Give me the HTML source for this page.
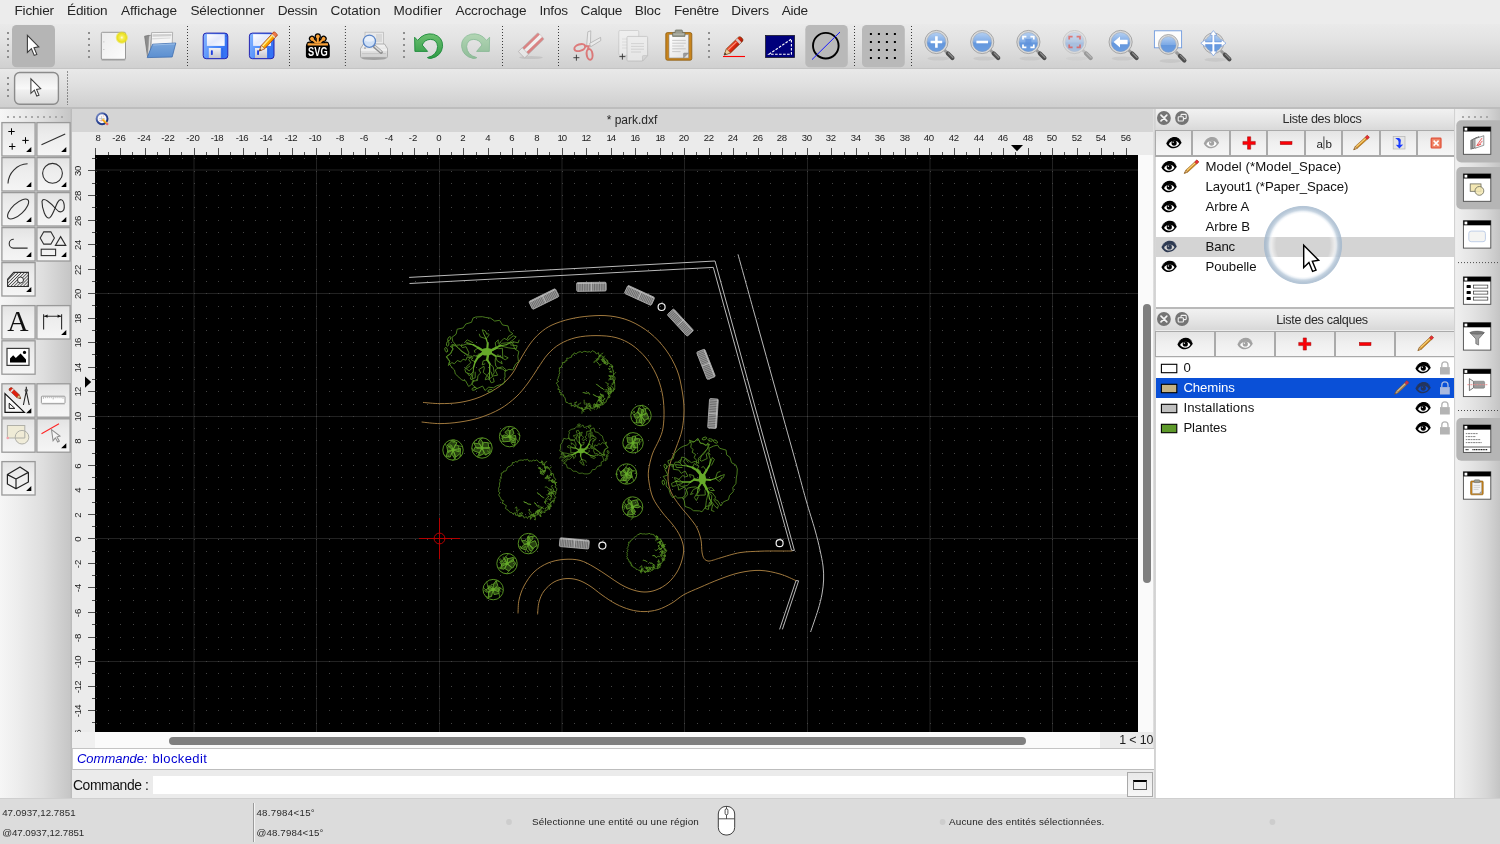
<!DOCTYPE html>
<html lang="fr"><head><meta charset="utf-8"><title>QCAD - park.dxf</title>
<style>
html,body{margin:0;padding:0;background:#ececec;}
body{width:1500px;height:844px;overflow:hidden;font-family:"Liberation Sans",sans-serif;}
#app{position:relative;width:1500px;height:844px;overflow:hidden;background:#ececec;}
.b{position:absolute;box-sizing:border-box;display:block;}
.t{position:absolute;white-space:nowrap;font-family:"Liberation Sans",sans-serif;}
svg{overflow:visible;}
#app{will-change:transform;}

</style></head>
<body>
<div id="app">
<div class="b " style="left:0px;top:0px;width:1500px;height:24px;background:#ececec;"></div>
<span class="t" style="left:14.50px;top:4.09px;font-size:13.6px;line-height:13.6px;color:#262626;letter-spacing:-0.213px;">Fichier</span>
<span class="t" style="left:67.00px;top:4.09px;font-size:13.6px;line-height:13.6px;color:#262626;letter-spacing:-0.152px;">Édition</span>
<span class="t" style="left:121.00px;top:4.09px;font-size:13.6px;line-height:13.6px;color:#262626;letter-spacing:-0.048px;">Affichage</span>
<span class="t" style="left:190.40px;top:4.09px;font-size:13.6px;line-height:13.6px;color:#262626;letter-spacing:-0.114px;">Sélectionner</span>
<span class="t" style="left:277.80px;top:4.09px;font-size:13.6px;line-height:13.6px;color:#262626;letter-spacing:-0.342px;">Dessin</span>
<span class="t" style="left:330.40px;top:4.09px;font-size:13.6px;line-height:13.6px;color:#262626;letter-spacing:-0.079px;">Cotation</span>
<span class="t" style="left:393.40px;top:4.09px;font-size:13.6px;line-height:13.6px;color:#262626;letter-spacing:0.081px;">Modifier</span>
<span class="t" style="left:455.40px;top:4.09px;font-size:13.6px;line-height:13.6px;color:#262626;letter-spacing:-0.079px;">Accrochage</span>
<span class="t" style="left:539.50px;top:4.09px;font-size:13.6px;line-height:13.6px;color:#262626;letter-spacing:-0.234px;">Infos</span>
<span class="t" style="left:580.60px;top:4.09px;font-size:13.6px;line-height:13.6px;color:#262626;letter-spacing:-0.263px;">Calque</span>
<span class="t" style="left:634.70px;top:4.09px;font-size:13.6px;line-height:13.6px;color:#262626;letter-spacing:-0.111px;">Bloc</span>
<span class="t" style="left:673.90px;top:4.09px;font-size:13.6px;line-height:13.6px;color:#262626;letter-spacing:-0.264px;">Fenêtre</span>
<span class="t" style="left:731.30px;top:4.09px;font-size:13.6px;line-height:13.6px;color:#262626;letter-spacing:-0.170px;">Divers</span>
<span class="t" style="left:781.70px;top:4.09px;font-size:13.6px;line-height:13.6px;color:#262626;letter-spacing:-0.252px;">Aide</span>
<div class="b " style="left:0px;top:24px;width:1500px;height:44px;background:linear-gradient(#eaeaea,#e2e2e2 40%,#d0d0d0);"></div>
<div class="b " style="left:0px;top:67.5px;width:1500px;height:1px;background:#c4c4c4;"></div>
<div class="b " style="left:0px;top:68.5px;width:1500px;height:1px;background:#e6e6e6;"></div>
<div class="b " style="left:0px;top:69px;width:1500px;height:38px;background:linear-gradient(#e9e9e9,#e0e0e0 40%,#cfcfcf);"></div>
<div class="b " style="left:0px;top:107px;width:1500px;height:1.5px;background:#bdbdbd;"></div>
<div class="b " style="left:0px;top:108.5px;width:1500px;height:690px;background:#ececec;"></div>
<svg class="b" style="left:0px;top:0px;" width="1500" height="108" viewBox="0 0 1500 108"><defs>
<linearGradient id="lensg" x1="0" y1="0" x2="0" y2="1"><stop offset="0" stop-color="#b9d3f3"/><stop offset="0.5" stop-color="#7fabe6"/><stop offset="1" stop-color="#8fb9ee"/></linearGradient>
<linearGradient id="paperg" x1="0" y1="0" x2="1" y2="1"><stop offset="0" stop-color="#ececec"/><stop offset="1" stop-color="#fcfcfc"/></linearGradient>
<radialGradient id="glow"><stop offset="0" stop-color="#fffef0"/><stop offset="0.25" stop-color="#f6ee5a"/><stop offset="0.7" stop-color="#e9df1c"/><stop offset="1" stop-color="#e9df1c" stop-opacity="0"/></radialGradient>
<linearGradient id="folderg" x1="0" y1="0" x2="0" y2="1"><stop offset="0" stop-color="#7aa6dc"/><stop offset="1" stop-color="#5b8fd0"/></linearGradient>
<linearGradient id="floppyg" x1="0" y1="0" x2="1" y2="0.35"><stop offset="0" stop-color="#8ab8ff"/><stop offset="0.55" stop-color="#4f8cfb"/><stop offset="1" stop-color="#3573f4"/></linearGradient>
<linearGradient id="labelg" x1="0" y1="0" x2="1" y2="1"><stop offset="0" stop-color="#ffffff"/><stop offset="0.5" stop-color="#e4e9fc"/><stop offset="1" stop-color="#fbfcff"/></linearGradient>
<linearGradient id="metalg" x1="0" y1="0" x2="0" y2="1"><stop offset="0" stop-color="#f0f0f4"/><stop offset="1" stop-color="#c4c4cc"/></linearGradient>
<linearGradient id="pencilg" x1="0" y1="0" x2="0" y2="1"><stop offset="0" stop-color="#ffd24a"/><stop offset="0.45" stop-color="#ffb400"/><stop offset="1" stop-color="#f08a00"/></linearGradient>
<linearGradient id="undog" x1="0" y1="0" x2="0" y2="1"><stop offset="0" stop-color="#6cc070"/><stop offset="1" stop-color="#2f9a45"/></linearGradient>
<linearGradient id="printg" x1="0" y1="0" x2="0" y2="1"><stop offset="0" stop-color="#f4f4f4"/><stop offset="1" stop-color="#cfcfcf"/></linearGradient>
<linearGradient id="clipg" x1="0" y1="0" x2="1" y2="1"><stop offset="0" stop-color="#ffffff"/><stop offset="1" stop-color="#e0e0e0"/></linearGradient>
<linearGradient id="redpg" x1="0" y1="0" x2="1" y2="1"><stop offset="0" stop-color="#ff6a4a"/><stop offset="0.5" stop-color="#e02a10"/><stop offset="1" stop-color="#a81808"/></linearGradient>
</defs><rect x="7" y="32" width="2" height="2" fill="#8e8e8e"/><rect x="7" y="38" width="2" height="2" fill="#8e8e8e"/><rect x="7" y="44" width="2" height="2" fill="#8e8e8e"/><rect x="7" y="50" width="2" height="2" fill="#8e8e8e"/><rect x="7" y="56" width="2" height="2" fill="#8e8e8e"/><rect x="12" y="25" width="43" height="42.3" rx="4.5" fill="#b5b5b5"/><path transform="translate(27.4,35.4)" d="M0,0 L0,17 L4,13.2 L6.8,20 L9.4,19 L6.6,12.3 L11.4,11.5 Z" fill="#fff" stroke="#3c3c3c" stroke-width="1.1" stroke-linejoin="miter"/><rect x="88" y="32" width="2" height="2" fill="#8e8e8e"/><rect x="88" y="38" width="2" height="2" fill="#8e8e8e"/><rect x="88" y="44" width="2" height="2" fill="#8e8e8e"/><rect x="88" y="50" width="2" height="2" fill="#8e8e8e"/><rect x="88" y="56" width="2" height="2" fill="#8e8e8e"/><rect x="101.3" y="32.6" width="24.2" height="27.2" rx="1" fill="#000" opacity="0.18" transform="translate(0,1)"/><rect x="101.3" y="32.3" width="24.2" height="27" rx="1.2" fill="url(#paperg)" stroke="#8e8e8e" stroke-width="0.9"/><rect x="103.2" y="41.5" width="1.2" height="0.8" fill="#bbb"/><rect x="103.2" y="49" width="1.2" height="0.8" fill="#bbb"/><circle cx="121.8" cy="37.6" r="6.6" fill="url(#glow)"/><path d="M144.6,36.2 L149,35.3 L151,36 L151.5,54.5 L147.5,56.5 Z" fill="#8c8c8c" stroke="#6e6e6e" stroke-width="0.7"/><path d="M151.6,32.6 L172.6,32.3 L172.2,45 L150.8,51 Z" fill="#f6f6f6" stroke="#9a9a9a" stroke-width="0.7"/><path d="M152.5,34.3 L171.5,34 L171.3,36.2 L152.4,36.8 Z" fill="#cfcfcf"/><path d="M152.3,38 L170.6,37.4 L170.5,38.6 L152.2,39.4 Z" fill="#dadada"/><path d="M149,36 L151.2,35 L150.2,53 L147.6,55.8 Z" fill="#dcdcdc" stroke="#8a8a8a" stroke-width="0.5"/><path d="M152.6,44.2 L175.8,43 L172.2,57 L147.2,57.6 Z" fill="url(#folderg)" stroke="#3f6fb0" stroke-width="0.8" stroke-linejoin="round"/><path d="M153.2,45 L175,43.9" stroke="#a6c6ec" stroke-width="0.8"/><line x1="187.5" y1="26" x2="187.5" y2="67" stroke="#3a3a3a" stroke-width="1" stroke-dasharray="1 2"/><rect x="203.2" y="33.1" width="24.6" height="25.6" rx="3" fill="url(#floppyg)" stroke="#2424b0" stroke-width="1"/><rect x="206.9" y="34.2" width="17.8" height="11.7" fill="url(#labelg)"/><rect x="208.8" y="48" width="12" height="10" fill="url(#metalg)"/><rect x="210.9" y="50.3" width="1.9" height="4.6" rx="0.6" fill="#1f3fe0"/><rect x="221.6" y="48.2" width="1.6" height="9.4" fill="#2f68ec"/><rect x="225.6" y="35.6" width="1" height="1" fill="#3a4ab0"/><rect x="249.4" y="33.1" width="24.6" height="25.6" rx="3" fill="url(#floppyg)" stroke="#2424b0" stroke-width="1"/><rect x="253.1" y="34.2" width="17.8" height="11.7" fill="url(#labelg)"/><rect x="255" y="48" width="12" height="10" fill="url(#metalg)"/><rect x="257.1" y="50.3" width="1.9" height="4.6" rx="0.6" fill="#1f3fe0"/><rect x="267.8" y="48.2" width="1.6" height="9.4" fill="#2f68ec"/><rect x="271.8" y="35.6" width="1" height="1" fill="#3a4ab0"/><g transform="translate(259.4,51) rotate(-47.2)"><path d="M0,0 L5.4,-2.4 L23.6,-2.4 L23.6,2.4 L5.4,2.4 Z" fill="url(#pencilg)" stroke="#a23a14" stroke-width="0.7"/><path d="M0,0 L5.4,-2.4 L5.4,2.4 Z" fill="#f6e2bc" stroke="#a23a14" stroke-width="0.5"/><path d="M0,0 L2,-0.9 L2,0.9 Z" fill="#30402a"/><rect x="20.8" y="-2.4" width="3.6" height="4.8" rx="1.2" fill="#f07a4a" stroke="#a23a14" stroke-width="0.6"/><rect x="19.6" y="-2.2" width="1.5" height="4.4" fill="#e8e0c8"/><path d="M5.8,-0.9 L19.4,-0.9" stroke="#fff0a0" stroke-width="1"/></g><line x1="289.5" y1="26" x2="289.5" y2="67" stroke="#3a3a3a" stroke-width="1" stroke-dasharray="1 2"/><g><g transform="translate(317.8,44.6) rotate(-90)"><path d="M0,0 L0,-7.2" stroke="#000" stroke-width="4.6" stroke-linecap="round"/><circle cx="0" cy="-8.2" r="3.1" fill="#000"/></g><g transform="translate(317.8,44.6) rotate(-45)"><path d="M0,0 L0,-7.2" stroke="#000" stroke-width="4.6" stroke-linecap="round"/><circle cx="0" cy="-8.2" r="3.1" fill="#000"/></g><g transform="translate(317.8,44.6) rotate(0)"><path d="M0,0 L0,-7.2" stroke="#000" stroke-width="4.6" stroke-linecap="round"/><circle cx="0" cy="-8.2" r="3.1" fill="#000"/></g><g transform="translate(317.8,44.6) rotate(45)"><path d="M0,0 L0,-7.2" stroke="#000" stroke-width="4.6" stroke-linecap="round"/><circle cx="0" cy="-8.2" r="3.1" fill="#000"/></g><g transform="translate(317.8,44.6) rotate(90)"><path d="M0,0 L0,-7.2" stroke="#000" stroke-width="4.6" stroke-linecap="round"/><circle cx="0" cy="-8.2" r="3.1" fill="#000"/></g><g transform="translate(317.8,44.6) rotate(-90)"><path d="M0,0 L0,-7.2" stroke="#f9a23a" stroke-width="2.1" stroke-linecap="round"/><circle cx="0" cy="-8.2" r="1.9" fill="#f9a23a"/></g><g transform="translate(317.8,44.6) rotate(-45)"><path d="M0,0 L0,-7.2" stroke="#f9a23a" stroke-width="2.1" stroke-linecap="round"/><circle cx="0" cy="-8.2" r="1.9" fill="#f9a23a"/></g><g transform="translate(317.8,44.6) rotate(0)"><path d="M0,0 L0,-7.2" stroke="#f9a23a" stroke-width="2.1" stroke-linecap="round"/><circle cx="0" cy="-8.2" r="1.9" fill="#f9a23a"/></g><g transform="translate(317.8,44.6) rotate(45)"><path d="M0,0 L0,-7.2" stroke="#f9a23a" stroke-width="2.1" stroke-linecap="round"/><circle cx="0" cy="-8.2" r="1.9" fill="#f9a23a"/></g><g transform="translate(317.8,44.6) rotate(90)"><path d="M0,0 L0,-7.2" stroke="#f9a23a" stroke-width="2.1" stroke-linecap="round"/><circle cx="0" cy="-8.2" r="1.9" fill="#f9a23a"/></g><rect x="305.9" y="43.6" width="23.9" height="14.6" rx="2.6" fill="#000"/><rect x="307.6" y="43.4" width="20.4" height="2.1" fill="#f9a23a"/><text x="317.9" y="56.4" text-anchor="middle" font-family="Liberation Sans, sans-serif" font-weight="bold" font-size="11.6" fill="#fff" textLength="19.6" lengthAdjust="spacingAndGlyphs" transform="translate(0,56.4) scale(1,1.1) translate(0,-56.4)">SVG</text></g><line x1="345.4" y1="26" x2="345.4" y2="67" stroke="#3a3a3a" stroke-width="1" stroke-dasharray="1 2"/><ellipse cx="374" cy="58.3" rx="12.5" ry="1.6" fill="#000" opacity="0.25"/><rect x="365" y="32.2" width="18.5" height="14" fill="#e9e9e9" stroke="#b5b5b5" stroke-width="0.7"/><rect x="376" y="34" width="6" height="8" fill="#d8d8d8"/><path d="M363.5,44 L384.5,44 L387.5,48.6 L387.5,56.6 Q387.5,57.6 386.5,57.6 L361.5,57.6 Q360.5,57.6 360.5,56.6 L360.5,48.6 Z" fill="url(#printg)" stroke="#9f9f9f" stroke-width="0.8"/><path d="M360.8,50 L387.2,50" stroke="#fafafa" stroke-width="1"/><path d="M362,53.6 L386,53.6" stroke="#bdbdbd" stroke-width="0.7"/><rect x="364" y="47.6" width="2" height="0.9" fill="#888"/><line x1="374.6" y1="46.6" x2="381.2" y2="52.2" stroke="#8d8d8d" stroke-width="3.4" stroke-linecap="round"/><line x1="375" y1="46.4" x2="381" y2="51.6" stroke="#dcdcdc" stroke-width="1.4" stroke-linecap="round"/><circle cx="369.4" cy="41.2" r="6.1" fill="#cfe0f6" stroke="#5c86c8" stroke-width="1.3"/><path d="M364.3,40.2 A5.2,5.2 0 0 1 374.5,40.2 Q369.4,43.4 364.3,40.2Z" fill="#eef4fc" opacity="0.8"/><rect x="403" y="32" width="2" height="2" fill="#8e8e8e"/><rect x="403" y="38" width="2" height="2" fill="#8e8e8e"/><rect x="403" y="44" width="2" height="2" fill="#8e8e8e"/><rect x="403" y="50" width="2" height="2" fill="#8e8e8e"/><rect x="403" y="56" width="2" height="2" fill="#8e8e8e"/><path d="M414.6,37.2 L417.6,40.4 Q424,32.4 433.4,34.2 Q443,37 442.6,46.4 Q441.6,56 431.2,58.4 Q427.6,58.6 427.4,57.6 Q437.2,55.2 437.6,46.6 Q437,39.4 430.4,39.4 Q424.6,39.6 422.2,45 L427.6,51.4 L414.9,51.4 Z" fill="url(#undog)" stroke="#1c8a3a" stroke-width="0.9" stroke-linejoin="round"/><g transform="translate(904.2,0) scale(-1,1)" opacity="0.42"><path d="M414.6,37.2 L417.6,40.4 Q424,32.4 433.4,34.2 Q443,37 442.6,46.4 Q441.6,56 431.2,58.4 Q427.6,58.6 427.4,57.6 Q437.2,55.2 437.6,46.6 Q437,39.4 430.4,39.4 Q424.6,39.6 422.2,45 L427.6,51.4 L414.9,51.4 Z" fill="url(#undog)" stroke="#1c8a3a" stroke-width="0.9" stroke-linejoin="round"/></g><line x1="502.5" y1="26" x2="502.5" y2="67" stroke="#3a3a3a" stroke-width="1" stroke-dasharray="1 2"/><g opacity="0.5"><ellipse cx="531" cy="57.6" rx="12" ry="1.5" fill="#9a9a9a" opacity="0.6"/><g transform="translate(521.3,54.5) rotate(-44)"><rect x="0" y="-4.2" width="27.2" height="9" rx="1" fill="#d42a2a" stroke="#8a8a8a" stroke-width="0.6"/><rect x="0" y="-1.4" width="27.2" height="3.2" fill="#ffffff"/><rect x="0" y="-4.2" width="5.4" height="9" fill="#f4f4f4" stroke="#8a8a8a" stroke-width="0.6"/></g></g><line x1="558.5" y1="26" x2="558.5" y2="67" stroke="#3a3a3a" stroke-width="1" stroke-dasharray="1 2"/><g opacity="0.55"><path d="M586.6,46.4 L587.8,31.8 L590.8,30.8 L590.4,45.4 Z" fill="#f2f2f2" stroke="#7a7a7a" stroke-width="0.7"/><path d="M589.6,43.4 L600.6,37.4 L600.8,40.6 L590.6,46.8 Z" fill="#f2f2f2" stroke="#7a7a7a" stroke-width="0.7"/><ellipse cx="579.8" cy="47.6" rx="5.6" ry="3.2" transform="rotate(-18 579.8 47.6)" fill="none" stroke="#dc2a2a" stroke-width="2"/><ellipse cx="589.6" cy="54.4" rx="2.9" ry="5.4" transform="rotate(-8 589.6 54.4)" fill="none" stroke="#dc2a2a" stroke-width="2"/><path d="M584.6,46 L588.6,46.4 L588,49.6" fill="none" stroke="#dc2a2a" stroke-width="2"/></g><path d="M573.4,57.7 L579.4,57.7 M576.4,54.7 L576.4,60.7" stroke="#333" stroke-width="0.9"/><g opacity="0.55"><rect x="618.8" y="30.4" width="20" height="25" rx="1.4" fill="#f6f6f6" stroke="#a8a8a8" stroke-width="0.7"/><path d="M622,39 h9 M622,42 h9 M622,45 h9 M622,48 h9" stroke="#cfcfcf" stroke-width="0.8"/><path d="M627,37.4 Q627,36.4 628,36.4 L646.6,36.4 Q647.6,36.4 647.6,37.4 L647.6,55.6 L642.6,61 L628,61 Q627,61 627,60 Z" fill="#f4f4f4" stroke="#9e9e9e" stroke-width="0.7"/><path d="M631,43.6 h13 M631,46.4 h13 M631,49.2 h13 M631,52 h10" stroke="#bdbdbd" stroke-width="0.8"/><path d="M647.6,55.6 L642.6,61 L642.4,56.4 Q642.4,55.6 643.4,55.6 Z" fill="#d4d4d4" stroke="#9e9e9e" stroke-width="0.5"/></g><path d="M619.4,56.6 L625.4,56.6 M622.4,53.6 L622.4,59.6" stroke="#333" stroke-width="0.9"/><rect x="665.8" y="32.6" width="26" height="27.6" rx="1.6" fill="#c8841c" stroke="#8a5a10" stroke-width="0.8"/><path d="M669,34.6 L688.6,34.6 L688.6,58 L669,58 Z" fill="url(#clipg)" stroke="#8a8a8a" stroke-width="0.6"/><path d="M672.2,40.4 h13.6 M672.2,43.2 h13.6 M672.2,46 h11.6 M672.2,48.8 h13.6 M672.2,51.6 h8.4" stroke="#c4c4c4" stroke-width="0.9"/><path d="M688.6,53 L683.6,58 L683.4,54 Q683.4,53 684.4,53 Z" fill="#9c9c9c" stroke="#777" stroke-width="0.4"/><path d="M672.6,36.4 L672.6,33.4 Q672.6,32.4 673.6,32.4 L675.2,32.4 L675.2,30.8 Q675.2,30 676,30 L681.6,30 Q682.4,30 682.4,30.8 L682.4,32.4 L684,32.4 Q685,32.4 685,33.4 L685,36.4 Z" fill="#9a9c90" stroke="#666a5c" stroke-width="0.7"/><path d="M673.4,34.2 h10.8" stroke="#c4c6ba" stroke-width="0.8"/><rect x="708" y="32" width="2" height="2" fill="#8e8e8e"/><rect x="708" y="38" width="2" height="2" fill="#8e8e8e"/><rect x="708" y="44" width="2" height="2" fill="#8e8e8e"/><rect x="708" y="50" width="2" height="2" fill="#8e8e8e"/><rect x="708" y="56" width="2" height="2" fill="#8e8e8e"/><g transform="translate(724.2,55) rotate(-44)"><path d="M0,0 L6,-2.9 L22.6,-2.9 Q24.6,-2.9 24.6,0 Q24.6,2.9 22.6,2.9 L6,2.9 Z" fill="url(#redpg)" stroke="#7a3a10" stroke-width="0.7"/><path d="M0,0 L6,-2.9 L6,2.9 Z" fill="#efcf9c" stroke="#7a5a30" stroke-width="0.5"/><path d="M0,0 L2.2,-1.1 L2.2,1.1 Z" fill="#222"/><rect x="18.6" y="-2.9" width="2.6" height="5.8" fill="#d8d8d8" opacity="0.9"/><path d="M6.4,-1 L18,-1" stroke="#ff9a80" stroke-width="1"/></g><line x1="723" y1="56.5" x2="745" y2="56.5" stroke="#f00" stroke-width="1.1"/><rect x="765.6" y="35.5" width="29" height="22" fill="#00007c" stroke="#1a1a2a" stroke-width="0.8"/><path d="M769,54.2 L791.4,39 L791.4,54.2 Z" fill="none" stroke="#ffffff" stroke-width="1.1" stroke-dasharray="2.6 1.4"/><rect x="805.3" y="25" width="42.5" height="42.3" rx="4.5" fill="#b9b9b9"/><circle cx="825.8" cy="45.7" r="12.8" fill="none" stroke="#000" stroke-width="1.9"/><line x1="812" y1="59.6" x2="840" y2="32" stroke="#1a1aff" stroke-width="1"/><line x1="854.5" y1="26" x2="854.5" y2="67" stroke="#3a3a3a" stroke-width="1" stroke-dasharray="1 2"/><rect x="862" y="25" width="42.8" height="42.3" rx="4.5" fill="#b9b9b9"/><rect x="869.9" y="33" width="2" height="2" fill="#000"/><rect x="869.9" y="41" width="2" height="2" fill="#000"/><rect x="869.9" y="49" width="2" height="2" fill="#000"/><rect x="869.9" y="57" width="2" height="2" fill="#000"/><rect x="877.9" y="33" width="2" height="2" fill="#000"/><rect x="877.9" y="41" width="2" height="2" fill="#000"/><rect x="877.9" y="49" width="2" height="2" fill="#000"/><rect x="877.9" y="57" width="2" height="2" fill="#000"/><rect x="885.9" y="33" width="2" height="2" fill="#000"/><rect x="885.9" y="41" width="2" height="2" fill="#000"/><rect x="885.9" y="49" width="2" height="2" fill="#000"/><rect x="885.9" y="57" width="2" height="2" fill="#000"/><rect x="893.9" y="33" width="2" height="2" fill="#000"/><rect x="893.9" y="41" width="2" height="2" fill="#000"/><rect x="893.9" y="49" width="2" height="2" fill="#000"/><rect x="893.9" y="57" width="2" height="2" fill="#000"/><line x1="911.5" y1="26" x2="911.5" y2="67" stroke="#3a3a3a" stroke-width="1" stroke-dasharray="1 2"/><g><ellipse cx="938.4" cy="58.5" rx="11" ry="2" fill="#000" opacity="0.06"/><line x1="943.9" y1="49.5" x2="947.4" y2="53" stroke="#9a9a9a" stroke-width="3"/><line x1="947.9" y1="53.5" x2="952.4" y2="58" stroke="#4d4d4d" stroke-width="4.2" stroke-linecap="round"/><line x1="948.4" y1="53" x2="952.9" y2="57.5" stroke="#8a8a8a" stroke-width="1.2" stroke-linecap="round"/><circle cx="936.4" cy="42" r="10.5" fill="url(#lensg)" stroke="#d9d9d9" stroke-width="2.2"/><circle cx="936.4" cy="42" r="11.6" fill="none" stroke="#8f8f8f" stroke-width="0.7"/><circle cx="936.4" cy="42" r="9.5" fill="none" stroke="#9aa7b8" stroke-width="0.6"/><path d="M927.1,42.5 A9.3,9.3 0 0 0 945.7,42.5 Z" fill="#4f86d6" opacity="0.55"/></g><path d="M930.6,42 h11.6 M936.4,36.2 v11.6" stroke="#fff" stroke-width="2.6"/><g><ellipse cx="984.2" cy="58.5" rx="11" ry="2" fill="#000" opacity="0.06"/><line x1="989.7" y1="49.5" x2="993.2" y2="53" stroke="#9a9a9a" stroke-width="3"/><line x1="993.7" y1="53.5" x2="998.2" y2="58" stroke="#4d4d4d" stroke-width="4.2" stroke-linecap="round"/><line x1="994.2" y1="53" x2="998.7" y2="57.5" stroke="#8a8a8a" stroke-width="1.2" stroke-linecap="round"/><circle cx="982.2" cy="42" r="10.5" fill="url(#lensg)" stroke="#d9d9d9" stroke-width="2.2"/><circle cx="982.2" cy="42" r="11.6" fill="none" stroke="#8f8f8f" stroke-width="0.7"/><circle cx="982.2" cy="42" r="9.5" fill="none" stroke="#9aa7b8" stroke-width="0.6"/><path d="M972.9,42.5 A9.3,9.3 0 0 0 991.5,42.5 Z" fill="#4f86d6" opacity="0.55"/></g><path d="M976.4,42 h11.6" stroke="#fff" stroke-width="2.6"/><g><ellipse cx="1030.4" cy="58.5" rx="11" ry="2" fill="#000" opacity="0.06"/><line x1="1035.9" y1="49.5" x2="1039.4" y2="53" stroke="#9a9a9a" stroke-width="3"/><line x1="1039.9" y1="53.5" x2="1044.4" y2="58" stroke="#4d4d4d" stroke-width="4.2" stroke-linecap="round"/><line x1="1040.4" y1="53" x2="1044.9" y2="57.5" stroke="#8a8a8a" stroke-width="1.2" stroke-linecap="round"/><circle cx="1028.4" cy="42" r="10.5" fill="url(#lensg)" stroke="#d9d9d9" stroke-width="2.2"/><circle cx="1028.4" cy="42" r="11.6" fill="none" stroke="#8f8f8f" stroke-width="0.7"/><circle cx="1028.4" cy="42" r="9.5" fill="none" stroke="#9aa7b8" stroke-width="0.6"/><path d="M1019.1,42.5 A9.3,9.3 0 0 0 1037.7,42.5 Z" fill="#4f86d6" opacity="0.55"/></g><path d="M1023,39.6 v-3 h3.4 M1030.4,36.6 h3.4 v3 M1033.8,44.4 v3 h-3.4 M1026.4,47.4 h-3.4 v-3" fill="none" stroke="#fff" stroke-width="1.7"/><rect x="1025.4" y="39" width="6" height="6" fill="#5f92dc" opacity="0.7"/><g opacity="0.45"><ellipse cx="1076.6" cy="58.5" rx="11" ry="2" fill="#000" opacity="0.06"/><line x1="1082.1" y1="49.5" x2="1085.6" y2="53" stroke="#9a9a9a" stroke-width="3"/><line x1="1086.1" y1="53.5" x2="1090.6" y2="58" stroke="#4d4d4d" stroke-width="4.2" stroke-linecap="round"/><line x1="1086.6" y1="53" x2="1091.1" y2="57.5" stroke="#8a8a8a" stroke-width="1.2" stroke-linecap="round"/><circle cx="1074.6" cy="42" r="10.5" fill="url(#lensg)" stroke="#d9d9d9" stroke-width="2.2"/><circle cx="1074.6" cy="42" r="11.6" fill="none" stroke="#8f8f8f" stroke-width="0.7"/><circle cx="1074.6" cy="42" r="9.5" fill="none" stroke="#9aa7b8" stroke-width="0.6"/><path d="M1065.3,42.5 A9.3,9.3 0 0 0 1083.9,42.5 Z" fill="#4f86d6" opacity="0.55"/></g><g opacity="0.6"><path d="M1069.2,39.6 v-3 h3.4 M1076.6,36.6 h3.4 v3 M1080,44.4 v3 h-3.4 M1072.6,47.4 h-3.4 v-3" fill="none" stroke="#f03a2a" stroke-width="1.7"/></g><g><ellipse cx="1122.6" cy="58.5" rx="11" ry="2" fill="#000" opacity="0.06"/><line x1="1128.1" y1="49.5" x2="1131.6" y2="53" stroke="#9a9a9a" stroke-width="3"/><line x1="1132.1" y1="53.5" x2="1136.6" y2="58" stroke="#4d4d4d" stroke-width="4.2" stroke-linecap="round"/><line x1="1132.6" y1="53" x2="1137.1" y2="57.5" stroke="#8a8a8a" stroke-width="1.2" stroke-linecap="round"/><circle cx="1120.6" cy="42" r="10.5" fill="url(#lensg)" stroke="#d9d9d9" stroke-width="2.2"/><circle cx="1120.6" cy="42" r="11.6" fill="none" stroke="#8f8f8f" stroke-width="0.7"/><circle cx="1120.6" cy="42" r="9.5" fill="none" stroke="#9aa7b8" stroke-width="0.6"/><path d="M1111.3,42.5 A9.3,9.3 0 0 0 1129.9,42.5 Z" fill="#4f86d6" opacity="0.55"/></g><path d="M1113.6,42 L1120,36.4 L1120,39.8 L1127.6,39.8 L1127.6,44.2 L1120,44.2 L1120,47.6 Z" fill="#fff"/><rect x="1154.4" y="30.8" width="27.2" height="17" fill="#fdfdfd" stroke="#6f9adf" stroke-width="0.9"/><g><ellipse cx="1170.4" cy="60.9" rx="11" ry="2" fill="#000" opacity="0.06"/><line x1="1175.9" y1="51.9" x2="1179.4" y2="55.4" stroke="#9a9a9a" stroke-width="3"/><line x1="1179.9" y1="55.9" x2="1184.4" y2="60.4" stroke="#4d4d4d" stroke-width="4.2" stroke-linecap="round"/><line x1="1180.4" y1="55.4" x2="1184.9" y2="59.9" stroke="#8a8a8a" stroke-width="1.2" stroke-linecap="round"/><circle cx="1168.4" cy="44.4" r="8.8" fill="url(#lensg)" stroke="#d9d9d9" stroke-width="2.2"/><circle cx="1168.4" cy="44.4" r="9.9" fill="none" stroke="#8f8f8f" stroke-width="0.7"/><circle cx="1168.4" cy="44.4" r="7.8" fill="none" stroke="#9aa7b8" stroke-width="0.6"/><path d="M1160.8,44.9 A7.6,7.6 0 0 0 1176,44.9 Z" fill="#4f86d6" opacity="0.55"/></g><g><ellipse cx="1215.4" cy="59.7" rx="11" ry="2" fill="#000" opacity="0.06"/><line x1="1220.9" y1="50.7" x2="1224.4" y2="54.2" stroke="#9a9a9a" stroke-width="3"/><line x1="1224.9" y1="54.7" x2="1229.4" y2="59.2" stroke="#4d4d4d" stroke-width="4.2" stroke-linecap="round"/><line x1="1225.4" y1="54.2" x2="1229.9" y2="58.7" stroke="#8a8a8a" stroke-width="1.2" stroke-linecap="round"/><circle cx="1213.4" cy="43.2" r="9.2" fill="url(#lensg)" stroke="#d9d9d9" stroke-width="2.2"/><circle cx="1213.4" cy="43.2" r="10.3" fill="none" stroke="#8f8f8f" stroke-width="0.7"/><circle cx="1213.4" cy="43.2" r="8.2" fill="none" stroke="#9aa7b8" stroke-width="0.6"/><path d="M1205.4,43.7 A8,8 0 0 0 1221.4,43.7 Z" fill="#4f86d6" opacity="0.55"/></g><g fill="#fff" stroke="#5f8ede" stroke-width="0.6"><path d="M1213.4,30.6 L1217,35.2 L1214.7,35.2 L1214.7,41.9 L1221.4,41.9 L1221.4,39.6 L1226,43.2 L1221.4,46.8 L1221.4,44.5 L1214.7,44.5 L1214.7,51.2 L1217,51.2 L1213.4,55.8 L1209.8,51.2 L1212.1,51.2 L1212.1,44.5 L1205.4,44.5 L1205.4,46.8 L1200.8,43.2 L1205.4,39.6 L1205.4,41.9 L1212.1,41.9 L1212.1,35.2 L1209.8,35.2 Z"/></g><rect x="7" y="77" width="2" height="2" fill="#8e8e8e"/><rect x="7" y="83" width="2" height="2" fill="#8e8e8e"/><rect x="7" y="89" width="2" height="2" fill="#8e8e8e"/><rect x="7" y="95" width="2" height="2" fill="#8e8e8e"/><defs><linearGradient id="btn2g" x1="0" y1="0" x2="0" y2="1"><stop offset="0" stop-color="#e6e6e6"/><stop offset="0.5" stop-color="#f9f9f9"/><stop offset="0.56" stop-color="#f0f0f0"/><stop offset="1" stop-color="#dadada"/></linearGradient></defs><rect x="14.6" y="72.5" width="43.8" height="31.8" rx="5" fill="url(#btn2g)" stroke="#8b8b8b" stroke-width="1.4"/><path transform="translate(30.9,78.8) scale(0.86)" d="M0,0 L0,17 L4,13.2 L6.8,20 L9.4,19 L6.6,12.3 L11.4,11.5 Z" fill="#fff" stroke="#3c3c3c" stroke-width="1.2"/><line x1="67.5" y1="71.5" x2="67.5" y2="105" stroke="#3a3a3a" stroke-width="1" stroke-dasharray="1 2"/></svg>
<div class="b " style="left:0px;top:108.5px;width:72px;height:690px;background:linear-gradient(90deg,#f6f6f6 0%,#ededed 25%,#dedede 60%,#c6c6c6 97%,#b8b8b8 100%);"></div>
<svg class="b" style="left:0px;top:0px;" width="72" height="800" viewBox="0 0 72 800"><defs><linearGradient id="tbg" x1="0" y1="0" x2="0" y2="1"><stop offset="0" stop-color="#e3e3e3"/><stop offset="0.35" stop-color="#ececec"/><stop offset="1" stop-color="#f5f5f5"/></linearGradient><pattern id="hatch" width="2.2" height="2.2" patternUnits="userSpaceOnUse" patternTransform="rotate(-45)"><rect width="2.2" height="2.2" fill="#e8e8e8"/><line x1="0" y1="1.1" x2="2.2" y2="1.1" stroke="#444" stroke-width="0.7"/></pattern></defs><rect x="7" y="116" width="2" height="2" fill="#a9a9a9"/><rect x="13" y="116" width="2" height="2" fill="#a9a9a9"/><rect x="19" y="116" width="2" height="2" fill="#a9a9a9"/><rect x="25" y="116" width="2" height="2" fill="#a9a9a9"/><rect x="31" y="116" width="2" height="2" fill="#a9a9a9"/><rect x="37" y="116" width="2" height="2" fill="#a9a9a9"/><rect x="43" y="116" width="2" height="2" fill="#a9a9a9"/><rect x="49" y="116" width="2" height="2" fill="#a9a9a9"/><rect x="55" y="116" width="2" height="2" fill="#a9a9a9"/><rect x="61" y="116" width="2" height="2" fill="#a9a9a9"/><rect x="1.9" y="122.6" width="33.2" height="33.4" fill="url(#tbg)" stroke="#999999" stroke-width="1.3"/><path d="M31.3,147 L31.3,152 L26.1,152 Z" fill="#000"/><rect x="36.9" y="122.6" width="33.2" height="33.4" fill="url(#tbg)" stroke="#999999" stroke-width="1.3"/><path d="M66.3,147 L66.3,152 L61.1,152 Z" fill="#000"/><rect x="1.9" y="157.6" width="33.2" height="33.4" fill="url(#tbg)" stroke="#999999" stroke-width="1.3"/><path d="M31.3,182 L31.3,187 L26.1,187 Z" fill="#000"/><rect x="36.9" y="157.6" width="33.2" height="33.4" fill="url(#tbg)" stroke="#999999" stroke-width="1.3"/><path d="M66.3,182 L66.3,187 L61.1,187 Z" fill="#000"/><rect x="1.9" y="192.6" width="33.2" height="33.4" fill="url(#tbg)" stroke="#999999" stroke-width="1.3"/><path d="M31.3,217 L31.3,222 L26.1,222 Z" fill="#000"/><rect x="36.9" y="192.6" width="33.2" height="33.4" fill="url(#tbg)" stroke="#999999" stroke-width="1.3"/><path d="M66.3,217 L66.3,222 L61.1,222 Z" fill="#000"/><rect x="1.9" y="227.6" width="33.2" height="33.4" fill="url(#tbg)" stroke="#999999" stroke-width="1.3"/><path d="M31.3,252 L31.3,257 L26.1,257 Z" fill="#000"/><rect x="36.9" y="227.6" width="33.2" height="33.4" fill="url(#tbg)" stroke="#999999" stroke-width="1.3"/><path d="M66.3,252 L66.3,257 L61.1,257 Z" fill="#000"/><rect x="1.9" y="262.6" width="33.2" height="33.4" fill="url(#tbg)" stroke="#999999" stroke-width="1.3"/><path d="M31.3,287 L31.3,292 L26.1,292 Z" fill="#000"/><path d="M8.3,131.5 h6.4 M11.5,128.3 v6.4" stroke="#000" stroke-width="1"/><path d="M22.3,140.4 h6.4 M25.5,137.2 v6.4" stroke="#000" stroke-width="1"/><path d="M9,146.5 h6.4 M12.2,143.3 v6.4" stroke="#000" stroke-width="1"/><line x1="41.5" y1="144.7" x2="65.2" y2="134" stroke="#2e2e2e" stroke-width="1.1"/><path d="M8,183.4 A20.5,20.5 0 0 1 27.6,163.8" fill="none" stroke="#2e2e2e" stroke-width="1.1"/><circle cx="52.5" cy="173.3" r="9.9" fill="none" stroke="#2e2e2e" stroke-width="1.1"/><ellipse cx="18.1" cy="209" rx="13.4" ry="5.6" transform="rotate(-43 18.1 209)" fill="none" stroke="#2e2e2e" stroke-width="1.1"/><path d="M42,201.4 C43,196 51,203 56,209 C60,214 65,212 64.2,205 C63.6,199.6 60.4,197.6 57.6,202.4 C55,207 53.4,214.6 49.8,217.6 C45.6,220.4 42,208 42,201.4 Z" fill="none" stroke="#2e2e2e" stroke-width="1.1"/><path d="M13.8,239.3 A4.4,4.4 0 0 0 13.4,248.1 L27.6,248.1" fill="none" stroke="#2e2e2e" stroke-width="1.1"/><polygon points="54.40,238.00 50.85,244.15 43.75,244.15 40.20,238.00 43.75,231.85 50.85,231.85" fill="none" stroke="#2e2e2e" stroke-width="1.1"/><polygon points="60.6,236.6 65.8,245.4 55.4,245.4" fill="none" stroke="#2e2e2e" stroke-width="1.1"/><rect x="41.2" y="249.2" width="14.4" height="6.4" fill="none" stroke="#2e2e2e" stroke-width="1.1"/><path d="M7.6,286.5 L7.6,279.3 L13.7,272.4 L28.4,272.4 L28.4,286.5 Z" fill="url(#hatch)" stroke="#2e2e2e" stroke-width="1.1"/><circle cx="20.5" cy="280" r="3" fill="#f2f2f2" stroke="#2e2e2e" stroke-width="1"/><rect x="1.9" y="305.6" width="33.2" height="33.4" fill="url(#tbg)" stroke="#999999" stroke-width="1.3"/><rect x="36.9" y="305.6" width="33.2" height="33.4" fill="url(#tbg)" stroke="#999999" stroke-width="1.3"/><path d="M66.3,330 L66.3,335 L61.1,335 Z" fill="#000"/><rect x="1.9" y="340.8" width="33.2" height="33.4" fill="url(#tbg)" stroke="#999999" stroke-width="1.3"/><path d="M43.6,314.2 V329.6 M61.6,314.2 V329.6 M44,316.2 H61.2" stroke="#2e2e2e" stroke-width="1.1" fill="none"/><path d="M44.2,316.2 L47.6,314.6 L47.6,317.8 Z M61,316.2 L57.6,314.6 L57.6,317.8 Z" fill="#111"/><rect x="7" y="348.4" width="22" height="17" fill="#fff" stroke="#3a3a3a" stroke-width="1.2"/><path d="M10,362.4 L10,358.6 L13.2,355.2 L15.8,358 L20.6,353.6 L26,359.4 L26,362.4 Z" fill="#000"/><circle cx="24.5" cy="352.4" r="1.6" fill="#000"/><rect x="1.9" y="383.8" width="33.2" height="33.4" fill="url(#tbg)" stroke="#999999" stroke-width="1.3"/><path d="M31.3,408.2 L31.3,413.2 L26.1,413.2 Z" fill="#000"/><rect x="36.9" y="383.8" width="33.2" height="33.4" fill="url(#tbg)" stroke="#999999" stroke-width="1.3"/><rect x="1.9" y="418.8" width="33.2" height="33.4" fill="url(#tbg)" stroke="#999999" stroke-width="1.3"/><rect x="36.9" y="418.8" width="33.2" height="33.4" fill="url(#tbg)" stroke="#999999" stroke-width="1.3"/><path d="M66.3,443.2 L66.3,448.2 L61.1,448.2 Z" fill="#000"/><path d="M5,393.6 L5,412.4 L24.4,412.4 Z" fill="#f8f8f8" stroke="#111" stroke-width="1.2" stroke-linejoin="miter"/><path d="M9.2,403.2 L9.2,408.4 L14.8,408.4 Z" fill="none" stroke="#111" stroke-width="1"/><g transform="translate(20.6,398.6) rotate(-136.5)"><path d="M0,0 L3.6,-1.9 L13.6,-1.9 Q15,-1.9 15,0 Q15,1.9 13.6,1.9 L3.6,1.9 Z" fill="#e0200e" stroke="#6a2a10" stroke-width="0.5"/><path d="M0,0 L3.6,-1.9 L3.6,1.9 Z" fill="#e9c48c" stroke="#6a4a20" stroke-width="0.4"/><path d="M0,0 L1.3,-0.7 L1.3,0.7Z" fill="#222"/><rect x="11" y="-1.9" width="1.6" height="3.8" fill="#ddd"/></g><path d="M26.3,386.8 L26.3,389.4 M26.3,391 L23.4,405 M26.3,391 L29.2,405" stroke="#222" stroke-width="1.1" fill="none"/><circle cx="26.3" cy="390.4" r="1.3" fill="#555" stroke="#222" stroke-width="0.5"/><rect x="41.4" y="396.2" width="23.6" height="7.2" rx="0.8" fill="#fdfdfd" stroke="#8f8f8f" stroke-width="0.9"/><line x1="43.4" y1="396.8" x2="43.4" y2="398.8" stroke="#8a8a8a" stroke-width="0.6"/><line x1="45.36" y1="396.8" x2="45.36" y2="398.2" stroke="#8a8a8a" stroke-width="0.6"/><line x1="47.32" y1="396.8" x2="47.32" y2="398.2" stroke="#8a8a8a" stroke-width="0.6"/><line x1="49.28" y1="396.8" x2="49.28" y2="398.2" stroke="#8a8a8a" stroke-width="0.6"/><line x1="51.24" y1="396.8" x2="51.24" y2="398.2" stroke="#8a8a8a" stroke-width="0.6"/><line x1="53.2" y1="396.8" x2="53.2" y2="399.4" stroke="#8a8a8a" stroke-width="0.6"/><line x1="55.16" y1="396.8" x2="55.16" y2="398.2" stroke="#8a8a8a" stroke-width="0.6"/><line x1="57.12" y1="396.8" x2="57.12" y2="398.2" stroke="#8a8a8a" stroke-width="0.6"/><line x1="59.08" y1="396.8" x2="59.08" y2="398.2" stroke="#8a8a8a" stroke-width="0.6"/><line x1="61.04" y1="396.8" x2="61.04" y2="398.2" stroke="#8a8a8a" stroke-width="0.6"/><line x1="63" y1="396.8" x2="63" y2="398.8" stroke="#8a8a8a" stroke-width="0.6"/><line x1="41.6" y1="404.1" x2="64.8" y2="404.1" stroke="#bdbdbd" stroke-width="0.8"/><rect x="7.4" y="425.5" width="17.4" height="12.5" fill="#efebd6" stroke="#b0b0a8" stroke-width="1"/><circle cx="22" cy="437.2" r="6.8" fill="#efebd6" fill-opacity="0.9" stroke="#b0b0a8" stroke-width="1"/><path d="M15.4,438 H24.8 V430.6" fill="none" stroke="#b0b0a8" stroke-width="1"/><circle cx="7.8" cy="438" r="1.3" fill="#f4a0a8"/><line x1="41.5" y1="433.8" x2="59" y2="423.8" stroke="#f22" stroke-width="1.1"/><path transform="translate(51.5,429.6) rotate(-8) scale(0.66)" d="M0,0 L0,17 L4,13.2 L6.8,20 L9.4,19 L6.6,12.3 L11.4,11.5 Z" fill="#f4f4f4" stroke="#8a8a8a" stroke-width="1.5"/><rect x="1.9" y="461.6" width="33.2" height="33.4" fill="url(#tbg)" stroke="#999999" stroke-width="1.3"/><path d="M31.3,486 L31.3,491 L26.1,491 Z" fill="#000"/><path d="M20,467 L28.4,472.4 L28.4,482 L16,488.8 L7.4,484 L7.4,474.6 Z M7.4,474.6 L16,479 L28.4,472.4 M16,479 L16,488.8" fill="none" stroke="#222" stroke-width="1.2" stroke-linejoin="round"/></svg>
<span class="t" style="left:7.35px;top:306.83px;font-size:29.5px;line-height:29.5px;color:#111;font-family:'Liberation Serif',serif;">A</span>
<div class="b " style="left:72px;top:108.5px;width:1083.5px;height:23.2px;background:#d5d5d5;"></div>
<span class="t" style="left:606.70px;top:114.34px;font-size:12px;line-height:12px;color:#262626;letter-spacing:-0.009px;">* park.dxf</span>
<div class="b " style="left:72px;top:131.7px;width:1066px;height:23.3px;background:#ebebeb;"></div>
<div class="b " style="left:72px;top:155px;width:23px;height:577px;background:#ebebeb;"></div>
<div class="b " style="left:95px;top:155px;width:1043px;height:577px;background:#000;"></div>
<div class="b " style="left:1138px;top:131.7px;width:15px;height:600.1px;background:#fafafa;"></div>
<div class="b " style="left:1138px;top:131.7px;width:15.5px;height:23.3px;background:#ebebeb;"></div>
<div class="b " style="left:95px;top:731.8px;width:1004.5px;height:15.9px;background:#fafafa;"></div>
<div class="b " style="left:72px;top:731.8px;width:23px;height:15.9px;background:#f0f0f0;"></div>
<div class="b " style="left:1099.5px;top:731.8px;width:54px;height:15.9px;background:#ebebeb;"></div>
<div class="b " style="left:1143.2px;top:303.6px;width:7.6px;height:279px;background:#7f7f7f;border-radius:4px;"></div>
<div class="b " style="left:168.6px;top:737px;width:857px;height:7.7px;background:#7f7f7f;border-radius:4px;"></div>
<span class="t" style="left:1119.30px;top:734.30px;font-size:12.4px;line-height:12.4px;color:#1e1e1e;letter-spacing:-0.132px;">1 &lt; 10</span>
<div class="b " style="left:1153.3px;top:108.5px;width:2.6px;height:690px;background:linear-gradient(90deg,#e4e4e4,#cfcfcf 60%,#dadada);"></div>
<div class="b " style="left:72px;top:747.6px;width:1081.6px;height:2px;background:#c4c4c4;"></div>
<div class="b " style="left:72px;top:749.4px;width:1081.6px;height:20.8px;background:#fff;border-bottom:1px solid #bdbdbd;border-left:1px solid #d0d0d0;"></div>
<span class="t" style="left:77.00px;top:751.60px;font-size:13px;line-height:13px;color:#0000d2;letter-spacing:-0.023px;font-style:italic;">Commande:</span>
<span class="t" style="left:152.40px;top:751.60px;font-size:13px;line-height:13px;color:#0000d2;letter-spacing:0.388px;">blockedit</span>
<div class="b " style="left:72px;top:770.2px;width:1081.6px;height:28.6px;background:#ebebeb;"></div>
<div class="b " style="left:153px;top:776px;width:974px;height:17.7px;background:#fff;"></div>
<span class="t" style="left:73.00px;top:778.63px;font-size:13.9px;line-height:13.9px;color:#111;letter-spacing:-0.412px;">Commande :</span>
<div class="b " style="left:1127.4px;top:772.4px;width:25.2px;height:25px;background:linear-gradient(#e9e9e9,#f6f6f6);border:1px solid #a9a9a9;"></div>
<div class="b " style="left:1133.3px;top:780.2px;width:13.8px;height:9.4px;background:#f0f0f0;border:1px solid #555;border-top:2.6px solid #000;"></div>
<svg class="b" style="left:0px;top:0px;" width="1160" height="800" viewBox="0 0 1160 800"><line x1="95.5" y1="148" x2="95.5" y2="155" stroke="#505050" stroke-width="1"/><line x1="108.5" y1="152" x2="108.5" y2="155" stroke="#505050" stroke-width="1"/><line x1="120.5" y1="148" x2="120.5" y2="155" stroke="#505050" stroke-width="1"/><line x1="132.5" y1="152" x2="132.5" y2="155" stroke="#505050" stroke-width="1"/><line x1="145.5" y1="148" x2="145.5" y2="155" stroke="#505050" stroke-width="1"/><line x1="157.5" y1="152" x2="157.5" y2="155" stroke="#505050" stroke-width="1"/><line x1="169.5" y1="148" x2="169.5" y2="155" stroke="#505050" stroke-width="1"/><line x1="181.5" y1="152" x2="181.5" y2="155" stroke="#505050" stroke-width="1"/><line x1="194.5" y1="148" x2="194.5" y2="155" stroke="#505050" stroke-width="1"/><line x1="206.5" y1="152" x2="206.5" y2="155" stroke="#505050" stroke-width="1"/><line x1="218.5" y1="148" x2="218.5" y2="155" stroke="#505050" stroke-width="1"/><line x1="230.5" y1="152" x2="230.5" y2="155" stroke="#505050" stroke-width="1"/><line x1="243.5" y1="148" x2="243.5" y2="155" stroke="#505050" stroke-width="1"/><line x1="255.5" y1="152" x2="255.5" y2="155" stroke="#505050" stroke-width="1"/><line x1="267.5" y1="148" x2="267.5" y2="155" stroke="#505050" stroke-width="1"/><line x1="279.5" y1="152" x2="279.5" y2="155" stroke="#505050" stroke-width="1"/><line x1="292.5" y1="148" x2="292.5" y2="155" stroke="#505050" stroke-width="1"/><line x1="304.5" y1="152" x2="304.5" y2="155" stroke="#505050" stroke-width="1"/><line x1="316.5" y1="148" x2="316.5" y2="155" stroke="#505050" stroke-width="1"/><line x1="329.5" y1="152" x2="329.5" y2="155" stroke="#505050" stroke-width="1"/><line x1="341.5" y1="148" x2="341.5" y2="155" stroke="#505050" stroke-width="1"/><line x1="353.5" y1="152" x2="353.5" y2="155" stroke="#505050" stroke-width="1"/><line x1="365.5" y1="148" x2="365.5" y2="155" stroke="#505050" stroke-width="1"/><line x1="378.5" y1="152" x2="378.5" y2="155" stroke="#505050" stroke-width="1"/><line x1="390.5" y1="148" x2="390.5" y2="155" stroke="#505050" stroke-width="1"/><line x1="402.5" y1="152" x2="402.5" y2="155" stroke="#505050" stroke-width="1"/><line x1="414.5" y1="148" x2="414.5" y2="155" stroke="#505050" stroke-width="1"/><line x1="427.5" y1="152" x2="427.5" y2="155" stroke="#505050" stroke-width="1"/><line x1="439.5" y1="148" x2="439.5" y2="155" stroke="#505050" stroke-width="1"/><line x1="451.5" y1="152" x2="451.5" y2="155" stroke="#505050" stroke-width="1"/><line x1="463.5" y1="148" x2="463.5" y2="155" stroke="#505050" stroke-width="1"/><line x1="476.5" y1="152" x2="476.5" y2="155" stroke="#505050" stroke-width="1"/><line x1="488.5" y1="148" x2="488.5" y2="155" stroke="#505050" stroke-width="1"/><line x1="500.5" y1="152" x2="500.5" y2="155" stroke="#505050" stroke-width="1"/><line x1="512.5" y1="148" x2="512.5" y2="155" stroke="#505050" stroke-width="1"/><line x1="525.5" y1="152" x2="525.5" y2="155" stroke="#505050" stroke-width="1"/><line x1="537.5" y1="148" x2="537.5" y2="155" stroke="#505050" stroke-width="1"/><line x1="549.5" y1="152" x2="549.5" y2="155" stroke="#505050" stroke-width="1"/><line x1="562.5" y1="148" x2="562.5" y2="155" stroke="#505050" stroke-width="1"/><line x1="574.5" y1="152" x2="574.5" y2="155" stroke="#505050" stroke-width="1"/><line x1="586.5" y1="148" x2="586.5" y2="155" stroke="#505050" stroke-width="1"/><line x1="598.5" y1="152" x2="598.5" y2="155" stroke="#505050" stroke-width="1"/><line x1="611.5" y1="148" x2="611.5" y2="155" stroke="#505050" stroke-width="1"/><line x1="623.5" y1="152" x2="623.5" y2="155" stroke="#505050" stroke-width="1"/><line x1="635.5" y1="148" x2="635.5" y2="155" stroke="#505050" stroke-width="1"/><line x1="647.5" y1="152" x2="647.5" y2="155" stroke="#505050" stroke-width="1"/><line x1="660.5" y1="148" x2="660.5" y2="155" stroke="#505050" stroke-width="1"/><line x1="672.5" y1="152" x2="672.5" y2="155" stroke="#505050" stroke-width="1"/><line x1="684.5" y1="148" x2="684.5" y2="155" stroke="#505050" stroke-width="1"/><line x1="696.5" y1="152" x2="696.5" y2="155" stroke="#505050" stroke-width="1"/><line x1="709.5" y1="148" x2="709.5" y2="155" stroke="#505050" stroke-width="1"/><line x1="721.5" y1="152" x2="721.5" y2="155" stroke="#505050" stroke-width="1"/><line x1="733.5" y1="148" x2="733.5" y2="155" stroke="#505050" stroke-width="1"/><line x1="746.5" y1="152" x2="746.5" y2="155" stroke="#505050" stroke-width="1"/><line x1="758.5" y1="148" x2="758.5" y2="155" stroke="#505050" stroke-width="1"/><line x1="770.5" y1="152" x2="770.5" y2="155" stroke="#505050" stroke-width="1"/><line x1="782.5" y1="148" x2="782.5" y2="155" stroke="#505050" stroke-width="1"/><line x1="795.5" y1="152" x2="795.5" y2="155" stroke="#505050" stroke-width="1"/><line x1="807.5" y1="148" x2="807.5" y2="155" stroke="#505050" stroke-width="1"/><line x1="819.5" y1="152" x2="819.5" y2="155" stroke="#505050" stroke-width="1"/><line x1="831.5" y1="148" x2="831.5" y2="155" stroke="#505050" stroke-width="1"/><line x1="844.5" y1="152" x2="844.5" y2="155" stroke="#505050" stroke-width="1"/><line x1="856.5" y1="148" x2="856.5" y2="155" stroke="#505050" stroke-width="1"/><line x1="868.5" y1="152" x2="868.5" y2="155" stroke="#505050" stroke-width="1"/><line x1="880.5" y1="148" x2="880.5" y2="155" stroke="#505050" stroke-width="1"/><line x1="893.5" y1="152" x2="893.5" y2="155" stroke="#505050" stroke-width="1"/><line x1="905.5" y1="148" x2="905.5" y2="155" stroke="#505050" stroke-width="1"/><line x1="917.5" y1="152" x2="917.5" y2="155" stroke="#505050" stroke-width="1"/><line x1="929.5" y1="148" x2="929.5" y2="155" stroke="#505050" stroke-width="1"/><line x1="942.5" y1="152" x2="942.5" y2="155" stroke="#505050" stroke-width="1"/><line x1="954.5" y1="148" x2="954.5" y2="155" stroke="#505050" stroke-width="1"/><line x1="966.5" y1="152" x2="966.5" y2="155" stroke="#505050" stroke-width="1"/><line x1="979.5" y1="148" x2="979.5" y2="155" stroke="#505050" stroke-width="1"/><line x1="991.5" y1="152" x2="991.5" y2="155" stroke="#505050" stroke-width="1"/><line x1="1003.5" y1="148" x2="1003.5" y2="155" stroke="#505050" stroke-width="1"/><line x1="1015.5" y1="152" x2="1015.5" y2="155" stroke="#505050" stroke-width="1"/><line x1="1028.5" y1="148" x2="1028.5" y2="155" stroke="#505050" stroke-width="1"/><line x1="1040.5" y1="152" x2="1040.5" y2="155" stroke="#505050" stroke-width="1"/><line x1="1052.5" y1="148" x2="1052.5" y2="155" stroke="#505050" stroke-width="1"/><line x1="1064.5" y1="152" x2="1064.5" y2="155" stroke="#505050" stroke-width="1"/><line x1="1077.5" y1="148" x2="1077.5" y2="155" stroke="#505050" stroke-width="1"/><line x1="1089.5" y1="152" x2="1089.5" y2="155" stroke="#505050" stroke-width="1"/><line x1="1101.5" y1="148" x2="1101.5" y2="155" stroke="#505050" stroke-width="1"/><line x1="1113.5" y1="152" x2="1113.5" y2="155" stroke="#505050" stroke-width="1"/><line x1="1126.5" y1="148" x2="1126.5" y2="155" stroke="#505050" stroke-width="1"/><line x1="92" y1="722.5" x2="95" y2="722.5" stroke="#505050" stroke-width="1"/><line x1="88" y1="710.5" x2="95" y2="710.5" stroke="#505050" stroke-width="1"/><line x1="92" y1="698.5" x2="95" y2="698.5" stroke="#505050" stroke-width="1"/><line x1="88" y1="686.5" x2="95" y2="686.5" stroke="#505050" stroke-width="1"/><line x1="92" y1="673.5" x2="95" y2="673.5" stroke="#505050" stroke-width="1"/><line x1="88" y1="661.5" x2="95" y2="661.5" stroke="#505050" stroke-width="1"/><line x1="92" y1="649.5" x2="95" y2="649.5" stroke="#505050" stroke-width="1"/><line x1="88" y1="637.5" x2="95" y2="637.5" stroke="#505050" stroke-width="1"/><line x1="92" y1="624.5" x2="95" y2="624.5" stroke="#505050" stroke-width="1"/><line x1="88" y1="612.5" x2="95" y2="612.5" stroke="#505050" stroke-width="1"/><line x1="92" y1="600.5" x2="95" y2="600.5" stroke="#505050" stroke-width="1"/><line x1="88" y1="587.5" x2="95" y2="587.5" stroke="#505050" stroke-width="1"/><line x1="92" y1="575.5" x2="95" y2="575.5" stroke="#505050" stroke-width="1"/><line x1="88" y1="563.5" x2="95" y2="563.5" stroke="#505050" stroke-width="1"/><line x1="92" y1="551.5" x2="95" y2="551.5" stroke="#505050" stroke-width="1"/><line x1="88" y1="538.5" x2="95" y2="538.5" stroke="#505050" stroke-width="1"/><line x1="92" y1="526.5" x2="95" y2="526.5" stroke="#505050" stroke-width="1"/><line x1="88" y1="514.5" x2="95" y2="514.5" stroke="#505050" stroke-width="1"/><line x1="92" y1="502.5" x2="95" y2="502.5" stroke="#505050" stroke-width="1"/><line x1="88" y1="489.5" x2="95" y2="489.5" stroke="#505050" stroke-width="1"/><line x1="92" y1="477.5" x2="95" y2="477.5" stroke="#505050" stroke-width="1"/><line x1="88" y1="465.5" x2="95" y2="465.5" stroke="#505050" stroke-width="1"/><line x1="92" y1="453.5" x2="95" y2="453.5" stroke="#505050" stroke-width="1"/><line x1="88" y1="440.5" x2="95" y2="440.5" stroke="#505050" stroke-width="1"/><line x1="92" y1="428.5" x2="95" y2="428.5" stroke="#505050" stroke-width="1"/><line x1="88" y1="416.5" x2="95" y2="416.5" stroke="#505050" stroke-width="1"/><line x1="92" y1="403.5" x2="95" y2="403.5" stroke="#505050" stroke-width="1"/><line x1="88" y1="391.5" x2="95" y2="391.5" stroke="#505050" stroke-width="1"/><line x1="92" y1="379.5" x2="95" y2="379.5" stroke="#505050" stroke-width="1"/><line x1="88" y1="367.5" x2="95" y2="367.5" stroke="#505050" stroke-width="1"/><line x1="92" y1="354.5" x2="95" y2="354.5" stroke="#505050" stroke-width="1"/><line x1="88" y1="342.5" x2="95" y2="342.5" stroke="#505050" stroke-width="1"/><line x1="92" y1="330.5" x2="95" y2="330.5" stroke="#505050" stroke-width="1"/><line x1="88" y1="318.5" x2="95" y2="318.5" stroke="#505050" stroke-width="1"/><line x1="92" y1="305.5" x2="95" y2="305.5" stroke="#505050" stroke-width="1"/><line x1="88" y1="293.5" x2="95" y2="293.5" stroke="#505050" stroke-width="1"/><line x1="92" y1="281.5" x2="95" y2="281.5" stroke="#505050" stroke-width="1"/><line x1="88" y1="269.5" x2="95" y2="269.5" stroke="#505050" stroke-width="1"/><line x1="92" y1="256.5" x2="95" y2="256.5" stroke="#505050" stroke-width="1"/><line x1="88" y1="244.5" x2="95" y2="244.5" stroke="#505050" stroke-width="1"/><line x1="92" y1="232.5" x2="95" y2="232.5" stroke="#505050" stroke-width="1"/><line x1="88" y1="220.5" x2="95" y2="220.5" stroke="#505050" stroke-width="1"/><line x1="92" y1="207.5" x2="95" y2="207.5" stroke="#505050" stroke-width="1"/><line x1="88" y1="195.5" x2="95" y2="195.5" stroke="#505050" stroke-width="1"/><line x1="92" y1="183.5" x2="95" y2="183.5" stroke="#505050" stroke-width="1"/><line x1="88" y1="170.5" x2="95" y2="170.5" stroke="#505050" stroke-width="1"/><line x1="92" y1="158.5" x2="95" y2="158.5" stroke="#505050" stroke-width="1"/><path d="M1011,145 L1023,145 L1017,151.2 Z" fill="#000"/><path d="M85,376.4 L85,387.8 L91.2,382.1 Z" fill="#000"/></svg>
<div class="b " style="left:95px;top:131.7px;width:1043px;height:23.3px;overflow:hidden;"><span class="t" style="left:-7.80px;top:1.17px;font-size:9.6px;line-height:9.6px;color:#1c1c1c;letter-spacing:-0.089px;">-28</span><span class="t" style="left:17.20px;top:1.17px;font-size:9.6px;line-height:9.6px;color:#1c1c1c;letter-spacing:-0.089px;">-26</span><span class="t" style="left:42.20px;top:1.17px;font-size:9.6px;line-height:9.6px;color:#1c1c1c;letter-spacing:-0.089px;">-24</span><span class="t" style="left:66.20px;top:1.17px;font-size:9.6px;line-height:9.6px;color:#1c1c1c;letter-spacing:-0.089px;">-22</span><span class="t" style="left:91.20px;top:1.17px;font-size:9.6px;line-height:9.6px;color:#1c1c1c;letter-spacing:-0.089px;">-20</span><span class="t" style="left:115.80px;top:1.17px;font-size:9.6px;line-height:9.6px;color:#1c1c1c;letter-spacing:-0.489px;">-18</span><span class="t" style="left:140.80px;top:1.17px;font-size:9.6px;line-height:9.6px;color:#1c1c1c;letter-spacing:-0.489px;">-16</span><span class="t" style="left:164.80px;top:1.17px;font-size:9.6px;line-height:9.6px;color:#1c1c1c;letter-spacing:-0.489px;">-14</span><span class="t" style="left:189.80px;top:1.17px;font-size:9.6px;line-height:9.6px;color:#1c1c1c;letter-spacing:-0.489px;">-12</span><span class="t" style="left:213.80px;top:1.17px;font-size:9.6px;line-height:9.6px;color:#1c1c1c;letter-spacing:-0.489px;">-10</span><span class="t" style="left:240.70px;top:1.17px;font-size:9.6px;line-height:9.6px;color:#1c1c1c;letter-spacing:0.035px;">-8</span><span class="t" style="left:264.70px;top:1.17px;font-size:9.6px;line-height:9.6px;color:#1c1c1c;letter-spacing:0.035px;">-6</span><span class="t" style="left:289.70px;top:1.17px;font-size:9.6px;line-height:9.6px;color:#1c1c1c;letter-spacing:0.035px;">-4</span><span class="t" style="left:313.70px;top:1.17px;font-size:9.6px;line-height:9.6px;color:#1c1c1c;letter-spacing:0.035px;">-2</span><span class="t" style="left:341.13px;top:1.17px;font-size:9.6px;line-height:9.6px;color:#1c1c1c;">0</span><span class="t" style="left:365.13px;top:1.17px;font-size:9.6px;line-height:9.6px;color:#1c1c1c;">2</span><span class="t" style="left:390.13px;top:1.17px;font-size:9.6px;line-height:9.6px;color:#1c1c1c;">4</span><span class="t" style="left:414.13px;top:1.17px;font-size:9.6px;line-height:9.6px;color:#1c1c1c;">6</span><span class="t" style="left:439.13px;top:1.17px;font-size:9.6px;line-height:9.6px;color:#1c1c1c;">8</span><span class="t" style="left:462.40px;top:1.17px;font-size:9.6px;line-height:9.6px;color:#1c1c1c;letter-spacing:-0.936px;">10</span><span class="t" style="left:486.40px;top:1.17px;font-size:9.6px;line-height:9.6px;color:#1c1c1c;letter-spacing:-0.936px;">12</span><span class="t" style="left:511.40px;top:1.17px;font-size:9.6px;line-height:9.6px;color:#1c1c1c;letter-spacing:-0.936px;">14</span><span class="t" style="left:535.40px;top:1.17px;font-size:9.6px;line-height:9.6px;color:#1c1c1c;letter-spacing:-0.936px;">16</span><span class="t" style="left:560.40px;top:1.17px;font-size:9.6px;line-height:9.6px;color:#1c1c1c;letter-spacing:-0.936px;">18</span><span class="t" style="left:583.80px;top:1.17px;font-size:9.6px;line-height:9.6px;color:#1c1c1c;letter-spacing:-0.336px;">20</span><span class="t" style="left:608.80px;top:1.17px;font-size:9.6px;line-height:9.6px;color:#1c1c1c;letter-spacing:-0.336px;">22</span><span class="t" style="left:632.80px;top:1.17px;font-size:9.6px;line-height:9.6px;color:#1c1c1c;letter-spacing:-0.336px;">24</span><span class="t" style="left:657.80px;top:1.17px;font-size:9.6px;line-height:9.6px;color:#1c1c1c;letter-spacing:-0.336px;">26</span><span class="t" style="left:681.80px;top:1.17px;font-size:9.6px;line-height:9.6px;color:#1c1c1c;letter-spacing:-0.336px;">28</span><span class="t" style="left:706.80px;top:1.17px;font-size:9.6px;line-height:9.6px;color:#1c1c1c;letter-spacing:-0.336px;">30</span><span class="t" style="left:730.80px;top:1.17px;font-size:9.6px;line-height:9.6px;color:#1c1c1c;letter-spacing:-0.336px;">32</span><span class="t" style="left:755.80px;top:1.17px;font-size:9.6px;line-height:9.6px;color:#1c1c1c;letter-spacing:-0.336px;">34</span><span class="t" style="left:779.80px;top:1.17px;font-size:9.6px;line-height:9.6px;color:#1c1c1c;letter-spacing:-0.336px;">36</span><span class="t" style="left:804.80px;top:1.17px;font-size:9.6px;line-height:9.6px;color:#1c1c1c;letter-spacing:-0.336px;">38</span><span class="t" style="left:828.80px;top:1.17px;font-size:9.6px;line-height:9.6px;color:#1c1c1c;letter-spacing:-0.336px;">40</span><span class="t" style="left:853.80px;top:1.17px;font-size:9.6px;line-height:9.6px;color:#1c1c1c;letter-spacing:-0.336px;">42</span><span class="t" style="left:878.80px;top:1.17px;font-size:9.6px;line-height:9.6px;color:#1c1c1c;letter-spacing:-0.336px;">44</span><span class="t" style="left:902.80px;top:1.17px;font-size:9.6px;line-height:9.6px;color:#1c1c1c;letter-spacing:-0.336px;">46</span><span class="t" style="left:927.80px;top:1.17px;font-size:9.6px;line-height:9.6px;color:#1c1c1c;letter-spacing:-0.336px;">48</span><span class="t" style="left:951.80px;top:1.17px;font-size:9.6px;line-height:9.6px;color:#1c1c1c;letter-spacing:-0.336px;">50</span><span class="t" style="left:976.80px;top:1.17px;font-size:9.6px;line-height:9.6px;color:#1c1c1c;letter-spacing:-0.336px;">52</span><span class="t" style="left:1000.80px;top:1.17px;font-size:9.6px;line-height:9.6px;color:#1c1c1c;letter-spacing:-0.336px;">54</span><span class="t" style="left:1025.80px;top:1.17px;font-size:9.6px;line-height:9.6px;color:#1c1c1c;letter-spacing:-0.336px;">56</span></div>
<div class="b " style="left:72px;top:155px;width:23px;height:576.8px;overflow:hidden;"><div class="b" style="left:9.4px;top:581.3px;width:0;height:0;transform:rotate(-90deg);"><span class="t" style="left:-6.20px;top:-8.13px;font-size:9.6px;line-height:9.6px;color:#1c1c1c;letter-spacing:-0.489px;">-16</span></div><div class="b" style="left:9.4px;top:556.3px;width:0;height:0;transform:rotate(-90deg);"><span class="t" style="left:-6.20px;top:-8.13px;font-size:9.6px;line-height:9.6px;color:#1c1c1c;letter-spacing:-0.489px;">-14</span></div><div class="b" style="left:9.4px;top:532.3px;width:0;height:0;transform:rotate(-90deg);"><span class="t" style="left:-6.20px;top:-8.13px;font-size:9.6px;line-height:9.6px;color:#1c1c1c;letter-spacing:-0.489px;">-12</span></div><div class="b" style="left:9.4px;top:507.3px;width:0;height:0;transform:rotate(-90deg);"><span class="t" style="left:-6.20px;top:-8.13px;font-size:9.6px;line-height:9.6px;color:#1c1c1c;letter-spacing:-0.489px;">-10</span></div><div class="b" style="left:9.4px;top:483.3px;width:0;height:0;transform:rotate(-90deg);"><span class="t" style="left:-4.30px;top:-8.13px;font-size:9.6px;line-height:9.6px;color:#1c1c1c;letter-spacing:0.035px;">-8</span></div><div class="b" style="left:9.4px;top:458.3px;width:0;height:0;transform:rotate(-90deg);"><span class="t" style="left:-4.30px;top:-8.13px;font-size:9.6px;line-height:9.6px;color:#1c1c1c;letter-spacing:0.035px;">-6</span></div><div class="b" style="left:9.4px;top:433.3px;width:0;height:0;transform:rotate(-90deg);"><span class="t" style="left:-4.30px;top:-8.13px;font-size:9.6px;line-height:9.6px;color:#1c1c1c;letter-spacing:0.035px;">-4</span></div><div class="b" style="left:9.4px;top:409.3px;width:0;height:0;transform:rotate(-90deg);"><span class="t" style="left:-4.30px;top:-8.13px;font-size:9.6px;line-height:9.6px;color:#1c1c1c;letter-spacing:0.035px;">-2</span></div><div class="b" style="left:9.4px;top:383.5px;width:0;height:0;transform:rotate(-90deg);"><span class="t" style="left:-2.67px;top:-8.13px;font-size:9.6px;line-height:9.6px;color:#1c1c1c;">0</span></div><div class="b" style="left:9.4px;top:359.5px;width:0;height:0;transform:rotate(-90deg);"><span class="t" style="left:-2.67px;top:-8.13px;font-size:9.6px;line-height:9.6px;color:#1c1c1c;">2</span></div><div class="b" style="left:9.4px;top:334.5px;width:0;height:0;transform:rotate(-90deg);"><span class="t" style="left:-2.67px;top:-8.13px;font-size:9.6px;line-height:9.6px;color:#1c1c1c;">4</span></div><div class="b" style="left:9.4px;top:310.5px;width:0;height:0;transform:rotate(-90deg);"><span class="t" style="left:-2.67px;top:-8.13px;font-size:9.6px;line-height:9.6px;color:#1c1c1c;">6</span></div><div class="b" style="left:9.4px;top:285.5px;width:0;height:0;transform:rotate(-90deg);"><span class="t" style="left:-2.67px;top:-8.13px;font-size:9.6px;line-height:9.6px;color:#1c1c1c;">8</span></div><div class="b" style="left:9.4px;top:261.5px;width:0;height:0;transform:rotate(-90deg);"><span class="t" style="left:-4.40px;top:-8.13px;font-size:9.6px;line-height:9.6px;color:#1c1c1c;letter-spacing:-0.936px;">10</span></div><div class="b" style="left:9.4px;top:236.5px;width:0;height:0;transform:rotate(-90deg);"><span class="t" style="left:-4.40px;top:-8.13px;font-size:9.6px;line-height:9.6px;color:#1c1c1c;letter-spacing:-0.936px;">12</span></div><div class="b" style="left:9.4px;top:212.5px;width:0;height:0;transform:rotate(-90deg);"><span class="t" style="left:-4.40px;top:-8.13px;font-size:9.6px;line-height:9.6px;color:#1c1c1c;letter-spacing:-0.936px;">14</span></div><div class="b" style="left:9.4px;top:187.5px;width:0;height:0;transform:rotate(-90deg);"><span class="t" style="left:-4.40px;top:-8.13px;font-size:9.6px;line-height:9.6px;color:#1c1c1c;letter-spacing:-0.936px;">16</span></div><div class="b" style="left:9.4px;top:163.5px;width:0;height:0;transform:rotate(-90deg);"><span class="t" style="left:-4.40px;top:-8.13px;font-size:9.6px;line-height:9.6px;color:#1c1c1c;letter-spacing:-0.936px;">18</span></div><div class="b" style="left:9.4px;top:138.5px;width:0;height:0;transform:rotate(-90deg);"><span class="t" style="left:-5.00px;top:-8.13px;font-size:9.6px;line-height:9.6px;color:#1c1c1c;letter-spacing:-0.336px;">20</span></div><div class="b" style="left:9.4px;top:114.5px;width:0;height:0;transform:rotate(-90deg);"><span class="t" style="left:-5.00px;top:-8.13px;font-size:9.6px;line-height:9.6px;color:#1c1c1c;letter-spacing:-0.336px;">22</span></div><div class="b" style="left:9.4px;top:89.5px;width:0;height:0;transform:rotate(-90deg);"><span class="t" style="left:-5.00px;top:-8.13px;font-size:9.6px;line-height:9.6px;color:#1c1c1c;letter-spacing:-0.336px;">24</span></div><div class="b" style="left:9.4px;top:65.5px;width:0;height:0;transform:rotate(-90deg);"><span class="t" style="left:-5.00px;top:-8.13px;font-size:9.6px;line-height:9.6px;color:#1c1c1c;letter-spacing:-0.336px;">26</span></div><div class="b" style="left:9.4px;top:40.5px;width:0;height:0;transform:rotate(-90deg);"><span class="t" style="left:-5.00px;top:-8.13px;font-size:9.6px;line-height:9.6px;color:#1c1c1c;letter-spacing:-0.336px;">28</span></div><div class="b" style="left:9.4px;top:15.5px;width:0;height:0;transform:rotate(-90deg);"><span class="t" style="left:-5.00px;top:-8.13px;font-size:9.6px;line-height:9.6px;color:#1c1c1c;letter-spacing:-0.336px;">30</span></div><div class="b" style="left:9.4px;top:-8.5px;width:0;height:0;transform:rotate(-90deg);"><span class="t" style="left:-5.00px;top:-8.13px;font-size:9.6px;line-height:9.6px;color:#1c1c1c;letter-spacing:-0.336px;">32</span></div></div>
<svg class="b" style="left:0px;top:0px;" width="200" height="140" viewBox="0 0 200 140"><defs><linearGradient id="qring" x1="0" y1="0" x2="1" y2="1"><stop offset="0" stop-color="#8a9bd0"/><stop offset="0.45" stop-color="#2a4494"/><stop offset="1" stop-color="#1c327e"/></linearGradient></defs><circle cx="102.05" cy="118.7" r="5.45" fill="#f6f6f8" stroke="url(#qring)" stroke-width="2"/><path d="M99.2,118.6 h5.6 M101.6,116 v5.4" stroke="#b0b0b8" stroke-width="0.6"/><path d="M99.4,120.6 h3.2 M103,116.4 l1,-0.8" stroke="#e88a8a" stroke-width="0.6"/><path d="M102.6,119.2 L106.6,123.4" stroke="#f5a30a" stroke-width="2.1"/><path d="M102.9,118.9 L106.4,122.6" stroke="#ffd86a" stroke-width="0.7"/><circle cx="107.2" cy="124.1" r="1.25" fill="#e86a6a"/></svg>
<svg class="b" style="left:0px;top:0px;" width="1160" height="740" viewBox="0 0 1160 740"><defs><pattern id="benchp" width="1.7" height="4" patternUnits="userSpaceOnUse"><rect width="1.7" height="4" fill="#6c6c6c"/><rect x="0" width="0.7" height="4" fill="#a4a4a4"/></pattern><clipPath id="cvclip"><rect x="95" y="155" width="1043" height="577"/></clipPath></defs><g clip-path="url(#cvclip)" shape-rendering="auto"><defs><path id="gr" d="M96,0.5h1m11,0h1m11,0h1m12,0h1m11,0h1m11,0h1m11,0h1m12,0h1m11,0h1m11,0h1m11,0h1m12,0h1m11,0h1m11,0h1m11,0h1m12,0h1m11,0h1m11,0h1m11,0h1m12,0h1m11,0h1m11,0h1m12,0h1m11,0h1m11,0h1m11,0h1m12,0h1m11,0h1m11,0h1m11,0h1m12,0h1m11,0h1m11,0h1m11,0h1m12,0h1m11,0h1m11,0h1m12,0h1m11,0h1m11,0h1m11,0h1m12,0h1m11,0h1m11,0h1m11,0h1m12,0h1m11,0h1m11,0h1m11,0h1m12,0h1m11,0h1m11,0h1m12,0h1m11,0h1m11,0h1m11,0h1m12,0h1m11,0h1m11,0h1m11,0h1m12,0h1m11,0h1m11,0h1m11,0h1m12,0h1m11,0h1m11,0h1m11,0h1m12,0h1m11,0h1m11,0h1m12,0h1m11,0h1m11,0h1m11,0h1m12,0h1m11,0h1m11,0h1m11,0h1m12,0h1m11,0h1m11,0h1m11,0h1m12,0h1m11,0h1" stroke="#444444" stroke-width="1" fill="none" shape-rendering="crispEdges"/></defs><rect x="193.5" y="155" width="1" height="577" fill="#222222"/><rect x="316.0" y="155" width="1" height="577" fill="#222222"/><rect x="439.0" y="155" width="1" height="577" fill="#222222"/><rect x="561.5" y="155" width="1" height="577" fill="#222222"/><rect x="684.0" y="155" width="1" height="577" fill="#222222"/><rect x="807.0" y="155" width="1" height="577" fill="#222222"/><rect x="929.5" y="155" width="1" height="577" fill="#222222"/><rect x="1052.0" y="155" width="1" height="577" fill="#222222"/><line x1="95" y1="661.5" x2="1138" y2="661.5" stroke="#222222" stroke-width="1"/><line x1="95" y1="538.5" x2="1138" y2="538.5" stroke="#222222" stroke-width="1"/><line x1="95" y1="416.5" x2="1138" y2="416.5" stroke="#222222" stroke-width="1"/><line x1="95" y1="293.5" x2="1138" y2="293.5" stroke="#222222" stroke-width="1"/><line x1="95" y1="170.0" x2="1138" y2="170.0" stroke="#222222" stroke-width="1"/><use href="#gr" y="723"/><use href="#gr" y="710"/><use href="#gr" y="698"/><use href="#gr" y="686"/><use href="#gr" y="673"/><use href="#gr" y="661"/><use href="#gr" y="649"/><use href="#gr" y="637"/><use href="#gr" y="624"/><use href="#gr" y="612"/><use href="#gr" y="600"/><use href="#gr" y="588"/><use href="#gr" y="575"/><use href="#gr" y="563"/><use href="#gr" y="551"/><use href="#gr" y="539"/><use href="#gr" y="526"/><use href="#gr" y="514"/><use href="#gr" y="502"/><use href="#gr" y="489"/><use href="#gr" y="477"/><use href="#gr" y="465"/><use href="#gr" y="453"/><use href="#gr" y="440"/><use href="#gr" y="428"/><use href="#gr" y="416"/><use href="#gr" y="404"/><use href="#gr" y="391"/><use href="#gr" y="379"/><use href="#gr" y="367"/><use href="#gr" y="355"/><use href="#gr" y="342"/><use href="#gr" y="330"/><use href="#gr" y="318"/><use href="#gr" y="306"/><use href="#gr" y="293"/><use href="#gr" y="281"/><use href="#gr" y="269"/><use href="#gr" y="256"/><use href="#gr" y="244"/><use href="#gr" y="232"/><use href="#gr" y="220"/><use href="#gr" y="207"/><use href="#gr" y="195"/><use href="#gr" y="183"/><use href="#gr" y="171"/><use href="#gr" y="158"/><path d="M419,538.5 H460 M439.5,518 V559" stroke="#b40000" stroke-width="1" shape-rendering="crispEdges"/><circle cx="439.5" cy="538.5" r="5.4" fill="none" stroke="#b40000" stroke-width="1"/><path d="M409.1,277.4 L715,261 L794.4,550.4 L791.6,550.4" fill="none" stroke="#b9b9b9" stroke-width="1"/><path d="M409.5,283.5 L713.3,267.4 L791.6,550.4" fill="none" stroke="#b9b9b9" stroke-width="1"/><path d="M738.0,254.4 C741.2,265.8 750.7,300.4 757.0,323.0 C763.3,345.6 769.4,367.8 775.6,390.0 C781.8,412.2 788.9,437.7 794.0,456.0 C799.1,474.3 802.5,487.7 806.0,500.0 C809.5,512.3 812.7,521.7 815.0,530.0 C817.3,538.3 818.7,544.0 820.0,550.0 C821.3,556.0 822.4,561.0 823.0,566.0 C823.6,571.0 823.8,575.3 823.6,580.0 C823.4,584.7 822.9,589.0 822.0,594.0 C821.1,599.0 819.9,603.7 818.0,610.0 C816.1,616.3 811.8,628.3 810.6,632.0" fill="none" stroke="#b9b9b9" stroke-width="1"/><path d="M796,580.6 L779.6,629.4 M798.6,580.8 L782.4,629.4 M796,580.6 L798.6,580.8" fill="none" stroke="#b9b9b9" stroke-width="1"/><path d="M423.0,402.4 C425.8,402.6 433.8,403.6 440.0,403.6 C446.2,403.6 453.3,403.5 460.0,402.4 C466.7,401.3 473.3,399.7 480.0,397.0 C486.7,394.3 494.7,389.8 500.0,386.0 C505.3,382.2 508.7,378.3 512.0,374.0 C515.3,369.7 517.0,365.0 520.0,360.0 C523.0,355.0 526.7,348.5 530.0,344.0 C533.3,339.5 536.3,336.2 540.0,333.0 C543.7,329.8 547.0,327.3 552.0,325.0 C557.0,322.7 563.7,320.5 570.0,319.0 C576.3,317.5 583.3,316.5 590.0,316.0 C596.7,315.5 603.3,315.2 610.0,316.0 C616.7,316.8 623.3,318.2 630.0,321.0 C636.7,323.8 644.0,328.2 650.0,333.0 C656.0,337.8 661.5,343.8 666.0,350.0 C670.5,356.2 674.3,363.3 677.0,370.0 C679.7,376.7 680.8,383.3 682.0,390.0 C683.2,396.7 684.0,403.3 684.0,410.0 C684.0,416.7 683.3,423.7 682.0,430.0 C680.7,436.3 678.0,442.3 676.0,448.0 C674.0,453.7 671.3,459.0 670.0,464.0 C668.7,469.0 667.8,473.3 668.0,478.0 C668.2,482.7 669.0,487.3 671.0,492.0 C673.0,496.7 676.8,501.7 680.0,506.0 C683.2,510.3 687.2,514.3 690.0,518.0 C692.8,521.7 695.2,524.3 697.0,528.0 C698.8,531.7 700.2,536.0 701.0,540.0 C701.8,544.0 701.5,548.9 702.0,552.0 C702.5,555.1 703.0,557.0 704.0,558.5 C705.0,560.0 706.5,560.7 708.0,561.0 C709.5,561.3 711.0,560.7 713.0,560.2 C715.0,559.7 715.5,559.3 720.0,558.0 C724.5,556.7 733.3,553.7 740.0,552.6 C746.7,551.5 753.7,551.5 760.0,551.2 C766.3,550.9 772.6,551.0 778.0,551.0 C783.4,551.0 790.0,551.0 792.4,551.0" fill="none" stroke="#a87e40" stroke-width="0.95"/><path d="M421.6,422.0 C424.7,422.3 433.6,423.6 440.0,423.6 C446.4,423.6 453.3,423.0 460.0,422.0 C466.7,421.0 473.3,419.8 480.0,417.6 C486.7,415.4 494.0,412.4 500.0,409.0 C506.0,405.6 511.3,401.3 516.0,397.0 C520.7,392.7 524.3,387.8 528.0,383.0 C531.7,378.2 534.7,372.8 538.0,368.0 C541.3,363.2 544.3,358.0 548.0,354.0 C551.7,350.0 555.3,346.7 560.0,344.0 C564.7,341.3 570.0,339.0 576.0,337.6 C582.0,336.2 589.3,335.6 596.0,335.6 C602.7,335.6 610.0,336.0 616.0,337.6 C622.0,339.2 627.0,341.6 632.0,345.0 C637.0,348.4 642.0,353.2 646.0,358.0 C650.0,362.8 653.3,368.3 656.0,374.0 C658.7,379.7 660.7,386.0 662.0,392.0 C663.3,398.0 663.8,404.0 664.0,410.0 C664.2,416.0 663.8,423.0 663.0,428.0 C662.2,433.0 660.8,435.7 659.0,440.0 C657.2,444.3 654.1,449.0 652.4,454.0 C650.7,459.0 649.2,465.3 648.6,470.0 C648.0,474.7 648.3,477.3 649.0,482.0 C649.7,486.7 650.8,493.0 653.0,498.0 C655.2,503.0 658.7,507.5 662.0,512.0 C665.3,516.5 670.0,521.0 673.0,525.0 C676.0,529.0 678.2,532.2 680.0,536.0 C681.8,539.8 683.3,544.0 683.6,548.0 C683.9,552.0 683.1,556.0 682.0,560.0 C680.9,564.0 679.3,568.2 677.0,572.0 C674.7,575.8 671.5,580.0 668.0,583.0 C664.5,586.0 660.0,588.5 656.0,590.0 C652.0,591.5 648.0,592.1 644.0,592.0 C640.0,591.9 636.0,590.9 632.0,589.6 C628.0,588.3 624.0,586.3 620.0,584.0 C616.0,581.7 612.3,578.8 608.0,576.0 C603.7,573.2 598.7,569.6 594.0,567.0 C589.3,564.4 585.0,561.7 580.0,560.4 C575.0,559.1 569.3,559.0 564.0,559.4 C558.7,559.8 553.0,560.9 548.0,563.0 C543.0,565.1 538.0,568.2 534.0,572.0 C530.0,575.8 526.5,581.3 524.0,586.0 C521.5,590.7 520.0,595.4 519.0,600.0 C518.0,604.6 518.2,611.2 518.0,613.4" fill="none" stroke="#a87e40" stroke-width="0.95"/><path d="M537.6,614.4 C537.8,612.3 537.9,605.9 539.0,602.0 C540.1,598.1 541.5,594.3 544.0,591.0 C546.5,587.7 550.3,584.1 554.0,582.0 C557.7,579.9 562.0,578.9 566.0,578.6 C570.0,578.3 574.0,578.8 578.0,580.0 C582.0,581.2 586.0,583.5 590.0,586.0 C594.0,588.5 597.7,592.0 602.0,595.0 C606.3,598.0 611.3,601.6 616.0,604.0 C620.7,606.4 625.3,608.3 630.0,609.6 C634.7,610.9 639.3,611.6 644.0,611.6 C648.7,611.6 653.3,611.0 658.0,609.6 C662.7,608.2 667.7,605.5 672.0,603.0 C676.3,600.5 679.3,597.2 684.0,594.6 C688.7,592.0 694.0,590.0 700.0,587.4 C706.0,584.8 713.3,581.5 720.0,579.0 C726.7,576.5 733.3,574.0 740.0,572.6 C746.7,571.2 753.3,570.2 760.0,570.4 C766.7,570.6 774.0,572.3 780.0,574.0 C786.0,575.7 793.3,579.5 796.0,580.6" fill="none" stroke="#a87e40" stroke-width="0.95"/><g transform="translate(544.0,299.0) rotate(-26.3)"><rect x="-14.8" y="-4.4" width="29.5" height="8.8" rx="1.2" fill="url(#benchp)" stroke="#b2b2b2" stroke-width="0.8"/><line x1="0" y1="-4.4" x2="0" y2="4.4" stroke="#bdbdbd" stroke-width="0.8"/><line x1="-14.2" y1="-3.5" x2="14.2" y2="-3.5" stroke="#c4c4c4" stroke-width="0.8"/></g><g transform="translate(591.5,286.8) rotate(-0.8)"><rect x="-14.8" y="-4.4" width="29.5" height="8.8" rx="1.2" fill="url(#benchp)" stroke="#b2b2b2" stroke-width="0.8"/><line x1="0" y1="-4.4" x2="0" y2="4.4" stroke="#bdbdbd" stroke-width="0.8"/><line x1="-14.2" y1="-3.5" x2="14.2" y2="-3.5" stroke="#c4c4c4" stroke-width="0.8"/></g><g transform="translate(639.6,295.4) rotate(24.6)"><rect x="-14.8" y="-4.4" width="29.5" height="8.8" rx="1.2" fill="url(#benchp)" stroke="#b2b2b2" stroke-width="0.8"/><line x1="0" y1="-4.4" x2="0" y2="4.4" stroke="#bdbdbd" stroke-width="0.8"/><line x1="-14.2" y1="-3.5" x2="14.2" y2="-3.5" stroke="#c4c4c4" stroke-width="0.8"/></g><g transform="translate(680.4,322.6) rotate(47.2)"><rect x="-14.8" y="-4.4" width="29.5" height="8.8" rx="1.2" fill="url(#benchp)" stroke="#b2b2b2" stroke-width="0.8"/><line x1="0" y1="-4.4" x2="0" y2="4.4" stroke="#bdbdbd" stroke-width="0.8"/><line x1="-14.2" y1="-3.5" x2="14.2" y2="-3.5" stroke="#c4c4c4" stroke-width="0.8"/></g><g transform="translate(706.0,364.4) rotate(68.6)"><rect x="-14.8" y="-4.4" width="29.5" height="8.8" rx="1.2" fill="url(#benchp)" stroke="#b2b2b2" stroke-width="0.8"/><line x1="0" y1="-4.4" x2="0" y2="4.4" stroke="#bdbdbd" stroke-width="0.8"/><line x1="-14.2" y1="-3.5" x2="14.2" y2="-3.5" stroke="#c4c4c4" stroke-width="0.8"/></g><g transform="translate(713.0,413.6) rotate(93.8)"><rect x="-14.8" y="-4.4" width="29.5" height="8.8" rx="1.2" fill="url(#benchp)" stroke="#b2b2b2" stroke-width="0.8"/><line x1="0" y1="-4.4" x2="0" y2="4.4" stroke="#bdbdbd" stroke-width="0.8"/><line x1="-14.2" y1="-3.5" x2="14.2" y2="-3.5" stroke="#c4c4c4" stroke-width="0.8"/></g><g transform="translate(574.4,543.4) rotate(5.0)"><rect x="-14.8" y="-4.4" width="29.5" height="8.8" rx="1.2" fill="url(#benchp)" stroke="#b2b2b2" stroke-width="0.8"/><line x1="0" y1="-4.4" x2="0" y2="4.4" stroke="#bdbdbd" stroke-width="0.8"/><line x1="-14.2" y1="-3.5" x2="14.2" y2="-3.5" stroke="#c4c4c4" stroke-width="0.8"/></g><circle cx="661.6" cy="307.0" r="3.5" fill="none" stroke="#f2f2f2" stroke-width="1.2"/><path d="M661.6,303.4 l0.8,-1.6" stroke="#bbb" stroke-width="0.7"/><circle cx="602.4" cy="545.6" r="3.5" fill="none" stroke="#f2f2f2" stroke-width="1.2"/><path d="M602.4,542.0 l0.8,-1.6" stroke="#bbb" stroke-width="0.7"/><circle cx="779.6" cy="543.2" r="3.5" fill="none" stroke="#f2f2f2" stroke-width="1.2"/><path d="M779.6,539.6 l0.8,-1.6" stroke="#bbb" stroke-width="0.7"/><g transform="translate(486.2,351.8) rotate(-90.0) scale(1.000)"><path d="M-13.7,-37.9 L-9.4,-36.4 L-4.6,-39.6 L-1.6,-35.7 L-0.1,-34.7 L2.6,-33.5 L7.2,-34.3 L7.1,-31.9 L4.2,-28.1 L2.2,-26.2 L-0.4,-23.7 L-3.2,-18.1 L-1.1,-17.2 L5.1,-20.2 L4.2,-23.8 L7.0,-26.1 L6.5,-30.0 L10.4,-33.4 L14.5,-34.2 L17.6,-30.1 L22.6,-29.0 L23.9,-23.0 L27.8,-20.4 L29.5,-14.7 L33.7,-13.2 L34.8,-10.4 L35.1,-3.8 L34.3,-0.4 L33.6,4.5 L30.7,8.5 L31.5,13.4 L26.8,16.4 L25.9,21.8 L20.7,23.1 L18.1,26.7 L15.5,22.4 L12.1,20.7 L13.5,17.9 L9.5,13.9 L5.3,12.2 L8.5,15.9 L9.1,22.1 L8.9,26.3 L2.8,28.6 L0.3,32.7 L-4.3,31.6 L-9.9,32.3 L-12.3,29.4 L-18.2,26.6 L-17.5,22.7 L-19.4,19.2 L-17.3,16.6 L-16.3,11.9 L-14.3,9.6 L-10.4,9.0 L-7.2,9.1 L-2.9,11.5 L-6.3,16.7 L-2.2,16.4 L3.6,16.2 L3.1,12.5 L3.7,8.9 L1.6,7.3 L2.1,3.9 L-0.6,1.9 L0.0,-1.5 L-2.3,-3.9 L-2.1,-7.7 L-4.6,-9.0 L-3.6,-12.6 L-6.3,-14.5 L-5.2,-19.0 L-8.4,-20.3 L-7.4,-23.2 L-10.1,-25.5 L-8.7,-28.9 L-11.9,-31.8 L-10.8,-34.3Z" fill="none" stroke="#558f22" stroke-width="0.85" stroke-linejoin="round"/><path d="M-11.6,-37.2 L-15.8,-34.2 L-18.2,-31.7 L-22.2,-30.9 L-25.3,-27.4 L-28.2,-24.5 L-29.0,-20.6 L-34.6,-17.6 L-33.2,-15.3 L-28.9,-12.0 L-27.2,-15.9 L-22.8,-14.6 L-20.7,-20.4 L-17.7,-21.3 L-14.7,-19.6 L-10.9,-15.3 L-7.7,-17.6 L-4.4,-14.2 L-4.0,-18.7 L-0.8,-22.2 L1.0,-25.1 L4.1,-28.1 L6.2,-31.0 L5.5,-36.0 L3.1,-32.9 L0.6,-34.6 L-2.0,-35.5 L-5.1,-40.1 L-9.5,-36.6Z" fill="none" stroke="#558f22" stroke-width="0.85" stroke-linejoin="round"/><path d="M-32.5,-14.2 L-36.9,-9.4 L-34.3,-3.6 L-38.7,-1.2 L-35.4,2.5 L-36.0,7.3 L-33.9,10.7 L-32.1,17.2 L-28.6,18.8 L-26.6,18.0 L-25.1,18.9 L-20.8,18.6 L-17.8,19.6 L-15.1,16.4 L-15.9,12.3 L-18.2,9.0 L-23.4,11.4 L-24.1,7.1 L-27.0,3.4 L-24.2,1.4 L-20.6,-3.0 L-16.5,-1.9 L-14.5,-2.3 L-17.8,-7.4 L-21.2,-5.5 L-23.9,-8.3 L-28.7,-8.7 L-29.4,-13.8Z" fill="none" stroke="#558f22" stroke-width="0.85" stroke-linejoin="round"/><ellipse cx="2.0" cy="-40.0" rx="2.4" ry="1.2" transform="rotate(-20 2.0 -40.0)" fill="none" stroke="#558f22" stroke-width="0.85"/><ellipse cx="8.0" cy="-38.5" rx="2.4" ry="1.2" transform="rotate(10 8.0 -38.5)" fill="none" stroke="#558f22" stroke-width="0.85"/><ellipse cx="13.0" cy="-37.0" rx="2.4" ry="1.2" transform="rotate(30 13.0 -37.0)" fill="none" stroke="#558f22" stroke-width="0.85"/><ellipse cx="-37.0" cy="-12.0" rx="2.4" ry="1.2" transform="rotate(70 -37.0 -12.0)" fill="none" stroke="#558f22" stroke-width="0.85"/><ellipse cx="-39.0" cy="4.0" rx="2.4" ry="1.2" transform="rotate(80 -39.0 4.0)" fill="none" stroke="#558f22" stroke-width="0.85"/><path d="M-10.0,-11.0 L-8.0,-15.0 L-6.0,-13.0" fill="none" stroke="#558f22" stroke-width="0.85" stroke-linejoin="round"/><path d="M-15.0,-12.5 L-19.0,-17.0 L-17.0,-20.0 L-14.0,-16.0" fill="none" stroke="#558f22" stroke-width="0.85" stroke-linejoin="round"/><path d="M-20.0,-13.0 L-27.0,-14.0 L-26.0,-11.0 L-20.0,-11.0" fill="none" stroke="#558f22" stroke-width="0.85" stroke-linejoin="round"/><path d="M-20.0,-13.0 L-24.0,-17.0 L-21.0,-19.0" fill="none" stroke="#558f22" stroke-width="0.85" stroke-linejoin="round"/><path d="M7.0,-13.0 L10.0,-21.0 L12.0,-19.0 L9.0,-13.0" fill="none" stroke="#558f22" stroke-width="0.85" stroke-linejoin="round"/><path d="M8.0,-19.0 L6.0,-25.0 L8.0,-24.0" fill="none" stroke="#558f22" stroke-width="0.85" stroke-linejoin="round"/><path d="M13.0,0.0 L17.0,3.0 L19.0,1.0" fill="none" stroke="#558f22" stroke-width="0.85" stroke-linejoin="round"/><path d="M18.0,-2.5 L22.0,-4.0 L21.0,-1.0 L17.0,1.0" fill="none" stroke="#558f22" stroke-width="0.85" stroke-linejoin="round"/><path d="M13.0,0.0 L15.0,-6.0 L18.0,-7.0" fill="none" stroke="#558f22" stroke-width="0.85" stroke-linejoin="round"/><path d="M6.0,14.0 L4.0,22.0 L3.0,30.0 L6.0,31.0 L7.0,24.0" fill="none" stroke="#558f22" stroke-width="0.85" stroke-linejoin="round"/><path d="M7.0,20.0 L12.0,27.0 L15.0,30.0 L16.0,27.0 L11.0,21.0" fill="none" stroke="#558f22" stroke-width="0.85" stroke-linejoin="round"/><path d="M10.0,27.0 L9.0,32.0 L12.0,33.0" fill="none" stroke="#558f22" stroke-width="0.85" stroke-linejoin="round"/><path d="M-12.0,3.5 L-15.0,7.0 L-21.0,8.0 L-24.0,6.0 L-20.0,5.0" fill="none" stroke="#558f22" stroke-width="0.85" stroke-linejoin="round"/><path d="M-20.0,3.5 L-25.0,0.0 L-28.0,-1.0 L-27.0,2.0" fill="none" stroke="#558f22" stroke-width="0.85" stroke-linejoin="round"/><path d="M-27.0,3.0 L-31.0,5.0 L-30.0,8.0 L-26.0,7.0" fill="none" stroke="#558f22" stroke-width="0.85" stroke-linejoin="round"/><path d="M-5.0,14.0 L-8.0,19.0 L-6.0,22.0 L-4.0,18.0" fill="none" stroke="#558f22" stroke-width="0.85" stroke-linejoin="round"/><path d="M-8.0,1.0 L-9.0,-3.0 L-13.0,-4.0 L-12.0,-1.0" fill="none" stroke="#558f22" stroke-width="0.85" stroke-linejoin="round"/><path d="M-4.0,9.0 L-9.0,11.0 L-12.0,16.0 L-9.0,15.0" fill="none" stroke="#558f22" stroke-width="0.85" stroke-linejoin="round"/><path d="M4.0,10.0 L9.0,9.0 L12.0,12.0 L8.0,12.0" fill="none" stroke="#558f22" stroke-width="0.85" stroke-linejoin="round"/><path d="M4.0,-8.0 L1.0,-12.0 L-1.0,-11.0" fill="none" stroke="#558f22" stroke-width="0.85" stroke-linejoin="round"/><path d="M-3.2,-3.6 Q0,-5.4 3,-3.2 Q4.6,0.6 3,4.6 Q0,7 -2.8,4.8 Q-4.6,0.6 -3.2,-3.6Z" fill="#66aa2a"/><path d="M0.0,-2.0 L-5.0,-8.0" stroke="#66aa2a" stroke-width="2.80" stroke-linecap="round" fill="none"/><path d="M-5.0,-8.0 L-10.0,-11.0" stroke="#66aa2a" stroke-width="2.10" stroke-linecap="round" fill="none"/><path d="M-10.0,-11.0 L-15.0,-12.5" stroke="#66aa2a" stroke-width="1.40" stroke-linecap="round" fill="none"/><path d="M-15.0,-12.5 L-20.0,-13.0" stroke="#66aa2a" stroke-width="0.90" stroke-linecap="round" fill="none"/><path d="M1.0,-3.0 L4.0,-8.0" stroke="#66aa2a" stroke-width="2.40" stroke-linecap="round" fill="none"/><path d="M4.0,-8.0 L7.0,-13.0" stroke="#66aa2a" stroke-width="1.60" stroke-linecap="round" fill="none"/><path d="M7.0,-13.0 L8.0,-19.0" stroke="#66aa2a" stroke-width="1.00" stroke-linecap="round" fill="none"/><path d="M2.0,1.0 L8.0,1.5" stroke="#66aa2a" stroke-width="2.10" stroke-linecap="round" fill="none"/><path d="M8.0,1.5 L13.0,0.0" stroke="#66aa2a" stroke-width="1.30" stroke-linecap="round" fill="none"/><path d="M13.0,0.0 L18.0,-2.5" stroke="#66aa2a" stroke-width="0.90" stroke-linecap="round" fill="none"/><path d="M1.0,4.0 L4.0,10.0" stroke="#66aa2a" stroke-width="2.60" stroke-linecap="round" fill="none"/><path d="M4.0,10.0 L6.0,14.0" stroke="#66aa2a" stroke-width="1.80" stroke-linecap="round" fill="none"/><path d="M6.0,14.0 L7.0,20.0" stroke="#66aa2a" stroke-width="1.10" stroke-linecap="round" fill="none"/><path d="M7.0,20.0 L10.0,27.0" stroke="#66aa2a" stroke-width="0.80" stroke-linecap="round" fill="none"/><path d="M-2.0,2.0 L-8.0,1.0" stroke="#66aa2a" stroke-width="2.40" stroke-linecap="round" fill="none"/><path d="M-8.0,1.0 L-12.0,3.5" stroke="#66aa2a" stroke-width="1.90" stroke-linecap="round" fill="none"/><path d="M-12.0,3.5 L-20.0,3.5" stroke="#66aa2a" stroke-width="1.30" stroke-linecap="round" fill="none"/><path d="M-20.0,3.5 L-27.0,3.0" stroke="#66aa2a" stroke-width="0.90" stroke-linecap="round" fill="none"/><path d="M-1.0,4.0 L-4.0,9.0" stroke="#66aa2a" stroke-width="1.80" stroke-linecap="round" fill="none"/><path d="M-4.0,9.0 L-5.0,14.0" stroke="#66aa2a" stroke-width="1.00" stroke-linecap="round" fill="none"/></g><g transform="translate(702.4,478.5) rotate(0.0) scale(1.000)"><path d="M-13.2,-38.4 L-8.4,-36.6 L-4.3,-39.9 L-2.1,-35.4 L0.1,-35.2 L3.1,-33.2 L7.3,-34.2 L5.8,-31.9 L4.6,-29.2 L1.2,-25.7 L-0.5,-23.6 L-2.6,-18.5 L-0.9,-17.3 L4.8,-20.0 L3.8,-24.4 L6.9,-26.8 L6.5,-30.2 L11.1,-32.4 L15.1,-33.4 L17.3,-30.2 L23.7,-28.4 L24.2,-23.7 L27.7,-21.0 L29.1,-15.8 L33.4,-13.5 L34.9,-9.6 L34.6,-4.4 L33.9,-0.5 L33.5,5.1 L30.4,9.1 L30.9,13.0 L27.1,17.0 L26.1,21.2 L20.9,23.4 L18.5,27.4 L15.4,22.2 L12.3,20.9 L13.1,18.6 L9.8,14.3 L5.7,13.2 L9.4,17.1 L9.0,22.2 L7.9,27.0 L3.6,27.9 L-0.4,33.3 L-2.9,32.4 L-8.9,32.2 L-12.0,29.8 L-17.4,27.9 L-18.1,22.4 L-19.9,19.0 L-17.5,17.2 L-16.1,12.3 L-15.0,9.7 L-10.5,8.7 L-6.7,8.4 L-2.3,10.5 L-5.9,17.2 L-2.0,16.7 L2.9,16.5 L2.6,11.9 L3.9,8.6 L0.8,6.8 L2.2,3.7 L-0.3,1.8 L-0.1,-2.1 L-2.4,-3.7 L-2.0,-7.7 L-5.0,-9.5 L-3.5,-12.5 L-6.3,-14.9 L-5.6,-18.2 L-8.4,-20.9 L-6.8,-24.0 L-10.3,-26.3 L-9.2,-29.0 L-11.7,-31.2 L-11.0,-34.6Z" fill="none" stroke="#558f22" stroke-width="0.85" stroke-linejoin="round"/><path d="M-12.2,-36.6 L-14.6,-33.7 L-18.3,-32.6 L-21.6,-31.0 L-25.0,-28.2 L-27.9,-24.8 L-29.2,-19.8 L-34.5,-17.7 L-34.0,-15.1 L-29.5,-11.4 L-27.1,-16.4 L-22.0,-16.1 L-20.7,-21.4 L-18.0,-20.9 L-14.8,-18.8 L-11.0,-15.8 L-7.2,-17.2 L-3.6,-15.1 L-4.2,-19.6 L-2.5,-21.8 L1.7,-24.9 L3.9,-28.6 L5.8,-30.8 L5.7,-35.7 L3.7,-33.2 L1.2,-34.8 L-1.7,-35.1 L-4.5,-39.9 L-8.4,-36.5Z" fill="none" stroke="#558f22" stroke-width="0.85" stroke-linejoin="round"/><path d="M-33.1,-14.2 L-37.4,-9.1 L-34.6,-3.5 L-39.2,-2.0 L-35.8,2.8 L-36.3,7.5 L-33.5,10.6 L-31.9,16.1 L-29.3,19.5 L-27.4,17.1 L-24.7,19.5 L-20.5,19.2 L-18.4,20.0 L-14.9,16.3 L-15.2,13.2 L-17.9,8.4 L-23.7,11.6 L-24.3,7.9 L-26.9,2.6 L-23.9,1.2 L-19.6,-3.0 L-16.8,-1.7 L-14.5,-2.4 L-17.3,-7.5 L-21.2,-5.1 L-23.6,-8.5 L-29.1,-9.2 L-29.0,-13.9Z" fill="none" stroke="#558f22" stroke-width="0.85" stroke-linejoin="round"/><ellipse cx="2.0" cy="-40.0" rx="2.4" ry="1.2" transform="rotate(-20 2.0 -40.0)" fill="none" stroke="#558f22" stroke-width="0.85"/><ellipse cx="8.0" cy="-38.5" rx="2.4" ry="1.2" transform="rotate(10 8.0 -38.5)" fill="none" stroke="#558f22" stroke-width="0.85"/><ellipse cx="13.0" cy="-37.0" rx="2.4" ry="1.2" transform="rotate(30 13.0 -37.0)" fill="none" stroke="#558f22" stroke-width="0.85"/><ellipse cx="-37.0" cy="-12.0" rx="2.4" ry="1.2" transform="rotate(70 -37.0 -12.0)" fill="none" stroke="#558f22" stroke-width="0.85"/><ellipse cx="-39.0" cy="4.0" rx="2.4" ry="1.2" transform="rotate(80 -39.0 4.0)" fill="none" stroke="#558f22" stroke-width="0.85"/><path d="M-10.0,-11.0 L-8.0,-15.0 L-6.0,-13.0" fill="none" stroke="#558f22" stroke-width="0.85" stroke-linejoin="round"/><path d="M-15.0,-12.5 L-19.0,-17.0 L-17.0,-20.0 L-14.0,-16.0" fill="none" stroke="#558f22" stroke-width="0.85" stroke-linejoin="round"/><path d="M-20.0,-13.0 L-27.0,-14.0 L-26.0,-11.0 L-20.0,-11.0" fill="none" stroke="#558f22" stroke-width="0.85" stroke-linejoin="round"/><path d="M-20.0,-13.0 L-24.0,-17.0 L-21.0,-19.0" fill="none" stroke="#558f22" stroke-width="0.85" stroke-linejoin="round"/><path d="M7.0,-13.0 L10.0,-21.0 L12.0,-19.0 L9.0,-13.0" fill="none" stroke="#558f22" stroke-width="0.85" stroke-linejoin="round"/><path d="M8.0,-19.0 L6.0,-25.0 L8.0,-24.0" fill="none" stroke="#558f22" stroke-width="0.85" stroke-linejoin="round"/><path d="M13.0,0.0 L17.0,3.0 L19.0,1.0" fill="none" stroke="#558f22" stroke-width="0.85" stroke-linejoin="round"/><path d="M18.0,-2.5 L22.0,-4.0 L21.0,-1.0 L17.0,1.0" fill="none" stroke="#558f22" stroke-width="0.85" stroke-linejoin="round"/><path d="M13.0,0.0 L15.0,-6.0 L18.0,-7.0" fill="none" stroke="#558f22" stroke-width="0.85" stroke-linejoin="round"/><path d="M6.0,14.0 L4.0,22.0 L3.0,30.0 L6.0,31.0 L7.0,24.0" fill="none" stroke="#558f22" stroke-width="0.85" stroke-linejoin="round"/><path d="M7.0,20.0 L12.0,27.0 L15.0,30.0 L16.0,27.0 L11.0,21.0" fill="none" stroke="#558f22" stroke-width="0.85" stroke-linejoin="round"/><path d="M10.0,27.0 L9.0,32.0 L12.0,33.0" fill="none" stroke="#558f22" stroke-width="0.85" stroke-linejoin="round"/><path d="M-12.0,3.5 L-15.0,7.0 L-21.0,8.0 L-24.0,6.0 L-20.0,5.0" fill="none" stroke="#558f22" stroke-width="0.85" stroke-linejoin="round"/><path d="M-20.0,3.5 L-25.0,0.0 L-28.0,-1.0 L-27.0,2.0" fill="none" stroke="#558f22" stroke-width="0.85" stroke-linejoin="round"/><path d="M-27.0,3.0 L-31.0,5.0 L-30.0,8.0 L-26.0,7.0" fill="none" stroke="#558f22" stroke-width="0.85" stroke-linejoin="round"/><path d="M-5.0,14.0 L-8.0,19.0 L-6.0,22.0 L-4.0,18.0" fill="none" stroke="#558f22" stroke-width="0.85" stroke-linejoin="round"/><path d="M-8.0,1.0 L-9.0,-3.0 L-13.0,-4.0 L-12.0,-1.0" fill="none" stroke="#558f22" stroke-width="0.85" stroke-linejoin="round"/><path d="M-4.0,9.0 L-9.0,11.0 L-12.0,16.0 L-9.0,15.0" fill="none" stroke="#558f22" stroke-width="0.85" stroke-linejoin="round"/><path d="M4.0,10.0 L9.0,9.0 L12.0,12.0 L8.0,12.0" fill="none" stroke="#558f22" stroke-width="0.85" stroke-linejoin="round"/><path d="M4.0,-8.0 L1.0,-12.0 L-1.0,-11.0" fill="none" stroke="#558f22" stroke-width="0.85" stroke-linejoin="round"/><path d="M-3.2,-3.6 Q0,-5.4 3,-3.2 Q4.6,0.6 3,4.6 Q0,7 -2.8,4.8 Q-4.6,0.6 -3.2,-3.6Z" fill="#66aa2a"/><path d="M0.0,-2.0 L-5.0,-8.0" stroke="#66aa2a" stroke-width="2.80" stroke-linecap="round" fill="none"/><path d="M-5.0,-8.0 L-10.0,-11.0" stroke="#66aa2a" stroke-width="2.10" stroke-linecap="round" fill="none"/><path d="M-10.0,-11.0 L-15.0,-12.5" stroke="#66aa2a" stroke-width="1.40" stroke-linecap="round" fill="none"/><path d="M-15.0,-12.5 L-20.0,-13.0" stroke="#66aa2a" stroke-width="0.90" stroke-linecap="round" fill="none"/><path d="M1.0,-3.0 L4.0,-8.0" stroke="#66aa2a" stroke-width="2.40" stroke-linecap="round" fill="none"/><path d="M4.0,-8.0 L7.0,-13.0" stroke="#66aa2a" stroke-width="1.60" stroke-linecap="round" fill="none"/><path d="M7.0,-13.0 L8.0,-19.0" stroke="#66aa2a" stroke-width="1.00" stroke-linecap="round" fill="none"/><path d="M2.0,1.0 L8.0,1.5" stroke="#66aa2a" stroke-width="2.10" stroke-linecap="round" fill="none"/><path d="M8.0,1.5 L13.0,0.0" stroke="#66aa2a" stroke-width="1.30" stroke-linecap="round" fill="none"/><path d="M13.0,0.0 L18.0,-2.5" stroke="#66aa2a" stroke-width="0.90" stroke-linecap="round" fill="none"/><path d="M1.0,4.0 L4.0,10.0" stroke="#66aa2a" stroke-width="2.60" stroke-linecap="round" fill="none"/><path d="M4.0,10.0 L6.0,14.0" stroke="#66aa2a" stroke-width="1.80" stroke-linecap="round" fill="none"/><path d="M6.0,14.0 L7.0,20.0" stroke="#66aa2a" stroke-width="1.10" stroke-linecap="round" fill="none"/><path d="M7.0,20.0 L10.0,27.0" stroke="#66aa2a" stroke-width="0.80" stroke-linecap="round" fill="none"/><path d="M-2.0,2.0 L-8.0,1.0" stroke="#66aa2a" stroke-width="2.40" stroke-linecap="round" fill="none"/><path d="M-8.0,1.0 L-12.0,3.5" stroke="#66aa2a" stroke-width="1.90" stroke-linecap="round" fill="none"/><path d="M-12.0,3.5 L-20.0,3.5" stroke="#66aa2a" stroke-width="1.30" stroke-linecap="round" fill="none"/><path d="M-20.0,3.5 L-27.0,3.0" stroke="#66aa2a" stroke-width="0.90" stroke-linecap="round" fill="none"/><path d="M-1.0,4.0 L-4.0,9.0" stroke="#66aa2a" stroke-width="1.80" stroke-linecap="round" fill="none"/><path d="M-4.0,9.0 L-5.0,14.0" stroke="#66aa2a" stroke-width="1.00" stroke-linecap="round" fill="none"/></g><g transform="translate(581.6,450.7) rotate(90.0) scale(0.662)"><path d="M-13.1,-37.7 L-9.1,-36.6 L-4.8,-39.3 L-1.7,-35.3 L0.2,-34.7 L2.7,-32.7 L7.6,-34.6 L6.7,-32.5 L4.0,-29.0 L1.7,-26.4 L-1.0,-23.1 L-3.0,-18.7 L0.1,-18.0 L5.1,-20.4 L4.0,-23.4 L6.7,-26.0 L7.7,-31.3 L10.9,-32.4 L15.2,-33.8 L17.1,-29.7 L22.5,-29.5 L23.7,-23.5 L28.3,-20.6 L28.7,-16.2 L33.6,-13.5 L35.1,-9.7 L35.0,-3.8 L33.8,-1.1 L34.3,3.9 L31.0,8.3 L31.0,12.8 L26.8,17.1 L26.1,21.5 L20.6,23.1 L18.9,27.3 L16.0,23.0 L12.9,21.4 L13.0,18.1 L9.1,14.0 L4.6,12.3 L9.0,16.7 L9.2,21.3 L8.8,26.3 L3.6,27.3 L0.1,33.2 L-2.9,31.8 L-8.8,32.0 L-12.3,29.2 L-18.7,26.9 L-17.6,22.8 L-19.2,18.6 L-16.8,17.0 L-16.4,12.2 L-13.6,10.2 L-10.1,8.4 L-7.5,8.6 L-3.1,10.5 L-5.4,17.1 L-2.3,16.4 L3.4,16.2 L2.9,12.3 L3.6,8.7 L1.1,6.4 L2.5,3.6 L-0.4,1.6 L0.4,-2.2 L-2.2,-3.6 L-1.5,-7.5 L-4.4,-9.1 L-3.1,-12.4 L-6.3,-14.9 L-4.9,-18.6 L-8.8,-20.1 L-7.3,-23.4 L-10.8,-25.8 L-9.1,-28.6 L-12.3,-31.4 L-11.0,-34.4Z" fill="none" stroke="#558f22" stroke-width="1.09" stroke-linejoin="round"/><path d="M-12.2,-35.7 L-14.3,-33.9 L-18.2,-32.4 L-22.1,-31.4 L-24.7,-27.3 L-27.5,-25.2 L-28.6,-20.1 L-34.3,-18.8 L-33.4,-14.8 L-28.9,-12.6 L-27.8,-16.0 L-22.4,-15.3 L-20.2,-21.4 L-17.8,-21.8 L-14.0,-18.7 L-11.8,-16.4 L-7.9,-16.7 L-3.3,-14.9 L-4.1,-20.1 L-1.7,-21.4 L1.7,-25.8 L2.9,-27.4 L5.8,-30.5 L6.1,-35.5 L3.7,-33.5 L0.9,-34.3 L-1.2,-34.3 L-4.8,-40.1 L-9.3,-36.7Z" fill="none" stroke="#558f22" stroke-width="1.09" stroke-linejoin="round"/><path d="M-32.6,-13.6 L-36.7,-8.9 L-34.8,-3.8 L-38.9,-2.1 L-36.0,1.6 L-35.9,7.8 L-33.4,10.4 L-32.1,15.7 L-29.5,19.4 L-26.8,18.2 L-24.8,19.3 L-20.7,19.4 L-17.8,19.4 L-15.1,16.6 L-15.7,12.4 L-18.6,8.6 L-22.5,12.7 L-24.1,7.8 L-27.0,2.6 L-23.9,1.1 L-20.2,-3.1 L-17.1,-0.9 L-15.2,-2.1 L-18.1,-7.5 L-21.0,-5.2 L-23.3,-7.8 L-28.9,-7.7 L-30.2,-13.9Z" fill="none" stroke="#558f22" stroke-width="1.09" stroke-linejoin="round"/><ellipse cx="2.0" cy="-40.0" rx="2.4" ry="1.2" transform="rotate(-20 2.0 -40.0)" fill="none" stroke="#558f22" stroke-width="1.09"/><ellipse cx="8.0" cy="-38.5" rx="2.4" ry="1.2" transform="rotate(10 8.0 -38.5)" fill="none" stroke="#558f22" stroke-width="1.09"/><ellipse cx="13.0" cy="-37.0" rx="2.4" ry="1.2" transform="rotate(30 13.0 -37.0)" fill="none" stroke="#558f22" stroke-width="1.09"/><ellipse cx="-37.0" cy="-12.0" rx="2.4" ry="1.2" transform="rotate(70 -37.0 -12.0)" fill="none" stroke="#558f22" stroke-width="1.09"/><ellipse cx="-39.0" cy="4.0" rx="2.4" ry="1.2" transform="rotate(80 -39.0 4.0)" fill="none" stroke="#558f22" stroke-width="1.09"/><path d="M-10.0,-11.0 L-8.0,-15.0 L-6.0,-13.0" fill="none" stroke="#558f22" stroke-width="1.09" stroke-linejoin="round"/><path d="M-15.0,-12.5 L-19.0,-17.0 L-17.0,-20.0 L-14.0,-16.0" fill="none" stroke="#558f22" stroke-width="1.09" stroke-linejoin="round"/><path d="M-20.0,-13.0 L-27.0,-14.0 L-26.0,-11.0 L-20.0,-11.0" fill="none" stroke="#558f22" stroke-width="1.09" stroke-linejoin="round"/><path d="M-20.0,-13.0 L-24.0,-17.0 L-21.0,-19.0" fill="none" stroke="#558f22" stroke-width="1.09" stroke-linejoin="round"/><path d="M7.0,-13.0 L10.0,-21.0 L12.0,-19.0 L9.0,-13.0" fill="none" stroke="#558f22" stroke-width="1.09" stroke-linejoin="round"/><path d="M8.0,-19.0 L6.0,-25.0 L8.0,-24.0" fill="none" stroke="#558f22" stroke-width="1.09" stroke-linejoin="round"/><path d="M13.0,0.0 L17.0,3.0 L19.0,1.0" fill="none" stroke="#558f22" stroke-width="1.09" stroke-linejoin="round"/><path d="M18.0,-2.5 L22.0,-4.0 L21.0,-1.0 L17.0,1.0" fill="none" stroke="#558f22" stroke-width="1.09" stroke-linejoin="round"/><path d="M13.0,0.0 L15.0,-6.0 L18.0,-7.0" fill="none" stroke="#558f22" stroke-width="1.09" stroke-linejoin="round"/><path d="M6.0,14.0 L4.0,22.0 L3.0,30.0 L6.0,31.0 L7.0,24.0" fill="none" stroke="#558f22" stroke-width="1.09" stroke-linejoin="round"/><path d="M7.0,20.0 L12.0,27.0 L15.0,30.0 L16.0,27.0 L11.0,21.0" fill="none" stroke="#558f22" stroke-width="1.09" stroke-linejoin="round"/><path d="M10.0,27.0 L9.0,32.0 L12.0,33.0" fill="none" stroke="#558f22" stroke-width="1.09" stroke-linejoin="round"/><path d="M-12.0,3.5 L-15.0,7.0 L-21.0,8.0 L-24.0,6.0 L-20.0,5.0" fill="none" stroke="#558f22" stroke-width="1.09" stroke-linejoin="round"/><path d="M-20.0,3.5 L-25.0,0.0 L-28.0,-1.0 L-27.0,2.0" fill="none" stroke="#558f22" stroke-width="1.09" stroke-linejoin="round"/><path d="M-27.0,3.0 L-31.0,5.0 L-30.0,8.0 L-26.0,7.0" fill="none" stroke="#558f22" stroke-width="1.09" stroke-linejoin="round"/><path d="M-5.0,14.0 L-8.0,19.0 L-6.0,22.0 L-4.0,18.0" fill="none" stroke="#558f22" stroke-width="1.09" stroke-linejoin="round"/><path d="M-8.0,1.0 L-9.0,-3.0 L-13.0,-4.0 L-12.0,-1.0" fill="none" stroke="#558f22" stroke-width="1.09" stroke-linejoin="round"/><path d="M-4.0,9.0 L-9.0,11.0 L-12.0,16.0 L-9.0,15.0" fill="none" stroke="#558f22" stroke-width="1.09" stroke-linejoin="round"/><path d="M4.0,10.0 L9.0,9.0 L12.0,12.0 L8.0,12.0" fill="none" stroke="#558f22" stroke-width="1.09" stroke-linejoin="round"/><path d="M4.0,-8.0 L1.0,-12.0 L-1.0,-11.0" fill="none" stroke="#558f22" stroke-width="1.09" stroke-linejoin="round"/><path d="M-3.2,-3.6 Q0,-5.4 3,-3.2 Q4.6,0.6 3,4.6 Q0,7 -2.8,4.8 Q-4.6,0.6 -3.2,-3.6Z" fill="#66aa2a"/><path d="M0.0,-2.0 L-5.0,-8.0" stroke="#66aa2a" stroke-width="2.80" stroke-linecap="round" fill="none"/><path d="M-5.0,-8.0 L-10.0,-11.0" stroke="#66aa2a" stroke-width="2.10" stroke-linecap="round" fill="none"/><path d="M-10.0,-11.0 L-15.0,-12.5" stroke="#66aa2a" stroke-width="1.40" stroke-linecap="round" fill="none"/><path d="M-15.0,-12.5 L-20.0,-13.0" stroke="#66aa2a" stroke-width="0.90" stroke-linecap="round" fill="none"/><path d="M1.0,-3.0 L4.0,-8.0" stroke="#66aa2a" stroke-width="2.40" stroke-linecap="round" fill="none"/><path d="M4.0,-8.0 L7.0,-13.0" stroke="#66aa2a" stroke-width="1.60" stroke-linecap="round" fill="none"/><path d="M7.0,-13.0 L8.0,-19.0" stroke="#66aa2a" stroke-width="1.00" stroke-linecap="round" fill="none"/><path d="M2.0,1.0 L8.0,1.5" stroke="#66aa2a" stroke-width="2.10" stroke-linecap="round" fill="none"/><path d="M8.0,1.5 L13.0,0.0" stroke="#66aa2a" stroke-width="1.30" stroke-linecap="round" fill="none"/><path d="M13.0,0.0 L18.0,-2.5" stroke="#66aa2a" stroke-width="0.90" stroke-linecap="round" fill="none"/><path d="M1.0,4.0 L4.0,10.0" stroke="#66aa2a" stroke-width="2.60" stroke-linecap="round" fill="none"/><path d="M4.0,10.0 L6.0,14.0" stroke="#66aa2a" stroke-width="1.80" stroke-linecap="round" fill="none"/><path d="M6.0,14.0 L7.0,20.0" stroke="#66aa2a" stroke-width="1.10" stroke-linecap="round" fill="none"/><path d="M7.0,20.0 L10.0,27.0" stroke="#66aa2a" stroke-width="0.80" stroke-linecap="round" fill="none"/><path d="M-2.0,2.0 L-8.0,1.0" stroke="#66aa2a" stroke-width="2.40" stroke-linecap="round" fill="none"/><path d="M-8.0,1.0 L-12.0,3.5" stroke="#66aa2a" stroke-width="1.90" stroke-linecap="round" fill="none"/><path d="M-12.0,3.5 L-20.0,3.5" stroke="#66aa2a" stroke-width="1.30" stroke-linecap="round" fill="none"/><path d="M-20.0,3.5 L-27.0,3.0" stroke="#66aa2a" stroke-width="0.90" stroke-linecap="round" fill="none"/><path d="M-1.0,4.0 L-4.0,9.0" stroke="#66aa2a" stroke-width="1.80" stroke-linecap="round" fill="none"/><path d="M-4.0,9.0 L-5.0,14.0" stroke="#66aa2a" stroke-width="1.00" stroke-linecap="round" fill="none"/></g><path d="M614.9,380.0 L613.8,381.4 L614.6,383.0 L614.7,384.5 L614.8,386.1 L614.7,387.6 L614.8,389.3 L613.4,390.4 L612.2,391.5 L610.3,392.3 L610.4,393.9 L609.6,395.1 L610.0,397.2 L608.1,397.6 L607.6,399.2 L606.3,400.0 L606.2,402.1 L604.5,402.5 L603.9,404.2 L602.1,404.4 L601.0,405.5 L598.7,404.3 L598.3,406.9 L596.1,405.5 L595.2,407.4 L593.5,406.7 L592.4,408.8 L590.6,407.3 L589.3,408.7 L587.8,408.0 L586.3,408.8 L584.8,409.3 L583.2,409.4 L581.9,407.6 L580.3,408.1 L578.8,407.9 L577.4,407.3 L576.5,405.4 L574.4,406.8 L573.5,405.2 L571.2,406.1 L571.3,403.1 L569.0,403.8 L567.9,402.7 L566.1,402.4 L565.6,400.7 L565.3,398.9 L564.8,397.4 L563.6,396.5 L563.5,394.8 L560.6,394.8 L561.4,392.7 L559.1,392.1 L560.3,390.0 L557.8,389.3 L558.9,387.3 L557.9,386.0 L557.5,384.6 L556.1,383.2 L558.7,381.4 L557.0,380.0 L558.1,378.5 L558.3,377.1 L559.1,375.7 L559.0,374.2 L559.9,372.9 L559.2,371.2 L559.7,369.8 L559.2,367.9 L561.4,367.3 L561.6,365.7 L562.6,364.6 L562.3,362.5 L564.8,362.6 L565.1,360.9 L567.0,360.7 L566.7,358.2 L568.8,358.3 L569.9,357.5 L571.5,357.2 L571.9,355.0 L573.4,354.6 L574.2,352.8 L576.3,354.1 L577.4,352.6 L578.8,352.1 L580.3,351.6 L582.0,352.7 L583.3,351.7 L584.8,351.3 L586.3,351.7 L587.8,352.1 L589.3,351.6 L590.7,352.4 L592.5,350.7 L593.9,351.5 L595.3,352.2 L596.3,353.9 L598.5,352.7 L598.9,355.2 L600.3,355.7 L602.0,355.9 L603.1,356.9 L604.2,357.9 L605.4,358.8 L606.6,359.7 L607.8,360.7 L607.7,362.6 L609.3,363.3 L610.3,364.4 L612.1,365.1 L612.5,366.7 L612.4,368.4 L612.9,369.8 L613.6,371.1 L613.2,372.8 L613.7,374.2 L613.3,375.7 L614.9,377.0 L615.1,378.5Z" fill="none" stroke="#558f22" stroke-width="0.8" stroke-linejoin="round"/><path d="M602.1,360.1 L603.6,362.3 L602.1,360.5 L604.3,362.8 L604.2,360.7" fill="none" stroke="#558f22" stroke-width="0.8"/><path d="M600.1,400.6 L602.0,401.1 L603.6,399.5 L605.0,398.2 L604.5,399.8" fill="none" stroke="#558f22" stroke-width="0.8"/><path d="M603.3,396.1 L602.0,395.6 L602.0,395.0 L600.2,393.8 L601.3,395.7" fill="none" stroke="#558f22" stroke-width="0.8"/><path d="M599.1,357.5 L600.3,355.2 L601.9,353.4 L602.4,353.6 L603.0,352.7" fill="none" stroke="#558f22" stroke-width="0.8"/><path d="M611.9,375.2 L611.6,376.0 L611.3,375.7 L609.0,376.3 L609.0,375.0" fill="none" stroke="#558f22" stroke-width="0.8"/><path d="M608.8,395.6 L608.6,394.0 L608.4,392.2 L606.7,391.8 L604.7,391.5" fill="none" stroke="#558f22" stroke-width="0.8"/><path d="M608.8,380.5 L609.4,378.5 L610.5,379.9 L610.6,377.7 L610.6,377.1" fill="none" stroke="#558f22" stroke-width="0.8"/><path d="M598.1,399.9 L599.8,402.3 L600.9,403.8 L599.4,406.1 L599.4,408.3" fill="none" stroke="#558f22" stroke-width="0.8"/><path d="M599.7,399.0 L601.1,401.1 L599.0,400.4 L600.2,398.8 L602.1,397.7" fill="none" stroke="#558f22" stroke-width="0.8"/><path d="M603.6,395.4 L603.6,397.4 L602.2,396.2 L602.3,395.4 L600.0,393.8" fill="none" stroke="#558f22" stroke-width="0.8"/><path d="M606.5,360.1 L607.4,362.0 L605.8,363.3 L603.9,363.5 L604.6,362.8" fill="none" stroke="#558f22" stroke-width="0.8"/><path d="M603.2,399.6 L603.6,401.4 L601.7,403.8 L602.3,403.3 L603.8,402.1" fill="none" stroke="#558f22" stroke-width="0.8"/><path d="M597.4,403.5 L596.8,404.8 L596.5,403.2 L597.7,401.1 L599.2,399.9" fill="none" stroke="#558f22" stroke-width="0.8"/><path d="M613.5,389.0 L613.9,389.8 L613.0,387.4 L610.8,385.7 L611.4,385.4" fill="none" stroke="#558f22" stroke-width="0.8"/><path d="M614.4,380.8 L612.6,379.5 L613.4,377.2 L611.0,376.5 L609.1,375.8" fill="none" stroke="#558f22" stroke-width="0.8"/><path d="M607.3,364.6 L607.7,363.1 L608.3,363.0 L606.6,365.1 L605.3,363.4" fill="none" stroke="#558f22" stroke-width="0.8"/><path d="M602.1,358.8 L603.9,360.2 L603.4,359.1 L601.1,359.8 L601.4,359.0" fill="none" stroke="#558f22" stroke-width="0.8"/><path d="M610.0,388.3 L612.1,389.4 L610.9,391.3 L608.7,391.5 L608.3,390.2" fill="none" stroke="#558f22" stroke-width="0.8"/><path d="M600.7,356.8 L598.4,357.0 L600.5,355.3 L599.0,355.8 L599.1,356.5" fill="none" stroke="#558f22" stroke-width="0.8"/><path d="M603.8,395.4 L602.9,394.5 L600.8,396.3 L602.1,397.4 L599.8,399.0" fill="none" stroke="#558f22" stroke-width="0.8"/><path d="M607.7,393.5 L608.8,393.3 L607.5,391.4 L606.2,389.2 L605.4,390.4" fill="none" stroke="#558f22" stroke-width="0.8"/><path d="M611.3,392.1 L612.3,390.9 L612.6,390.6 L614.0,390.7 L612.9,391.4" fill="none" stroke="#558f22" stroke-width="0.8"/><path d="M597.7,400.7 L599.5,398.4 L598.3,397.1 L599.5,399.3 L600.7,398.4" fill="none" stroke="#558f22" stroke-width="0.8"/><path d="M601.9,398.7 L600.7,400.7 L601.3,401.6 L602.1,403.9 L602.0,405.5" fill="none" stroke="#558f22" stroke-width="0.8"/><path d="M611.3,392.2 L611.0,393.3 L611.4,392.4 L610.0,393.0 L608.0,394.9" fill="none" stroke="#558f22" stroke-width="0.8"/><path d="M601.6,363.7 L599.7,365.7 L599.0,364.0 L596.7,361.8 L597.6,362.5" fill="none" stroke="#558f22" stroke-width="0.8"/><path d="M610.6,391.8 L608.5,392.3 L607.9,393.8 L609.4,395.7 L607.3,397.4" fill="none" stroke="#558f22" stroke-width="0.8"/><path d="M602.8,403.2 L600.9,401.8 L599.0,399.5 L600.7,401.0 L601.3,402.6" fill="none" stroke="#558f22" stroke-width="0.8"/><path d="M609.3,387.2 L607.4,385.2 L608.6,383.8 L607.7,383.5 L605.4,382.3" fill="none" stroke="#558f22" stroke-width="0.8"/><path d="M609.9,367.1 L609.3,366.2 L611.5,366.2 L613.2,366.8 L611.0,366.4" fill="none" stroke="#558f22" stroke-width="0.8"/><path d="M613.3,376.0 L612.6,377.0 L612.8,375.6 L614.5,373.7 L616.0,372.1" fill="none" stroke="#558f22" stroke-width="0.8"/><path d="M596.0,358.5 L597.2,360.8 L594.9,360.8 L594.8,362.2 L593.3,362.2" fill="none" stroke="#558f22" stroke-width="0.8"/><path d="M612.3,370.5 L611.1,372.6 L610.1,371.2 L611.1,371.2 L609.2,371.9" fill="none" stroke="#558f22" stroke-width="0.8"/><path d="M601.9,357.5 L602.9,358.9 L603.5,358.2 L603.0,357.7 L604.9,355.7" fill="none" stroke="#558f22" stroke-width="0.8"/><path d="M600.3,397.4 L598.9,396.3 L600.8,396.3 L600.3,398.1 L599.0,398.0" fill="none" stroke="#558f22" stroke-width="0.8"/><path d="M613.4,382.0 L614.6,382.7 L613.9,381.8 L612.2,383.5 L613.0,384.6" fill="none" stroke="#558f22" stroke-width="0.8"/><path d="M604.5,362.7 L605.8,363.1 L604.0,362.9 L605.9,361.6 L604.4,360.7" fill="none" stroke="#558f22" stroke-width="0.8"/><path d="M611.1,392.5 L609.4,390.9 L608.2,390.0 L608.3,388.4 L607.5,386.9" fill="none" stroke="#558f22" stroke-width="0.8"/><path d="M598.7,404.0 L596.8,406.2 L594.9,405.6 L597.2,407.1 L598.3,406.7" fill="none" stroke="#558f22" stroke-width="0.8"/><path d="M606.5,363.0 L604.6,361.6 L604.1,359.4 L603.6,360.8 L604.5,360.8" fill="none" stroke="#558f22" stroke-width="0.8"/><path d="M610.4,387.6 L608.7,388.1 L608.2,389.2 L610.2,388.9 L610.5,390.1" fill="none" stroke="#558f22" stroke-width="0.8"/><path d="M609.6,375.7 L610.7,377.5 L612.0,378.5 L613.7,379.4 L614.4,379.1" fill="none" stroke="#558f22" stroke-width="0.8"/><path d="M610.2,369.0 L608.3,368.6 L609.7,369.7 L610.3,368.5 L609.9,368.2" fill="none" stroke="#558f22" stroke-width="0.8"/><path d="M610.2,386.9 L611.1,388.9 L609.6,389.7 L610.9,389.1 L610.8,391.4" fill="none" stroke="#558f22" stroke-width="0.8"/><path d="M598.9,357.5 L597.2,358.8 L599.3,358.9 L597.4,359.3 L597.6,360.3" fill="none" stroke="#558f22" stroke-width="0.8"/><path d="M612.7,380.7 L614.3,380.8 L613.9,383.0 L612.5,383.9 L611.9,385.1" fill="none" stroke="#558f22" stroke-width="0.8"/><path d="M597.7,407.0 L597.0,405.0 L596.0,404.6 L593.8,404.2 L593.5,405.1" fill="none" stroke="#558f22" stroke-width="0.8"/><path d="M590.5,404.6 L589.3,405.7 L591.2,405.8 L590.0,407.2 L589.5,405.9" fill="none" stroke="#558f22" stroke-width="0.8"/><path d="M597.0,405.9 L598.4,406.5 L598.3,406.8 L597.0,408.9 L596.4,409.5" fill="none" stroke="#558f22" stroke-width="0.8"/><path d="M578.0,407.1 L577.8,406.1 L578.1,404.4 L579.6,403.8 L581.1,402.7" fill="none" stroke="#558f22" stroke-width="0.8"/><path d="M589.9,404.7 L589.6,403.2 L587.3,404.2 L586.3,403.1 L585.4,403.0" fill="none" stroke="#558f22" stroke-width="0.8"/><path d="M588.8,407.1 L589.5,406.5 L591.5,408.1 L589.5,409.6 L591.3,410.8" fill="none" stroke="#558f22" stroke-width="0.8"/><path d="M596.8,406.4 L597.4,404.2 L595.2,406.2 L595.9,405.1 L594.1,403.5" fill="none" stroke="#558f22" stroke-width="0.8"/><path d="M594.2,406.9 L593.6,405.3 L595.4,406.7 L593.9,408.4 L594.4,409.7" fill="none" stroke="#558f22" stroke-width="0.8"/><path d="M582.1,408.5 L583.4,410.0 L582.0,410.8 L582.1,411.9 L581.9,413.7" fill="none" stroke="#558f22" stroke-width="0.8"/><path d="M585.4,405.0 L584.2,403.3 L584.2,401.4 L584.1,399.8 L584.0,399.8" fill="none" stroke="#558f22" stroke-width="0.8"/><path d="M585.8,408.6 L583.5,410.1 L583.4,410.4 L584.1,411.9 L583.6,411.6" fill="none" stroke="#558f22" stroke-width="0.8"/><path d="M576.1,401.6 L576.8,402.2 L574.6,402.7 L575.5,404.6 L574.7,406.8" fill="none" stroke="#558f22" stroke-width="0.8"/><path d="M586.6,406.3 L588.4,404.2 L589.3,404.8 L588.6,406.4 L588.0,406.3" fill="none" stroke="#558f22" stroke-width="0.8"/><path d="M586.2,408.0 L584.9,407.7 L584.5,408.0 L586.0,407.0 L587.5,406.6" fill="none" stroke="#558f22" stroke-width="0.8"/><path d="M586.7,405.0 L586.8,407.2 L587.5,408.5 L586.7,407.7 L585.8,408.0" fill="none" stroke="#558f22" stroke-width="0.8"/><path d="M583.1,407.9 L581.0,408.9 L582.8,409.1 L580.7,408.2 L578.5,406.8" fill="none" stroke="#558f22" stroke-width="0.8"/><path d="M596.2,383.9 L597.3,385.0 L599.7,386.6 L600.9,387.7 L603.2,388.9 L604.2,389.9" fill="none" stroke="#66aa2a" stroke-width="0.9"/><path d="M582.7,392.6 L583.7,392.6 L586.1,393.3 L587.1,393.1 L588.6,392.6 L589.7,394.6" fill="none" stroke="#66aa2a" stroke-width="0.9"/><path d="M592.9,394.4 L593.9,394.9 L596.5,396.4 L597.4,396.6 L599.2,397.2 L599.9,397.8" fill="none" stroke="#66aa2a" stroke-width="0.9"/><path d="M556.9,488.5 L556.7,490.0 L555.9,491.5 L555.9,493.0 L555.5,494.4 L554.3,495.7 L555.9,497.7 L553.9,498.6 L554.6,500.6 L552.2,501.1 L551.5,502.3 L550.6,503.5 L551.0,505.6 L550.0,506.7 L550.0,508.7 L547.6,508.6 L547.1,510.3 L545.0,510.1 L545.0,512.6 L542.6,511.8 L541.7,513.1 L539.8,512.6 L538.8,513.8 L537.6,514.8 L536.1,515.0 L535.0,516.3 L533.3,516.0 L532.0,517.1 L530.5,516.9 L528.9,516.1 L527.5,518.5 L526.0,516.5 L524.4,518.2 L523.2,515.8 L521.7,515.9 L520.1,516.0 L518.5,516.2 L517.3,515.1 L515.6,515.2 L515.2,512.7 L512.8,513.9 L511.8,512.6 L510.2,512.3 L509.0,511.4 L508.1,510.1 L506.7,509.3 L505.4,508.4 L506.4,505.6 L505.0,504.9 L503.9,503.8 L502.1,503.2 L503.5,500.7 L501.5,500.1 L500.8,498.7 L500.3,497.3 L499.3,496.1 L498.7,494.6 L500.1,492.8 L498.5,491.6 L499.0,490.0 L498.5,488.5 L499.2,487.0 L499.6,485.6 L499.5,484.1 L499.7,482.6 L500.3,481.2 L499.7,479.5 L501.3,478.4 L500.9,476.7 L501.5,475.3 L501.1,473.3 L503.1,472.6 L503.6,471.2 L505.9,471.0 L506.6,469.7 L507.1,468.1 L508.0,466.9 L509.6,466.4 L510.8,465.5 L512.1,464.8 L512.5,462.5 L514.3,462.6 L515.4,461.4 L517.4,462.2 L518.4,460.6 L519.9,460.2 L521.5,460.1 L523.0,460.4 L524.5,459.6 L526.0,460.0 L527.5,459.2 L528.9,461.2 L530.4,460.8 L531.8,461.2 L533.5,460.1 L534.9,460.8 L536.8,459.8 L538.0,461.1 L539.1,462.4 L540.7,462.6 L542.4,462.7 L543.1,464.4 L544.5,465.1 L544.7,467.3 L547.2,466.7 L547.6,468.4 L549.3,468.9 L550.1,470.2 L551.0,471.4 L550.8,473.4 L553.2,473.7 L553.5,475.3 L553.8,476.8 L554.3,478.2 L555.9,479.3 L553.9,481.4 L555.8,482.5 L555.3,484.1 L556.0,485.5 L554.9,487.1Z" fill="none" stroke="#558f22" stroke-width="0.8" stroke-linejoin="round"/><path d="M550.4,474.0 L551.8,473.8 L549.9,475.3 L551.2,474.0 L551.6,475.9" fill="none" stroke="#558f22" stroke-width="0.8"/><path d="M543.7,508.4 L543.6,508.8 L542.1,507.3 L540.6,508.3 L539.9,508.6" fill="none" stroke="#558f22" stroke-width="0.8"/><path d="M552.5,482.8 L550.8,480.6 L553.2,480.0 L551.3,480.7 L552.7,479.0" fill="none" stroke="#558f22" stroke-width="0.8"/><path d="M551.4,493.9 L551.5,491.6 L549.2,494.0 L551.0,493.9 L551.3,492.8" fill="none" stroke="#558f22" stroke-width="0.8"/><path d="M547.5,503.5 L549.7,504.8 L551.2,507.0 L550.0,504.8 L548.6,503.2" fill="none" stroke="#558f22" stroke-width="0.8"/><path d="M540.5,470.1 L540.7,471.8 L540.5,474.0 L542.5,471.9 L543.0,471.4" fill="none" stroke="#558f22" stroke-width="0.8"/><path d="M545.8,466.6 L544.6,466.9 L545.3,469.1 L546.1,468.6 L545.9,467.0" fill="none" stroke="#558f22" stroke-width="0.8"/><path d="M541.3,513.7 L539.9,511.5 L538.8,510.8 L540.7,512.7 L542.3,510.6" fill="none" stroke="#558f22" stroke-width="0.8"/><path d="M548.8,505.0 L549.5,507.3 L547.3,505.6 L548.6,507.7 L549.4,506.7" fill="none" stroke="#558f22" stroke-width="0.8"/><path d="M554.1,494.2 L552.2,493.3 L551.0,491.5 L551.0,489.9 L549.7,488.2" fill="none" stroke="#558f22" stroke-width="0.8"/><path d="M547.9,497.4 L549.0,495.9 L546.8,497.9 L545.4,500.0 L547.2,501.9" fill="none" stroke="#558f22" stroke-width="0.8"/><path d="M544.5,470.0 L542.6,472.0 L544.2,472.6 L544.0,471.9 L545.5,471.8" fill="none" stroke="#558f22" stroke-width="0.8"/><path d="M549.6,495.2 L548.3,493.1 L549.3,493.4 L547.6,495.1 L546.5,494.7" fill="none" stroke="#558f22" stroke-width="0.8"/><path d="M544.4,471.4 L546.0,470.6 L544.4,470.6 L543.5,472.5 L541.7,474.8" fill="none" stroke="#558f22" stroke-width="0.8"/><path d="M542.2,464.6 L543.0,463.2 L542.9,462.1 L541.8,460.7 L541.1,463.1" fill="none" stroke="#558f22" stroke-width="0.8"/><path d="M539.2,514.3 L537.2,513.3 L539.1,511.2 L540.2,510.2 L542.5,507.8" fill="none" stroke="#558f22" stroke-width="0.8"/><path d="M546.1,504.4 L544.4,502.0 L546.0,502.1 L544.5,501.8 L546.4,500.4" fill="none" stroke="#558f22" stroke-width="0.8"/><path d="M550.3,492.3 L548.8,493.6 L549.8,492.1 L547.8,490.1 L548.3,490.1" fill="none" stroke="#558f22" stroke-width="0.8"/><path d="M547.9,476.8 L548.5,477.8 L550.0,478.2 L548.6,476.1 L549.7,475.7" fill="none" stroke="#558f22" stroke-width="0.8"/><path d="M547.2,499.5 L548.7,498.7 L550.3,500.5 L550.3,498.1 L552.3,498.0" fill="none" stroke="#558f22" stroke-width="0.8"/><path d="M543.2,506.6 L541.7,508.2 L541.1,506.6 L540.4,507.0 L538.1,507.1" fill="none" stroke="#558f22" stroke-width="0.8"/><path d="M552.9,485.3 L551.1,486.3 L552.6,488.1 L551.7,489.1 L551.2,490.3" fill="none" stroke="#558f22" stroke-width="0.8"/><path d="M542.4,464.8 L544.6,464.8 L544.6,465.0 L544.8,462.7 L547.1,461.3" fill="none" stroke="#558f22" stroke-width="0.8"/><path d="M544.5,473.2 L543.3,474.8 L541.1,472.8 L542.0,471.4 L539.7,471.8" fill="none" stroke="#558f22" stroke-width="0.8"/><path d="M552.8,493.0 L553.7,491.1 L555.5,492.1 L553.3,490.3 L553.3,490.3" fill="none" stroke="#558f22" stroke-width="0.8"/><path d="M547.6,477.3 L547.2,475.6 L547.6,477.3 L545.9,477.7 L547.1,476.1" fill="none" stroke="#558f22" stroke-width="0.8"/><path d="M548.3,507.8 L547.7,507.5 L549.4,507.6 L548.9,509.7 L550.2,508.9" fill="none" stroke="#558f22" stroke-width="0.8"/><path d="M547.7,474.8 L547.4,477.1 L548.8,479.1 L550.4,480.7 L548.2,480.8" fill="none" stroke="#558f22" stroke-width="0.8"/><path d="M541.5,513.1 L540.3,512.8 L541.0,512.1 L541.1,510.1 L540.8,510.1" fill="none" stroke="#558f22" stroke-width="0.8"/><path d="M537.9,467.9 L540.2,469.2 L542.3,469.8 L543.8,471.7 L545.6,469.5" fill="none" stroke="#558f22" stroke-width="0.8"/><path d="M550.2,496.2 L551.1,495.1 L551.3,497.1 L551.8,495.9 L551.9,495.6" fill="none" stroke="#558f22" stroke-width="0.8"/><path d="M539.8,509.2 L538.8,510.0 L537.0,510.4 L539.2,510.5 L538.1,510.3" fill="none" stroke="#558f22" stroke-width="0.8"/><path d="M550.6,490.3 L548.8,488.5 L547.8,488.1 L546.8,486.9 L544.8,487.1" fill="none" stroke="#558f22" stroke-width="0.8"/><path d="M546.1,507.0 L546.5,507.7 L545.0,508.7 L544.8,508.9 L545.4,508.8" fill="none" stroke="#558f22" stroke-width="0.8"/><path d="M549.1,478.5 L547.7,478.5 L547.2,478.9 L544.8,478.2 L546.6,477.0" fill="none" stroke="#558f22" stroke-width="0.8"/><path d="M552.7,491.8 L551.7,494.1 L550.7,495.5 L549.1,493.4 L550.9,493.1" fill="none" stroke="#558f22" stroke-width="0.8"/><path d="M540.7,467.6 L540.4,468.7 L538.6,467.4 L540.8,468.5 L539.1,467.7" fill="none" stroke="#558f22" stroke-width="0.8"/><path d="M552.6,479.6 L553.2,481.3 L554.7,481.4 L555.9,482.6 L557.1,482.4" fill="none" stroke="#558f22" stroke-width="0.8"/><path d="M548.8,504.9 L550.8,503.1 L552.6,500.7 L553.9,501.1 L553.8,503.3" fill="none" stroke="#558f22" stroke-width="0.8"/><path d="M552.1,492.6 L553.5,494.4 L554.0,493.8 L553.8,493.6 L554.8,492.6" fill="none" stroke="#558f22" stroke-width="0.8"/><path d="M552.6,482.1 L552.0,481.2 L553.4,482.9 L553.4,482.6 L551.9,481.7" fill="none" stroke="#558f22" stroke-width="0.8"/><path d="M545.3,469.6 L545.7,467.6 L547.7,466.7 L549.4,468.4 L551.6,466.9" fill="none" stroke="#558f22" stroke-width="0.8"/><path d="M555.3,483.8 L553.0,481.6 L553.3,481.6 L555.3,482.9 L555.5,485.3" fill="none" stroke="#558f22" stroke-width="0.8"/><path d="M553.1,489.5 L554.0,489.0 L553.3,489.5 L552.6,491.6 L553.4,491.7" fill="none" stroke="#558f22" stroke-width="0.8"/><path d="M542.4,468.8 L541.9,469.1 L542.3,471.0 L544.5,470.9 L544.2,471.5" fill="none" stroke="#558f22" stroke-width="0.8"/><path d="M537.7,510.7 L537.8,512.3 L536.3,511.4 L538.6,512.9 L538.6,511.1" fill="none" stroke="#558f22" stroke-width="0.8"/><path d="M517.4,514.1 L518.9,516.3 L520.6,516.0 L519.1,515.0 L519.1,515.1" fill="none" stroke="#558f22" stroke-width="0.8"/><path d="M535.5,511.7 L536.1,512.1 L535.4,514.3 L536.0,512.3 L535.6,513.6" fill="none" stroke="#558f22" stroke-width="0.8"/><path d="M533.4,515.4 L531.1,514.5 L532.7,514.9 L533.4,513.6 L533.4,513.8" fill="none" stroke="#558f22" stroke-width="0.8"/><path d="M534.4,514.9 L534.5,517.1 L534.9,516.7 L533.1,515.2 L534.3,513.4" fill="none" stroke="#558f22" stroke-width="0.8"/><path d="M537.5,510.8 L537.6,512.2 L538.1,513.6 L536.1,511.4 L537.3,510.6" fill="none" stroke="#558f22" stroke-width="0.8"/><path d="M522.6,513.5 L521.1,512.5 L519.3,514.3 L519.6,513.6 L519.4,513.1" fill="none" stroke="#558f22" stroke-width="0.8"/><path d="M540.4,514.2 L540.8,516.2 L540.5,516.8 L539.4,514.7 L541.3,516.3" fill="none" stroke="#558f22" stroke-width="0.8"/><path d="M533.4,516.7 L534.8,515.8 L535.3,517.9 L535.3,519.9 L534.1,519.4" fill="none" stroke="#558f22" stroke-width="0.8"/><path d="M522.6,512.7 L521.8,514.4 L521.7,515.8 L520.6,514.3 L519.9,512.9" fill="none" stroke="#558f22" stroke-width="0.8"/><path d="M516.5,511.1 L516.8,509.4 L517.0,508.9 L516.5,506.9 L514.8,508.4" fill="none" stroke="#558f22" stroke-width="0.8"/><path d="M531.7,513.0 L530.3,512.0 L529.1,509.9 L529.9,509.2 L528.3,510.2" fill="none" stroke="#558f22" stroke-width="0.8"/><path d="M537.9,511.3 L539.4,509.6 L539.1,511.1 L540.5,509.6 L539.9,510.6" fill="none" stroke="#558f22" stroke-width="0.8"/><path d="M531.7,517.3 L530.4,519.4 L530.4,518.2 L530.2,516.5 L531.1,515.4" fill="none" stroke="#558f22" stroke-width="0.8"/><path d="M517.5,513.5 L516.9,512.4 L517.4,511.1 L519.1,509.4 L519.2,509.6" fill="none" stroke="#558f22" stroke-width="0.8"/><path d="M534.4,515.7 L533.9,516.4 L534.2,515.5 L533.7,513.7 L532.3,515.2" fill="none" stroke="#558f22" stroke-width="0.8"/><path d="M532.9,515.3 L531.2,515.6 L530.5,515.6 L529.6,513.7 L528.8,512.4" fill="none" stroke="#558f22" stroke-width="0.8"/><path d="M537.4,492.4 L538.0,493.8 L539.7,494.3 L540.8,495.9 L543.6,497.7 L544.2,497.9" fill="none" stroke="#66aa2a" stroke-width="0.9"/><path d="M523.9,501.1 L524.4,502.4 L526.8,502.8 L527.6,504.0 L530.0,504.2 L531.1,504.6" fill="none" stroke="#66aa2a" stroke-width="0.9"/><path d="M534.1,502.9 L535.0,502.9 L536.4,504.8 L537.4,506.2 L538.7,505.7 L539.3,505.7" fill="none" stroke="#66aa2a" stroke-width="0.9"/><path d="M665.1,552.4 L664.7,553.4 L664.9,554.4 L664.6,555.3 L665.4,556.5 L663.9,557.2 L665.0,558.6 L663.6,559.2 L663.8,560.3 L662.2,560.7 L662.5,561.9 L661.8,562.6 L661.4,563.6 L660.1,563.8 L660.8,565.7 L659.7,566.1 L659.0,566.8 L657.6,566.8 L657.8,568.7 L656.4,568.4 L655.4,568.7 L654.3,568.7 L653.6,569.4 L652.8,570.0 L651.8,570.2 L651.0,570.9 L650.1,571.6 L648.9,570.5 L648.1,572.1 L647.0,571.3 L646.0,572.4 L645.0,571.8 L644.0,571.6 L643.1,570.5 L641.9,571.9 L641.2,570.3 L639.9,571.1 L639.3,569.9 L638.1,570.2 L637.3,569.4 L636.2,569.4 L635.7,568.2 L634.8,567.8 L633.8,567.4 L632.9,567.0 L632.6,565.8 L631.1,565.8 L631.8,563.9 L630.2,563.9 L631.0,562.2 L629.2,562.1 L629.1,561.0 L628.7,560.1 L628.4,559.1 L626.9,558.6 L627.5,557.4 L626.7,556.5 L627.5,555.3 L627.1,554.4 L627.3,553.4 L626.7,552.4 L627.8,551.4 L627.2,550.4 L628.2,549.6 L627.0,548.4 L627.8,547.5 L628.0,546.5 L628.7,545.8 L628.1,544.4 L629.1,543.8 L628.4,542.3 L630.2,542.1 L630.4,541.1 L631.0,540.2 L632.0,539.8 L632.8,539.2 L633.4,538.4 L634.1,537.7 L634.7,536.8 L635.6,536.5 L636.5,536.0 L637.3,535.3 L638.0,534.3 L639.2,534.6 L639.8,533.3 L641.0,533.6 L642.1,533.8 L643.1,534.2 L644.0,533.5 L645.1,534.3 L646.0,533.9 L647.0,534.2 L648.0,533.7 L649.0,533.6 L650.0,533.4 L650.8,534.6 L652.0,533.9 L652.8,534.6 L653.9,534.6 L654.4,535.9 L655.4,536.1 L655.8,537.3 L657.7,536.4 L657.9,537.8 L658.4,538.6 L659.3,539.1 L660.8,539.0 L660.7,540.5 L661.4,541.2 L662.0,542.0 L663.0,542.6 L662.6,543.9 L663.9,544.4 L663.0,545.9 L664.9,546.3 L664.1,547.5 L664.9,548.4 L664.8,549.4 L665.3,550.4 L664.3,551.4Z" fill="none" stroke="#558f22" stroke-width="0.8" stroke-linejoin="round"/><path d="M659.6,545.2 L658.1,546.1 L659.2,545.5 L658.2,545.9 L659.3,547.3" fill="none" stroke="#558f22" stroke-width="0.8"/><path d="M660.4,541.2 L661.4,541.9 L660.9,540.9 L661.9,540.4 L661.5,540.5" fill="none" stroke="#558f22" stroke-width="0.8"/><path d="M664.1,548.7 L663.3,547.3 L663.5,547.7 L664.5,548.3 L665.8,549.7" fill="none" stroke="#558f22" stroke-width="0.8"/><path d="M662.9,553.9 L661.8,553.2 L662.1,551.9 L662.7,550.8 L662.5,552.3" fill="none" stroke="#558f22" stroke-width="0.8"/><path d="M656.0,541.2 L655.8,540.2 L656.5,538.6 L657.6,539.8 L658.5,539.5" fill="none" stroke="#558f22" stroke-width="0.8"/><path d="M662.3,545.5 L662.4,545.3 L661.9,545.1 L662.4,546.1 L663.7,545.0" fill="none" stroke="#558f22" stroke-width="0.8"/><path d="M661.6,546.3 L661.8,545.9 L660.8,544.5 L660.3,544.4 L661.8,545.7" fill="none" stroke="#558f22" stroke-width="0.8"/><path d="M657.3,567.8 L658.7,568.2 L659.7,566.8 L660.3,567.1 L659.6,567.4" fill="none" stroke="#558f22" stroke-width="0.8"/><path d="M653.0,567.8 L653.5,567.1 L653.0,568.4 L651.5,567.4 L652.1,567.2" fill="none" stroke="#558f22" stroke-width="0.8"/><path d="M657.6,539.1 L657.2,539.3 L657.0,539.4 L657.2,539.1 L655.9,538.1" fill="none" stroke="#558f22" stroke-width="0.8"/><path d="M655.3,566.9 L654.1,568.0 L653.3,566.7 L653.4,565.9 L653.4,566.1" fill="none" stroke="#558f22" stroke-width="0.8"/><path d="M661.0,543.7 L659.7,543.7 L660.0,542.4 L659.7,541.0 L659.5,542.2" fill="none" stroke="#558f22" stroke-width="0.8"/><path d="M663.5,556.3 L664.3,555.0 L665.9,555.7 L664.6,556.8 L664.3,555.7" fill="none" stroke="#558f22" stroke-width="0.8"/><path d="M652.9,568.2 L653.8,567.1 L654.7,565.6 L653.9,565.2 L652.3,565.5" fill="none" stroke="#558f22" stroke-width="0.8"/><path d="M659.7,543.8 L660.3,543.6 L661.6,544.0 L662.8,544.2 L664.1,545.4" fill="none" stroke="#558f22" stroke-width="0.8"/><path d="M660.2,541.3 L659.7,542.1 L660.3,543.1 L659.1,542.7 L659.9,544.2" fill="none" stroke="#558f22" stroke-width="0.8"/><path d="M658.3,561.0 L658.6,559.7 L658.8,560.7 L657.5,562.0 L658.1,561.3" fill="none" stroke="#558f22" stroke-width="0.8"/><path d="M659.8,542.9 L660.9,543.1 L659.6,541.6 L658.4,542.5 L657.4,542.7" fill="none" stroke="#558f22" stroke-width="0.8"/><path d="M662.5,545.7 L662.2,544.6 L663.4,544.7 L664.0,545.7 L665.4,544.2" fill="none" stroke="#558f22" stroke-width="0.8"/><path d="M660.9,548.4 L660.9,549.6 L661.9,548.1 L660.9,549.1 L661.5,548.8" fill="none" stroke="#558f22" stroke-width="0.8"/><path d="M661.5,553.1 L662.6,552.7 L663.8,553.1 L662.4,552.6 L661.5,553.8" fill="none" stroke="#558f22" stroke-width="0.8"/><path d="M660.3,556.9 L659.2,556.5 L659.1,556.7 L658.8,556.2 L657.2,556.5" fill="none" stroke="#558f22" stroke-width="0.8"/><path d="M660.3,548.3 L660.2,549.8 L658.7,548.7 L659.3,547.9 L658.5,547.9" fill="none" stroke="#558f22" stroke-width="0.8"/><path d="M661.6,544.9 L661.7,546.4 L663.3,544.9 L663.5,545.8 L664.7,546.6" fill="none" stroke="#558f22" stroke-width="0.8"/><path d="M662.2,559.4 L661.7,558.7 L662.7,559.8 L664.1,560.4 L663.4,561.3" fill="none" stroke="#558f22" stroke-width="0.8"/><path d="M659.6,562.7 L660.0,562.2 L660.2,561.9 L658.7,561.4 L658.2,563.0" fill="none" stroke="#558f22" stroke-width="0.8"/><path d="M662.4,553.3 L661.6,552.5 L661.1,551.3 L659.5,552.5 L659.4,552.3" fill="none" stroke="#558f22" stroke-width="0.8"/><path d="M661.6,556.5 L660.5,555.1 L659.9,554.5 L660.6,554.7 L662.0,554.2" fill="none" stroke="#558f22" stroke-width="0.8"/><path d="M654.4,567.6 L653.0,566.6 L653.3,568.2 L652.8,569.0 L652.6,570.2" fill="none" stroke="#558f22" stroke-width="0.8"/><path d="M656.6,539.2 L657.9,538.5 L657.1,537.0 L656.0,536.2 L656.7,535.3" fill="none" stroke="#558f22" stroke-width="0.8"/><path d="M661.5,550.4 L661.9,551.5 L662.4,550.5 L663.1,552.0 L663.4,550.7" fill="none" stroke="#558f22" stroke-width="0.8"/><path d="M658.8,565.9 L658.3,564.8 L657.3,564.9 L658.5,565.3 L659.9,564.4" fill="none" stroke="#558f22" stroke-width="0.8"/><path d="M663.3,547.1 L663.8,546.8 L664.3,546.3 L662.9,546.0 L661.5,546.4" fill="none" stroke="#558f22" stroke-width="0.8"/><path d="M662.3,547.7 L662.6,546.9 L662.5,545.4 L663.9,545.6 L665.4,544.1" fill="none" stroke="#558f22" stroke-width="0.8"/><path d="M662.8,558.8 L662.3,557.5 L661.2,556.3 L662.0,555.0 L663.0,554.8" fill="none" stroke="#558f22" stroke-width="0.8"/><path d="M663.1,555.7 L663.3,556.2 L663.6,555.6 L664.4,554.9 L665.0,555.7" fill="none" stroke="#558f22" stroke-width="0.8"/><path d="M658.0,563.2 L658.9,564.8 L658.7,564.1 L658.8,565.5 L657.6,563.9" fill="none" stroke="#558f22" stroke-width="0.8"/><path d="M663.7,553.2 L664.5,552.7 L666.1,551.9 L666.9,550.6 L665.4,549.4" fill="none" stroke="#558f22" stroke-width="0.8"/><path d="M656.4,539.0 L656.6,537.9 L658.0,537.5 L656.9,536.5 L657.6,537.8" fill="none" stroke="#558f22" stroke-width="0.8"/><path d="M657.6,543.0 L658.5,542.2 L660.1,542.2 L660.5,541.7 L661.5,541.6" fill="none" stroke="#558f22" stroke-width="0.8"/><path d="M663.9,546.8 L662.7,547.5 L661.3,548.0 L660.9,549.1 L659.5,549.3" fill="none" stroke="#558f22" stroke-width="0.8"/><path d="M664.7,550.4 L666.2,550.8 L665.3,550.0 L664.5,549.8 L663.7,548.8" fill="none" stroke="#558f22" stroke-width="0.8"/><path d="M659.5,563.7 L658.9,565.3 L658.0,565.5 L656.9,566.7 L658.1,565.9" fill="none" stroke="#558f22" stroke-width="0.8"/><path d="M660.3,564.0 L659.6,563.4 L659.6,564.7 L658.5,565.3 L658.8,565.1" fill="none" stroke="#558f22" stroke-width="0.8"/><path d="M663.9,557.6 L663.0,558.8 L662.6,559.7 L663.7,558.7 L664.9,560.3" fill="none" stroke="#558f22" stroke-width="0.8"/><path d="M659.9,547.1 L658.7,548.6 L657.1,549.9 L656.0,550.7 L654.7,549.6" fill="none" stroke="#558f22" stroke-width="0.8"/><path d="M641.9,567.8 L641.4,569.1 L642.0,570.2 L643.5,568.8 L642.7,569.7" fill="none" stroke="#558f22" stroke-width="0.8"/><path d="M641.8,567.6 L641.8,566.8 L641.6,565.6 L640.2,567.1 L639.6,568.2" fill="none" stroke="#558f22" stroke-width="0.8"/><path d="M651.2,569.2 L650.1,568.9 L649.1,569.5 L648.1,570.2 L648.1,569.1" fill="none" stroke="#558f22" stroke-width="0.8"/><path d="M647.2,569.9 L648.4,569.5 L647.6,570.9 L648.7,571.6 L648.1,570.6" fill="none" stroke="#558f22" stroke-width="0.8"/><path d="M648.5,568.1 L647.1,568.1 L646.8,568.3 L646.4,566.8 L647.0,567.3" fill="none" stroke="#558f22" stroke-width="0.8"/><path d="M643.8,570.1 L644.4,571.5 L645.5,572.2 L645.2,571.6 L645.0,573.0" fill="none" stroke="#558f22" stroke-width="0.8"/><path d="M646.6,569.5 L646.3,568.5 L647.8,567.0 L648.1,568.3 L647.4,568.6" fill="none" stroke="#558f22" stroke-width="0.8"/><path d="M646.7,568.9 L645.8,567.8 L646.9,568.6 L648.1,567.3 L648.7,566.8" fill="none" stroke="#558f22" stroke-width="0.8"/><path d="M642.0,569.7 L641.5,571.2 L640.0,571.9 L641.0,571.9 L641.3,573.4" fill="none" stroke="#558f22" stroke-width="0.8"/><path d="M649.4,570.2 L650.1,569.8 L650.7,569.5 L650.8,569.9 L651.3,569.3" fill="none" stroke="#558f22" stroke-width="0.8"/><path d="M642.3,569.8 L641.5,570.1 L640.8,571.4 L640.7,572.0 L640.8,571.9" fill="none" stroke="#558f22" stroke-width="0.8"/><path d="M649.2,568.2 L650.5,568.3 L650.6,568.4 L651.5,567.6 L650.5,568.6" fill="none" stroke="#558f22" stroke-width="0.8"/><path d="M645.3,570.5 L646.3,571.7 L647.4,570.4 L647.0,571.4 L648.0,570.2" fill="none" stroke="#558f22" stroke-width="0.8"/><path d="M650.4,568.4 L649.2,568.0 L650.1,568.1 L650.0,566.8 L649.6,568.3" fill="none" stroke="#558f22" stroke-width="0.8"/><path d="M641.3,569.1 L641.2,570.0 L642.0,569.0 L642.5,568.6 L642.6,567.8" fill="none" stroke="#558f22" stroke-width="0.8"/><path d="M646.8,569.3 L646.5,567.9 L645.6,568.1 L644.3,567.1 L644.9,566.5" fill="none" stroke="#558f22" stroke-width="0.8"/><path d="M652.3,555.6 L652.8,555.7 L654.6,555.5 L655.2,556.7 L656.3,557.1 L657.0,557.9" fill="none" stroke="#66aa2a" stroke-width="0.9"/><path d="M642.8,560.5 L643.3,560.2 L644.6,560.5 L645.3,560.7 L646.6,561.5 L647.3,561.8" fill="none" stroke="#66aa2a" stroke-width="0.9"/><path d="M649.4,562.4 L649.9,563.1 L651.8,563.1 L652.6,564.0 L653.9,564.8 L654.3,564.6" fill="none" stroke="#66aa2a" stroke-width="0.9"/><circle cx="641.0" cy="415.6" r="10.2" fill="none" stroke="#558f22" stroke-width="1"/><path d="M641.0,415.6 L644.0,410.9 L638.9,407.7 L637.5,412.9 Z" fill="#66aa2a" fill-opacity="0.38" stroke="#66aa2a" stroke-width="0.85" stroke-linejoin="round"/><path d="M638.9,407.7 L641.4,405.4" stroke="#558f22" stroke-width="0.8"/><path d="M641.0,415.6 L646.1,413.9 L645.3,408.4 L642.0,409.6 Z" fill="#66aa2a" fill-opacity="0.38" stroke="#66aa2a" stroke-width="0.85" stroke-linejoin="round"/><path d="M645.3,408.4 L648.6,408.8" stroke="#558f22" stroke-width="0.8"/><path d="M641.0,415.6 L644.3,420.8 L648.6,417.9 L646.7,412.9 Z" fill="#66aa2a" fill-opacity="0.38" stroke="#66aa2a" stroke-width="0.85" stroke-linejoin="round"/><path d="M648.6,417.9 L649.5,421.3" stroke="#558f22" stroke-width="0.8"/><path d="M641.0,415.6 L639.2,421.3 L642.5,424.7 L645.1,421.2 Z" fill="#66aa2a" fill-opacity="0.38" stroke="#66aa2a" stroke-width="0.85" stroke-linejoin="round"/><path d="M642.5,424.7 L639.7,425.7" stroke="#558f22" stroke-width="0.8"/><path d="M641.0,415.6 L636.3,419.2 L636.5,423.0 L641.9,422.6 Z" fill="#66aa2a" fill-opacity="0.38" stroke="#66aa2a" stroke-width="0.85" stroke-linejoin="round"/><path d="M636.5,423.0 L633.3,422.3" stroke="#558f22" stroke-width="0.8"/><path d="M641.0,415.6 L637.9,411.8 L633.9,415.0 L635.4,418.4 Z" fill="#66aa2a" fill-opacity="0.38" stroke="#66aa2a" stroke-width="0.85" stroke-linejoin="round"/><path d="M633.9,415.0 L631.5,411.8" stroke="#558f22" stroke-width="0.8"/><path d="M647.8,419.8 l0.3,-2.3 l0.9,1.1" fill="none" stroke="#558f22" stroke-width="0.8"/><path d="M636.2,416.1 l1.0,-0.4 l0.4,2.5" fill="none" stroke="#558f22" stroke-width="0.8"/><path d="M644.5,407.8 l-1.8,-0.8 l0.1,-2.5" fill="none" stroke="#558f22" stroke-width="0.8"/><path d="M646.8,415.2 l-1.2,-1.0 l-1.2,1.8" fill="none" stroke="#558f22" stroke-width="0.8"/><path d="M634.5,413.2 l-0.4,-2.3 l-1.0,1.9" fill="none" stroke="#558f22" stroke-width="0.8"/><circle cx="641.0" cy="415.6" r="1.7" fill="#66aa2a"/><circle cx="633.0" cy="442.8" r="10.2" fill="none" stroke="#558f22" stroke-width="1"/><path d="M633.0,442.8 L635.5,439.7 L635.5,436.0 L632.3,436.5 Z" fill="#66aa2a" fill-opacity="0.38" stroke="#66aa2a" stroke-width="0.85" stroke-linejoin="round"/><path d="M635.5,436.0 L639.2,434.7" stroke="#558f22" stroke-width="0.8"/><path d="M633.0,442.8 L638.9,442.8 L639.9,438.9 L635.2,438.0 Z" fill="#66aa2a" fill-opacity="0.38" stroke="#66aa2a" stroke-width="0.85" stroke-linejoin="round"/><path d="M639.9,438.9 L643.0,440.6" stroke="#558f22" stroke-width="0.8"/><path d="M633.0,442.8 L633.0,447.3 L637.7,448.0 L637.5,443.3 Z" fill="#66aa2a" fill-opacity="0.38" stroke="#66aa2a" stroke-width="0.85" stroke-linejoin="round"/><path d="M637.7,448.0 L637.3,452.0" stroke="#558f22" stroke-width="0.8"/><path d="M633.0,442.8 L630.4,447.3 L633.2,451.0 L635.6,447.8 Z" fill="#66aa2a" fill-opacity="0.38" stroke="#66aa2a" stroke-width="0.85" stroke-linejoin="round"/><path d="M633.2,451.0 L630.3,452.6" stroke="#558f22" stroke-width="0.8"/><path d="M633.0,442.8 L627.6,444.5 L625.4,447.8 L630.9,448.7 Z" fill="#66aa2a" fill-opacity="0.38" stroke="#66aa2a" stroke-width="0.85" stroke-linejoin="round"/><path d="M625.4,447.8 L623.2,445.6" stroke="#558f22" stroke-width="0.8"/><path d="M633.0,442.8 L631.8,437.8 L626.9,437.8 L627.9,442.8 Z" fill="#66aa2a" fill-opacity="0.38" stroke="#66aa2a" stroke-width="0.85" stroke-linejoin="round"/><path d="M626.9,437.8 L627.4,434.3" stroke="#558f22" stroke-width="0.8"/><path d="M639.2,445.1 l0.7,-2.3 l1.8,-2.2" fill="none" stroke="#558f22" stroke-width="0.8"/><path d="M628.5,439.7 l2.2,0.3 l1.5,-0.0" fill="none" stroke="#558f22" stroke-width="0.8"/><path d="M629.5,436.0 l-1.0,-1.5 l1.7,-1.8" fill="none" stroke="#558f22" stroke-width="0.8"/><path d="M637.8,440.1 l-2.0,-2.1 l1.4,2.3" fill="none" stroke="#558f22" stroke-width="0.8"/><path d="M626.5,446.7 l-1.2,2.1 l0.9,-1.8" fill="none" stroke="#558f22" stroke-width="0.8"/><circle cx="633.0" cy="442.8" r="1.7" fill="#66aa2a"/><circle cx="626.6" cy="474.0" r="10.2" fill="none" stroke="#558f22" stroke-width="1"/><path d="M626.6,474.0 L627.6,478.4 L632.3,477.0 L631.0,471.7 Z" fill="#66aa2a" fill-opacity="0.38" stroke="#66aa2a" stroke-width="0.85" stroke-linejoin="round"/><path d="M632.3,477.0 L633.9,481.2" stroke="#558f22" stroke-width="0.8"/><path d="M626.6,474.0 L622.8,480.1 L627.5,481.4 L631.7,476.9 Z" fill="#66aa2a" fill-opacity="0.38" stroke="#66aa2a" stroke-width="0.85" stroke-linejoin="round"/><path d="M627.5,481.4 L624.8,484.0" stroke="#558f22" stroke-width="0.8"/><path d="M626.6,474.0 L622.0,478.0 L620.4,480.8 L626.1,480.6 Z" fill="#66aa2a" fill-opacity="0.38" stroke="#66aa2a" stroke-width="0.85" stroke-linejoin="round"/><path d="M620.4,480.8 L617.8,479.2" stroke="#558f22" stroke-width="0.8"/><path d="M626.6,474.0 L624.1,469.4 L620.4,472.3 L621.3,476.2 Z" fill="#66aa2a" fill-opacity="0.38" stroke="#66aa2a" stroke-width="0.85" stroke-linejoin="round"/><path d="M620.4,472.3 L618.0,468.5" stroke="#558f22" stroke-width="0.8"/><path d="M626.6,474.0 L629.7,469.4 L625.6,467.4 L622.7,471.2 Z" fill="#66aa2a" fill-opacity="0.38" stroke="#66aa2a" stroke-width="0.85" stroke-linejoin="round"/><path d="M625.6,467.4 L628.1,463.9" stroke="#558f22" stroke-width="0.8"/><path d="M626.6,474.0 L631.0,476.3 L632.2,470.3 L629.1,467.4 Z" fill="#66aa2a" fill-opacity="0.38" stroke="#66aa2a" stroke-width="0.85" stroke-linejoin="round"/><path d="M632.2,470.3 L636.4,471.2" stroke="#558f22" stroke-width="0.8"/><path d="M635.5,473.8 l0.1,-1.1 l-0.8,1.3" fill="none" stroke="#558f22" stroke-width="0.8"/><path d="M617.7,474.2 l-2.1,-0.1 l1.9,0.5" fill="none" stroke="#558f22" stroke-width="0.8"/><path d="M621.8,472.7 l-1.8,-1.2 l2.0,1.8" fill="none" stroke="#558f22" stroke-width="0.8"/><path d="M627.9,482.7 l-2.4,0.5 l2.4,-0.8" fill="none" stroke="#558f22" stroke-width="0.8"/><path d="M633.7,471.4 l-2.3,-0.9 l-0.3,-1.3" fill="none" stroke="#558f22" stroke-width="0.8"/><circle cx="626.6" cy="474.0" r="1.7" fill="#66aa2a"/><circle cx="632.6" cy="507.0" r="10.2" fill="none" stroke="#558f22" stroke-width="1"/><path d="M632.6,507.0 L631.2,501.1 L628.4,499.0 L627.9,502.1 Z" fill="#66aa2a" fill-opacity="0.38" stroke="#66aa2a" stroke-width="0.85" stroke-linejoin="round"/><path d="M628.4,499.0 L630.7,497.0" stroke="#558f22" stroke-width="0.8"/><path d="M632.6,507.0 L638.6,504.4 L636.6,499.8 L631.5,501.1 Z" fill="#66aa2a" fill-opacity="0.38" stroke="#66aa2a" stroke-width="0.85" stroke-linejoin="round"/><path d="M636.6,499.8 L640.0,499.9" stroke="#558f22" stroke-width="0.8"/><path d="M632.6,507.0 L638.0,507.8 L640.7,506.5 L636.2,504.9 Z" fill="#66aa2a" fill-opacity="0.38" stroke="#66aa2a" stroke-width="0.85" stroke-linejoin="round"/><path d="M640.7,506.5 L642.5,509.4" stroke="#558f22" stroke-width="0.8"/><path d="M632.6,507.0 L631.2,511.0 L634.1,514.4 L635.3,511.4 Z" fill="#66aa2a" fill-opacity="0.38" stroke="#66aa2a" stroke-width="0.85" stroke-linejoin="round"/><path d="M634.1,514.4 L631.6,517.2" stroke="#558f22" stroke-width="0.8"/><path d="M632.6,507.0 L628.2,511.6 L627.5,515.1 L633.1,514.4 Z" fill="#66aa2a" fill-opacity="0.38" stroke="#66aa2a" stroke-width="0.85" stroke-linejoin="round"/><path d="M627.5,515.1 L624.9,513.7" stroke="#558f22" stroke-width="0.8"/><path d="M632.6,507.0 L630.3,502.6 L626.0,505.3 L626.9,509.3 Z" fill="#66aa2a" fill-opacity="0.38" stroke="#66aa2a" stroke-width="0.85" stroke-linejoin="round"/><path d="M626.0,505.3 L623.9,501.7" stroke="#558f22" stroke-width="0.8"/><path d="M625.6,507.2 l-2.0,-0.2 l-1.7,0.2" fill="none" stroke="#558f22" stroke-width="0.8"/><path d="M626.3,506.7 l-1.5,-0.5 l-1.5,-1.9" fill="none" stroke="#558f22" stroke-width="0.8"/><path d="M633.1,515.6 l0.0,2.0 l-2.5,2.3" fill="none" stroke="#558f22" stroke-width="0.8"/><path d="M624.4,507.6 l0.4,1.0 l-1.4,1.3" fill="none" stroke="#558f22" stroke-width="0.8"/><path d="M635.9,511.8 l-2.4,-0.5 l0.1,-1.1" fill="none" stroke="#558f22" stroke-width="0.8"/><circle cx="632.6" cy="507.0" r="1.7" fill="#66aa2a"/><circle cx="509.6" cy="436.6" r="10.2" fill="none" stroke="#558f22" stroke-width="1"/><path d="M509.6,436.6 L514.0,433.6 L512.4,428.7 L509.7,431.3 Z" fill="#66aa2a" fill-opacity="0.38" stroke="#66aa2a" stroke-width="0.85" stroke-linejoin="round"/><path d="M512.4,428.7 L515.7,428.4" stroke="#558f22" stroke-width="0.8"/><path d="M509.6,436.6 L513.0,441.6 L515.9,438.2 L515.5,435.4 Z" fill="#66aa2a" fill-opacity="0.38" stroke="#66aa2a" stroke-width="0.85" stroke-linejoin="round"/><path d="M515.9,438.2 L518.3,442.0" stroke="#558f22" stroke-width="0.8"/><path d="M509.6,436.6 L511.3,442.3 L515.3,442.9 L515.2,438.9 Z" fill="#66aa2a" fill-opacity="0.38" stroke="#66aa2a" stroke-width="0.85" stroke-linejoin="round"/><path d="M515.3,442.9 L513.9,445.8" stroke="#558f22" stroke-width="0.8"/><path d="M509.6,436.6 L501.8,438.0 L503.7,441.8 L510.1,441.3 Z" fill="#66aa2a" fill-opacity="0.38" stroke="#66aa2a" stroke-width="0.85" stroke-linejoin="round"/><path d="M503.7,441.8 L500.3,440.8" stroke="#558f22" stroke-width="0.8"/><path d="M509.6,436.6 L504.3,434.9 L501.9,436.2 L505.6,437.8 Z" fill="#66aa2a" fill-opacity="0.38" stroke="#66aa2a" stroke-width="0.85" stroke-linejoin="round"/><path d="M501.9,436.2 L500.0,433.1" stroke="#558f22" stroke-width="0.8"/><path d="M509.6,436.6 L510.0,430.9 L507.6,430.0 L504.8,432.4 Z" fill="#66aa2a" fill-opacity="0.38" stroke="#66aa2a" stroke-width="0.85" stroke-linejoin="round"/><path d="M507.6,430.0 L509.7,426.4" stroke="#558f22" stroke-width="0.8"/><path d="M510.8,442.6 l2.4,2.5 l1.5,-0.1" fill="none" stroke="#558f22" stroke-width="0.8"/><path d="M501.4,436.7 l2.1,1.3 l0.7,-1.5" fill="none" stroke="#558f22" stroke-width="0.8"/><path d="M503.6,430.6 l1.5,-2.1 l1.1,-0.8" fill="none" stroke="#558f22" stroke-width="0.8"/><path d="M514.3,444.3 l0.9,1.3 l-1.9,1.7" fill="none" stroke="#558f22" stroke-width="0.8"/><path d="M517.7,433.2 l1.2,1.7 l1.5,0.5" fill="none" stroke="#558f22" stroke-width="0.8"/><circle cx="509.6" cy="436.6" r="1.7" fill="#66aa2a"/><circle cx="482.0" cy="448.0" r="10.2" fill="none" stroke="#558f22" stroke-width="1"/><path d="M482.0,448.0 L475.0,447.2 L473.4,450.7 L479.4,452.8 Z" fill="#66aa2a" fill-opacity="0.38" stroke="#66aa2a" stroke-width="0.85" stroke-linejoin="round"/><path d="M473.4,450.7 L471.8,448.0" stroke="#558f22" stroke-width="0.8"/><path d="M482.0,448.0 L479.7,443.9 L473.8,443.1 L476.8,448.4 Z" fill="#66aa2a" fill-opacity="0.38" stroke="#66aa2a" stroke-width="0.85" stroke-linejoin="round"/><path d="M473.8,443.1 L475.2,440.4" stroke="#558f22" stroke-width="0.8"/><path d="M482.0,448.0 L482.6,442.0 L480.4,438.9 L478.4,442.1 Z" fill="#66aa2a" fill-opacity="0.38" stroke="#66aa2a" stroke-width="0.85" stroke-linejoin="round"/><path d="M480.4,438.9 L483.2,437.9" stroke="#558f22" stroke-width="0.8"/><path d="M482.0,448.0 L488.9,448.6 L488.1,442.7 L483.6,442.3 Z" fill="#66aa2a" fill-opacity="0.38" stroke="#66aa2a" stroke-width="0.85" stroke-linejoin="round"/><path d="M488.1,442.7 L491.3,443.9" stroke="#558f22" stroke-width="0.8"/><path d="M482.0,448.0 L485.8,455.1 L490.2,451.9 L489.9,447.4 Z" fill="#66aa2a" fill-opacity="0.38" stroke="#66aa2a" stroke-width="0.85" stroke-linejoin="round"/><path d="M490.2,451.9 L489.5,454.9" stroke="#558f22" stroke-width="0.8"/><path d="M482.0,448.0 L479.3,453.1 L480.3,455.5 L484.2,453.5 Z" fill="#66aa2a" fill-opacity="0.38" stroke="#66aa2a" stroke-width="0.85" stroke-linejoin="round"/><path d="M480.3,455.5 L476.9,456.8" stroke="#558f22" stroke-width="0.8"/><path d="M478.1,454.2 l1.7,1.5 l-2.5,-0.1" fill="none" stroke="#558f22" stroke-width="0.8"/><path d="M487.1,448.5 l1.6,-0.4 l0.5,-0.2" fill="none" stroke="#558f22" stroke-width="0.8"/><path d="M479.2,452.8 l-0.7,1.8 l0.6,-1.1" fill="none" stroke="#558f22" stroke-width="0.8"/><path d="M487.0,451.1 l1.0,-0.3 l0.8,1.6" fill="none" stroke="#558f22" stroke-width="0.8"/><path d="M487.6,453.3 l-2.3,1.6 l-1.6,-1.2" fill="none" stroke="#558f22" stroke-width="0.8"/><circle cx="482.0" cy="448.0" r="1.7" fill="#66aa2a"/><circle cx="453.0" cy="450.0" r="10.2" fill="none" stroke="#558f22" stroke-width="1"/><path d="M453.0,450.0 L459.2,451.9 L458.7,445.8 L455.3,444.6 Z" fill="#66aa2a" fill-opacity="0.38" stroke="#66aa2a" stroke-width="0.85" stroke-linejoin="round"/><path d="M458.7,445.8 L462.6,446.7" stroke="#558f22" stroke-width="0.8"/><path d="M453.0,450.0 L455.6,457.3 L460.3,453.4 L460.6,448.3 Z" fill="#66aa2a" fill-opacity="0.38" stroke="#66aa2a" stroke-width="0.85" stroke-linejoin="round"/><path d="M460.3,453.4 L460.6,456.8" stroke="#558f22" stroke-width="0.8"/><path d="M453.0,450.0 L452.0,454.4 L455.1,459.0 L455.1,454.9 Z" fill="#66aa2a" fill-opacity="0.38" stroke="#66aa2a" stroke-width="0.85" stroke-linejoin="round"/><path d="M455.1,459.0 L452.3,460.2" stroke="#558f22" stroke-width="0.8"/><path d="M453.0,450.0 L447.7,451.0 L446.1,456.6 L450.2,457.1 Z" fill="#66aa2a" fill-opacity="0.38" stroke="#66aa2a" stroke-width="0.85" stroke-linejoin="round"/><path d="M446.1,456.6 L443.9,454.6" stroke="#558f22" stroke-width="0.8"/><path d="M453.0,450.0 L451.7,445.4 L446.9,447.4 L448.1,452.5 Z" fill="#66aa2a" fill-opacity="0.38" stroke="#66aa2a" stroke-width="0.85" stroke-linejoin="round"/><path d="M446.9,447.4 L445.2,443.4" stroke="#558f22" stroke-width="0.8"/><path d="M453.0,450.0 L457.0,442.6 L452.1,440.5 L447.1,445.2 Z" fill="#66aa2a" fill-opacity="0.38" stroke="#66aa2a" stroke-width="0.85" stroke-linejoin="round"/><path d="M452.1,440.5 L455.0,440.0" stroke="#558f22" stroke-width="0.8"/><path d="M448.3,445.3 l2.3,-0.7 l0.8,0.7" fill="none" stroke="#558f22" stroke-width="0.8"/><path d="M448.0,454.9 l0.9,2.1 l-0.0,-0.7" fill="none" stroke="#558f22" stroke-width="0.8"/><path d="M457.8,449.3 l1.7,0.9 l0.3,-0.3" fill="none" stroke="#558f22" stroke-width="0.8"/><path d="M453.1,441.3 l1.2,1.3 l-2.4,-0.9" fill="none" stroke="#558f22" stroke-width="0.8"/><path d="M458.8,456.8 l2.0,-1.8 l0.4,0.4" fill="none" stroke="#558f22" stroke-width="0.8"/><circle cx="453.0" cy="450.0" r="1.7" fill="#66aa2a"/><circle cx="528.4" cy="543.6" r="10.2" fill="none" stroke="#558f22" stroke-width="1"/><path d="M528.4,543.6 L532.3,548.9 L537.1,545.4 L535.1,540.6 Z" fill="#66aa2a" fill-opacity="0.38" stroke="#66aa2a" stroke-width="0.85" stroke-linejoin="round"/><path d="M537.1,545.4 L537.3,548.5" stroke="#558f22" stroke-width="0.8"/><path d="M528.4,543.6 L529.0,549.7 L531.5,551.2 L533.5,548.5 Z" fill="#66aa2a" fill-opacity="0.38" stroke="#66aa2a" stroke-width="0.85" stroke-linejoin="round"/><path d="M531.5,551.2 L529.3,553.8" stroke="#558f22" stroke-width="0.8"/><path d="M528.4,543.6 L523.9,544.5 L521.0,548.2 L526.1,550.2 Z" fill="#66aa2a" fill-opacity="0.38" stroke="#66aa2a" stroke-width="0.85" stroke-linejoin="round"/><path d="M521.0,548.2 L518.5,546.2" stroke="#558f22" stroke-width="0.8"/><path d="M528.4,543.6 L525.6,540.6 L521.7,540.7 L524.4,544.3 Z" fill="#66aa2a" fill-opacity="0.38" stroke="#66aa2a" stroke-width="0.85" stroke-linejoin="round"/><path d="M521.7,540.7 L520.7,536.9" stroke="#558f22" stroke-width="0.8"/><path d="M528.4,543.6 L530.6,540.2 L528.1,536.1 L527.0,539.2 Z" fill="#66aa2a" fill-opacity="0.38" stroke="#66aa2a" stroke-width="0.85" stroke-linejoin="round"/><path d="M528.1,536.1 L531.0,533.7" stroke="#558f22" stroke-width="0.8"/><path d="M528.4,543.6 L532.7,539.0 L533.2,536.1 L527.9,537.2 Z" fill="#66aa2a" fill-opacity="0.38" stroke="#66aa2a" stroke-width="0.85" stroke-linejoin="round"/><path d="M533.2,536.1 L536.2,537.0" stroke="#558f22" stroke-width="0.8"/><path d="M526.5,549.7 l2.4,2.4 l-1.6,-1.0" fill="none" stroke="#558f22" stroke-width="0.8"/><path d="M533.6,541.7 l-0.9,-0.3 l-2.0,-1.2" fill="none" stroke="#558f22" stroke-width="0.8"/><path d="M523.4,547.5 l2.4,-1.2 l-1.5,2.1" fill="none" stroke="#558f22" stroke-width="0.8"/><path d="M520.4,546.2 l0.7,1.4 l-0.9,-1.8" fill="none" stroke="#558f22" stroke-width="0.8"/><path d="M528.7,536.9 l0.3,0.9 l1.3,-1.1" fill="none" stroke="#558f22" stroke-width="0.8"/><circle cx="528.4" cy="543.6" r="1.7" fill="#66aa2a"/><circle cx="507.0" cy="563.6" r="10.2" fill="none" stroke="#558f22" stroke-width="1"/><path d="M507.0,563.6 L501.9,563.8 L500.6,568.7 L504.1,569.2 Z" fill="#66aa2a" fill-opacity="0.38" stroke="#66aa2a" stroke-width="0.85" stroke-linejoin="round"/><path d="M500.6,568.7 L497.5,567.3" stroke="#558f22" stroke-width="0.8"/><path d="M507.0,563.6 L504.5,558.4 L500.8,561.9 L501.8,566.5 Z" fill="#66aa2a" fill-opacity="0.38" stroke="#66aa2a" stroke-width="0.85" stroke-linejoin="round"/><path d="M500.8,561.9 L498.4,558.1" stroke="#558f22" stroke-width="0.8"/><path d="M507.0,563.6 L507.7,559.1 L506.0,556.4 L504.0,558.3 Z" fill="#66aa2a" fill-opacity="0.38" stroke="#66aa2a" stroke-width="0.85" stroke-linejoin="round"/><path d="M506.0,556.4 L508.7,553.5" stroke="#558f22" stroke-width="0.8"/><path d="M507.0,563.6 L513.7,560.8 L513.1,557.5 L507.4,558.8 Z" fill="#66aa2a" fill-opacity="0.38" stroke="#66aa2a" stroke-width="0.85" stroke-linejoin="round"/><path d="M513.1,557.5 L516.0,558.8" stroke="#558f22" stroke-width="0.8"/><path d="M507.0,563.6 L512.8,568.1 L515.5,563.1 L512.5,559.5 Z" fill="#66aa2a" fill-opacity="0.38" stroke="#66aa2a" stroke-width="0.85" stroke-linejoin="round"/><path d="M515.5,563.1 L516.9,566.1" stroke="#558f22" stroke-width="0.8"/><path d="M507.0,563.6 L504.9,568.6 L508.9,571.1 L511.7,567.8 Z" fill="#66aa2a" fill-opacity="0.38" stroke="#66aa2a" stroke-width="0.85" stroke-linejoin="round"/><path d="M508.9,571.1 L506.5,573.8" stroke="#558f22" stroke-width="0.8"/><path d="M500.5,568.8 l-0.8,-1.6 l1.9,0.2" fill="none" stroke="#558f22" stroke-width="0.8"/><path d="M499.4,562.6 l2.0,-1.9 l-0.8,-2.2" fill="none" stroke="#558f22" stroke-width="0.8"/><path d="M501.1,567.2 l1.8,0.9 l0.4,-0.5" fill="none" stroke="#558f22" stroke-width="0.8"/><path d="M501.8,561.0 l1.8,1.5 l1.7,-1.8" fill="none" stroke="#558f22" stroke-width="0.8"/><path d="M503.2,556.5 l0.0,2.0 l2.0,1.2" fill="none" stroke="#558f22" stroke-width="0.8"/><circle cx="507.0" cy="563.6" r="1.7" fill="#66aa2a"/><circle cx="493.2" cy="589.6" r="10.2" fill="none" stroke="#558f22" stroke-width="1"/><path d="M493.2,589.6 L497.8,585.6 L496.1,580.7 L493.4,584.2 Z" fill="#66aa2a" fill-opacity="0.38" stroke="#66aa2a" stroke-width="0.85" stroke-linejoin="round"/><path d="M496.1,580.7 L499.1,581.3" stroke="#558f22" stroke-width="0.8"/><path d="M493.2,589.6 L498.3,591.7 L500.3,587.9 L497.9,586.8 Z" fill="#66aa2a" fill-opacity="0.38" stroke="#66aa2a" stroke-width="0.85" stroke-linejoin="round"/><path d="M500.3,587.9 L503.4,590.3" stroke="#558f22" stroke-width="0.8"/><path d="M493.2,589.6 L494.1,594.6 L499.1,593.5 L498.7,588.5 Z" fill="#66aa2a" fill-opacity="0.38" stroke="#66aa2a" stroke-width="0.85" stroke-linejoin="round"/><path d="M499.1,593.5 L499.7,597.4" stroke="#558f22" stroke-width="0.8"/><path d="M493.2,589.6 L488.5,591.5 L488.5,597.4 L491.5,596.4 Z" fill="#66aa2a" fill-opacity="0.38" stroke="#66aa2a" stroke-width="0.85" stroke-linejoin="round"/><path d="M488.5,597.4 L485.6,596.4" stroke="#558f22" stroke-width="0.8"/><path d="M493.2,589.6 L489.0,586.8 L485.8,590.1 L487.8,592.4 Z" fill="#66aa2a" fill-opacity="0.38" stroke="#66aa2a" stroke-width="0.85" stroke-linejoin="round"/><path d="M485.8,590.1 L483.3,587.3" stroke="#558f22" stroke-width="0.8"/><path d="M493.2,589.6 L491.8,585.9 L487.7,586.0 L489.2,590.2 Z" fill="#66aa2a" fill-opacity="0.38" stroke="#66aa2a" stroke-width="0.85" stroke-linejoin="round"/><path d="M487.7,586.0 L486.7,581.7" stroke="#558f22" stroke-width="0.8"/><path d="M501.3,591.7 l-2.0,-1.4 l0.7,-0.8" fill="none" stroke="#558f22" stroke-width="0.8"/><path d="M489.7,595.9 l-1.4,1.5 l-1.5,1.7" fill="none" stroke="#558f22" stroke-width="0.8"/><path d="M495.7,583.0 l-2.4,1.4 l-2.4,0.0" fill="none" stroke="#558f22" stroke-width="0.8"/><path d="M488.9,591.8 l0.7,1.1 l0.4,-0.5" fill="none" stroke="#558f22" stroke-width="0.8"/><path d="M485.9,589.0 l-1.4,1.9 l2.5,1.6" fill="none" stroke="#558f22" stroke-width="0.8"/><circle cx="493.2" cy="589.6" r="1.7" fill="#66aa2a"/></g></svg>
<div class="b " style="left:1155.6px;top:108.5px;width:299.2px;height:690.3px;background:#ececec;"></div>
<div class="b " style="left:1155.6px;top:108.5px;width:299.2px;height:21px;background:linear-gradient(#f1f1f1,#e6e6e6 50%,#d9d9d9);"></div>
<div class="b " style="left:1155.6px;top:308.6px;width:299.2px;height:21.6px;background:linear-gradient(#f1f1f1,#e6e6e6 50%,#d8d8d8);"></div>
<div class="b " style="left:1155.6px;top:307px;width:299.2px;height:1.6px;background:#b9b9b9;"></div>
<div class="b " style="left:1155px;top:130px;width:300px;height:26.6px;background:#aaaaaa;"></div>
<div class="b " style="left:1155px;top:331px;width:300px;height:26.4px;background:#aaaaaa;"></div>
<div class="b " style="left:1155.7px;top:131.2px;width:35.5px;height:24.1px;background:linear-gradient(#e4e4e4,#efefef 45%,#f6f6f6);"></div>
<div class="b " style="left:1193.2px;top:131.2px;width:35.5px;height:24.1px;background:linear-gradient(#e4e4e4,#efefef 45%,#f6f6f6);"></div>
<div class="b " style="left:1230.7px;top:131.2px;width:35.5px;height:24.1px;background:linear-gradient(#e4e4e4,#efefef 45%,#f6f6f6);"></div>
<div class="b " style="left:1268.2px;top:131.2px;width:35.5px;height:24.1px;background:linear-gradient(#e4e4e4,#efefef 45%,#f6f6f6);"></div>
<div class="b " style="left:1305.7px;top:131.2px;width:35.5px;height:24.1px;background:linear-gradient(#e4e4e4,#efefef 45%,#f6f6f6);"></div>
<div class="b " style="left:1343.2px;top:131.2px;width:35.5px;height:24.1px;background:linear-gradient(#e4e4e4,#efefef 45%,#f6f6f6);"></div>
<div class="b " style="left:1380.7px;top:131.2px;width:35.5px;height:24.1px;background:linear-gradient(#e4e4e4,#efefef 45%,#f6f6f6);"></div>
<div class="b " style="left:1418.2px;top:131.2px;width:35.5px;height:24.1px;background:linear-gradient(#e4e4e4,#efefef 45%,#f6f6f6);"></div>
<div class="b " style="left:1155.7px;top:332.2px;width:58px;height:24px;background:linear-gradient(#e4e4e4,#efefef 45%,#f6f6f6);"></div>
<div class="b " style="left:1215.7px;top:332.2px;width:58px;height:24px;background:linear-gradient(#e4e4e4,#efefef 45%,#f6f6f6);"></div>
<div class="b " style="left:1275.7px;top:332.2px;width:58px;height:24px;background:linear-gradient(#e4e4e4,#efefef 45%,#f6f6f6);"></div>
<div class="b " style="left:1335.7px;top:332.2px;width:58px;height:24px;background:linear-gradient(#e4e4e4,#efefef 45%,#f6f6f6);"></div>
<div class="b " style="left:1395.7px;top:332.2px;width:58px;height:24px;background:linear-gradient(#e4e4e4,#efefef 45%,#f6f6f6);"></div>
<div class="b " style="left:1155.9px;top:157px;width:298.4px;height:150px;background:#fff;"></div>
<div class="b " style="left:1155.9px;top:358px;width:298.4px;height:440.6px;background:#fff;"></div>
<div class="b " style="left:1155.9px;top:237.2px;width:298.4px;height:19.9px;background:#d4d4d4;"></div>
<div class="b " style="left:1155.9px;top:378px;width:298.4px;height:19.9px;background:#0a50d7;"></div>
<div class="b " style="left:1454.3px;top:108.5px;width:1.2px;height:690.3px;background:#d2d2d2;"></div>
<span class="t" style="left:1282.50px;top:113.03px;font-size:12.6px;line-height:12.6px;color:#2a2a2a;letter-spacing:-0.287px;">Liste des blocs</span>
<span class="t" style="left:1276.20px;top:314.03px;font-size:12.6px;line-height:12.6px;color:#2a2a2a;letter-spacing:-0.336px;">Liste des calques</span>
<span class="t" style="left:1205.50px;top:160.33px;font-size:13.2px;line-height:13.2px;color:#111;letter-spacing:0.083px;">Model (*Model_Space)</span>
<span class="t" style="left:1205.50px;top:180.28px;font-size:13.2px;line-height:13.2px;color:#111;letter-spacing:-0.074px;">Layout1 (*Paper_Space)</span>
<span class="t" style="left:1205.50px;top:200.23px;font-size:13.2px;line-height:13.2px;color:#111;letter-spacing:-0.015px;">Arbre A</span>
<span class="t" style="left:1205.50px;top:220.18px;font-size:13.2px;line-height:13.2px;color:#111;letter-spacing:-0.015px;">Arbre B</span>
<span class="t" style="left:1205.50px;top:240.13px;font-size:13.2px;line-height:13.2px;color:#111;letter-spacing:-0.115px;">Banc</span>
<span class="t" style="left:1205.50px;top:260.08px;font-size:13.2px;line-height:13.2px;color:#111;letter-spacing:-0.041px;">Poubelle</span>
<span class="t" style="left:1183.40px;top:361.23px;font-size:13.2px;line-height:13.2px;color:#111;">0</span>
<span class="t" style="left:1183.40px;top:381.23px;font-size:13.2px;line-height:13.2px;color:#fff;letter-spacing:-0.091px;">Chemins</span>
<span class="t" style="left:1183.40px;top:401.23px;font-size:13.2px;line-height:13.2px;color:#111;letter-spacing:0.105px;">Installations</span>
<span class="t" style="left:1183.40px;top:421.23px;font-size:13.2px;line-height:13.2px;color:#111;letter-spacing:-0.084px;">Plantes</span>
<span class="t" style="left:1316.50px;top:137.58px;font-size:11.6px;line-height:11.6px;color:#222;">a</span>
<span class="t" style="left:1325.40px;top:137.58px;font-size:11.6px;line-height:11.6px;color:#222;">b</span>
<svg class="b" style="left:0px;top:0px;" width="1500" height="800" viewBox="0 0 1500 800"><circle cx="1163.9" cy="118" r="6.9" fill="#747474"/><path d="M1161,115.1 l5.8,5.8 M1166.8,115.1 l-5.8,5.8" stroke="#f2f2f2" stroke-width="1.7" stroke-linecap="round"/><circle cx="1182" cy="118" r="6.9" fill="#747474"/><rect x="1181" y="114.4" width="5.2" height="4.2" rx="0.8" fill="none" stroke="#f2f2f2" stroke-width="1.1"/><rect x="1178.2" y="116.8" width="5.2" height="4.2" rx="0.8" fill="#747474" stroke="#f2f2f2" stroke-width="1.1"/><circle cx="1163.9" cy="319" r="6.9" fill="#747474"/><path d="M1161,316.1 l5.8,5.8 M1166.8,316.1 l-5.8,5.8" stroke="#f2f2f2" stroke-width="1.7" stroke-linecap="round"/><circle cx="1182" cy="319" r="6.9" fill="#747474"/><rect x="1181" y="315.4" width="5.2" height="4.2" rx="0.8" fill="none" stroke="#f2f2f2" stroke-width="1.1"/><rect x="1178.2" y="317.8" width="5.2" height="4.2" rx="0.8" fill="#747474" stroke="#f2f2f2" stroke-width="1.1"/><g transform="translate(1173.80,142.90) scale(1.000)" opacity="1"><path d="M-7.6,0.4 C-5.6,-3.4 -2.6,-5.4 0.6,-5.5 C3.6,-5.5 6.2,-3.6 7.6,-0.6 C7.9,0 7.5,0.5 7.1,0.9 C5.4,3.6 3,5.2 0.2,5.4 C-1.6,5.6 -3.4,5.2 -4.6,4.2 C-5.8,3.3 -6.9,2 -7.6,0.4 Z" fill="#000"/><path d="M-5.0,1.3 C-3.6,-1.1 -1.4,-2.1 0.6,-2.1 C2.8,-2.1 4.5,-0.9 5.4,0.9 C4.2,2.9 2.4,3.9 0.4,3.9 C-1.8,3.9 -3.7,2.9 -5.0,1.3 Z" fill="#fff"/><circle cx="0.3" cy="0.2" r="2.6" fill="#000"/><circle cx="-0.6" cy="-0.6" r="0.7" fill="#fff" opacity="0.85"/><path d="M-7.2,-0.6 C-5,-4.6 -2,-6 0.8,-6 C3.8,-6 6.2,-4.4 7.4,-1.8 C5.6,-3.8 3.4,-4.7 0.8,-4.7 C-2.2,-4.7 -5,-3.4 -7.2,-0.6 Z" fill="#000"/></g><g transform="translate(1211.30,142.90) scale(1.000)" opacity="0.9"><path d="M-7.6,0.4 C-5.6,-3.4 -2.6,-5.4 0.6,-5.5 C3.6,-5.5 6.2,-3.6 7.6,-0.6 C7.9,0 7.5,0.5 7.1,0.9 C5.4,3.6 3,5.2 0.2,5.4 C-1.6,5.6 -3.4,5.2 -4.6,4.2 C-5.8,3.3 -6.9,2 -7.6,0.4 Z" fill="#9a9a9a"/><path d="M-5.0,1.3 C-3.6,-1.1 -1.4,-2.1 0.6,-2.1 C2.8,-2.1 4.5,-0.9 5.4,0.9 C4.2,2.9 2.4,3.9 0.4,3.9 C-1.8,3.9 -3.7,2.9 -5.0,1.3 Z" fill="#fff"/><circle cx="0.3" cy="0.2" r="2.6" fill="#9a9a9a"/><circle cx="-0.6" cy="-0.6" r="0.7" fill="#fff" opacity="0.85"/><path d="M-7.2,-0.6 C-5,-4.6 -2,-6 0.8,-6 C3.8,-6 6.2,-4.4 7.4,-1.8 C5.6,-3.8 3.4,-4.7 0.8,-4.7 C-2.2,-4.7 -5,-3.4 -7.2,-0.6 Z" fill="#9a9a9a"/></g><path d="M1242.9,141.4 h4.6 v-4.6 h3.2 v4.6 h4.6 v3.2 h-4.6 v4.6 h-3.2 v-4.6 h-4.6 Z" fill="#fb0007" stroke="#9a0a0a" stroke-width="0.5"/><rect x="1280.2" y="141.5" width="11.8" height="3.1" fill="#fb0007" stroke="#9a0a0a" stroke-width="0.5"/><line x1="1323.9" y1="136.4" x2="1323.9" y2="149.4" stroke="#222" stroke-width="0.8"/><g transform="translate(1353.70,149.70) rotate(-42.33)" opacity="1"><path d="M0,0 L3.6,-1.45 L19.75,-1.45 L19.75,1.45 L3.6,1.45 Z" fill="#e8a93c" stroke="#7a4a10" stroke-width="0.45"/><path d="M3.8,-0.36 L16.75,-0.36" stroke="#f7d88a" stroke-width="0.9"/><path d="M3.8,0.80 L16.75,0.80" stroke="#b87818" stroke-width="0.8"/><path d="M0,0 L3.6,-1.45 L3.6,1.45 Z" fill="#d8b078" stroke="#7a4a10" stroke-width="0.3"/><path d="M0,0 L1.5,-0.61 L1.5,0.61 Z" fill="#8a5a1a"/><rect x="16.75" y="-1.45" width="3.2" height="2.90" rx="0.8" fill="#e8303a" stroke="#a01820" stroke-width="0.35"/></g><rect x="1393.2" y="136.4" width="11.8" height="12.6" fill="#e4e4e4" stroke="#b4b4b4" stroke-width="0.7"/><path d="M1395.2,138.6 C1399.4,137.2 1401.8,139 1400.6,142.4 L1400.4,144.8 L1403.2,144.4 L1399.4,148.6 L1395.8,144.8 L1398.4,144.9 C1399,141.4 1398.4,139.6 1395.2,138.6 Z" fill="#1a3cff"/><rect x="1431.2" y="138.2" width="9.8" height="9.8" rx="0.8" fill="#ef8466" stroke="#e04e36" stroke-width="1.2"/><path d="M1433.6,140.6 l5,5 M1438.6,140.6 l-5,5" stroke="#fff" stroke-width="1.5"/><g transform="translate(1169.00,166.90) scale(1.000)" opacity="1"><path d="M-7.6,0.4 C-5.6,-3.4 -2.6,-5.4 0.6,-5.5 C3.6,-5.5 6.2,-3.6 7.6,-0.6 C7.9,0 7.5,0.5 7.1,0.9 C5.4,3.6 3,5.2 0.2,5.4 C-1.6,5.6 -3.4,5.2 -4.6,4.2 C-5.8,3.3 -6.9,2 -7.6,0.4 Z" fill="#000"/><path d="M-5.0,1.3 C-3.6,-1.1 -1.4,-2.1 0.6,-2.1 C2.8,-2.1 4.5,-0.9 5.4,0.9 C4.2,2.9 2.4,3.9 0.4,3.9 C-1.8,3.9 -3.7,2.9 -5.0,1.3 Z" fill="#fff"/><circle cx="0.3" cy="0.2" r="2.6" fill="#000"/><circle cx="-0.6" cy="-0.6" r="0.7" fill="#fff" opacity="0.85"/><path d="M-7.2,-0.6 C-5,-4.6 -2,-6 0.8,-6 C3.8,-6 6.2,-4.4 7.4,-1.8 C5.6,-3.8 3.4,-4.7 0.8,-4.7 C-2.2,-4.7 -5,-3.4 -7.2,-0.6 Z" fill="#000"/></g><g transform="translate(1169.00,186.85) scale(1.000)" opacity="1"><path d="M-7.6,0.4 C-5.6,-3.4 -2.6,-5.4 0.6,-5.5 C3.6,-5.5 6.2,-3.6 7.6,-0.6 C7.9,0 7.5,0.5 7.1,0.9 C5.4,3.6 3,5.2 0.2,5.4 C-1.6,5.6 -3.4,5.2 -4.6,4.2 C-5.8,3.3 -6.9,2 -7.6,0.4 Z" fill="#000"/><path d="M-5.0,1.3 C-3.6,-1.1 -1.4,-2.1 0.6,-2.1 C2.8,-2.1 4.5,-0.9 5.4,0.9 C4.2,2.9 2.4,3.9 0.4,3.9 C-1.8,3.9 -3.7,2.9 -5.0,1.3 Z" fill="#fff"/><circle cx="0.3" cy="0.2" r="2.6" fill="#000"/><circle cx="-0.6" cy="-0.6" r="0.7" fill="#fff" opacity="0.85"/><path d="M-7.2,-0.6 C-5,-4.6 -2,-6 0.8,-6 C3.8,-6 6.2,-4.4 7.4,-1.8 C5.6,-3.8 3.4,-4.7 0.8,-4.7 C-2.2,-4.7 -5,-3.4 -7.2,-0.6 Z" fill="#000"/></g><g transform="translate(1169.00,206.80) scale(1.000)" opacity="1"><path d="M-7.6,0.4 C-5.6,-3.4 -2.6,-5.4 0.6,-5.5 C3.6,-5.5 6.2,-3.6 7.6,-0.6 C7.9,0 7.5,0.5 7.1,0.9 C5.4,3.6 3,5.2 0.2,5.4 C-1.6,5.6 -3.4,5.2 -4.6,4.2 C-5.8,3.3 -6.9,2 -7.6,0.4 Z" fill="#000"/><path d="M-5.0,1.3 C-3.6,-1.1 -1.4,-2.1 0.6,-2.1 C2.8,-2.1 4.5,-0.9 5.4,0.9 C4.2,2.9 2.4,3.9 0.4,3.9 C-1.8,3.9 -3.7,2.9 -5.0,1.3 Z" fill="#fff"/><circle cx="0.3" cy="0.2" r="2.6" fill="#000"/><circle cx="-0.6" cy="-0.6" r="0.7" fill="#fff" opacity="0.85"/><path d="M-7.2,-0.6 C-5,-4.6 -2,-6 0.8,-6 C3.8,-6 6.2,-4.4 7.4,-1.8 C5.6,-3.8 3.4,-4.7 0.8,-4.7 C-2.2,-4.7 -5,-3.4 -7.2,-0.6 Z" fill="#000"/></g><g transform="translate(1169.00,226.75) scale(1.000)" opacity="1"><path d="M-7.6,0.4 C-5.6,-3.4 -2.6,-5.4 0.6,-5.5 C3.6,-5.5 6.2,-3.6 7.6,-0.6 C7.9,0 7.5,0.5 7.1,0.9 C5.4,3.6 3,5.2 0.2,5.4 C-1.6,5.6 -3.4,5.2 -4.6,4.2 C-5.8,3.3 -6.9,2 -7.6,0.4 Z" fill="#000"/><path d="M-5.0,1.3 C-3.6,-1.1 -1.4,-2.1 0.6,-2.1 C2.8,-2.1 4.5,-0.9 5.4,0.9 C4.2,2.9 2.4,3.9 0.4,3.9 C-1.8,3.9 -3.7,2.9 -5.0,1.3 Z" fill="#fff"/><circle cx="0.3" cy="0.2" r="2.6" fill="#000"/><circle cx="-0.6" cy="-0.6" r="0.7" fill="#fff" opacity="0.85"/><path d="M-7.2,-0.6 C-5,-4.6 -2,-6 0.8,-6 C3.8,-6 6.2,-4.4 7.4,-1.8 C5.6,-3.8 3.4,-4.7 0.8,-4.7 C-2.2,-4.7 -5,-3.4 -7.2,-0.6 Z" fill="#000"/></g><g transform="translate(1169.00,246.70) scale(1.000)" opacity="1"><path d="M-7.6,0.4 C-5.6,-3.4 -2.6,-5.4 0.6,-5.5 C3.6,-5.5 6.2,-3.6 7.6,-0.6 C7.9,0 7.5,0.5 7.1,0.9 C5.4,3.6 3,5.2 0.2,5.4 C-1.6,5.6 -3.4,5.2 -4.6,4.2 C-5.8,3.3 -6.9,2 -7.6,0.4 Z" fill="#2e3a52"/><path d="M-5.0,1.3 C-3.6,-1.1 -1.4,-2.1 0.6,-2.1 C2.8,-2.1 4.5,-0.9 5.4,0.9 C4.2,2.9 2.4,3.9 0.4,3.9 C-1.8,3.9 -3.7,2.9 -5.0,1.3 Z" fill="#d4d4d4"/><circle cx="0.3" cy="0.2" r="2.6" fill="#2e3a52"/><circle cx="-0.6" cy="-0.6" r="0.7" fill="#d4d4d4" opacity="0.85"/><path d="M-7.2,-0.6 C-5,-4.6 -2,-6 0.8,-6 C3.8,-6 6.2,-4.4 7.4,-1.8 C5.6,-3.8 3.4,-4.7 0.8,-4.7 C-2.2,-4.7 -5,-3.4 -7.2,-0.6 Z" fill="#2e3a52"/></g><g transform="translate(1169.00,266.65) scale(1.000)" opacity="1"><path d="M-7.6,0.4 C-5.6,-3.4 -2.6,-5.4 0.6,-5.5 C3.6,-5.5 6.2,-3.6 7.6,-0.6 C7.9,0 7.5,0.5 7.1,0.9 C5.4,3.6 3,5.2 0.2,5.4 C-1.6,5.6 -3.4,5.2 -4.6,4.2 C-5.8,3.3 -6.9,2 -7.6,0.4 Z" fill="#000"/><path d="M-5.0,1.3 C-3.6,-1.1 -1.4,-2.1 0.6,-2.1 C2.8,-2.1 4.5,-0.9 5.4,0.9 C4.2,2.9 2.4,3.9 0.4,3.9 C-1.8,3.9 -3.7,2.9 -5.0,1.3 Z" fill="#fff"/><circle cx="0.3" cy="0.2" r="2.6" fill="#000"/><circle cx="-0.6" cy="-0.6" r="0.7" fill="#fff" opacity="0.85"/><path d="M-7.2,-0.6 C-5,-4.6 -2,-6 0.8,-6 C3.8,-6 6.2,-4.4 7.4,-1.8 C5.6,-3.8 3.4,-4.7 0.8,-4.7 C-2.2,-4.7 -5,-3.4 -7.2,-0.6 Z" fill="#000"/></g><g transform="translate(1184.30,173.40) rotate(-42.57)" opacity="1"><path d="M0,0 L3.6,-1.45 L18.33,-1.45 L18.33,1.45 L3.6,1.45 Z" fill="#e8a93c" stroke="#7a4a10" stroke-width="0.45"/><path d="M3.8,-0.36 L15.33,-0.36" stroke="#f7d88a" stroke-width="0.9"/><path d="M3.8,0.80 L15.33,0.80" stroke="#b87818" stroke-width="0.8"/><path d="M0,0 L3.6,-1.45 L3.6,1.45 Z" fill="#d8b078" stroke="#7a4a10" stroke-width="0.3"/><path d="M0,0 L1.5,-0.61 L1.5,0.61 Z" fill="#8a5a1a"/><rect x="15.33" y="-1.45" width="3.2" height="2.90" rx="0.8" fill="#e8303a" stroke="#a01820" stroke-width="0.35"/></g><g transform="translate(1185.00,343.80) scale(1.000)" opacity="1"><path d="M-7.6,0.4 C-5.6,-3.4 -2.6,-5.4 0.6,-5.5 C3.6,-5.5 6.2,-3.6 7.6,-0.6 C7.9,0 7.5,0.5 7.1,0.9 C5.4,3.6 3,5.2 0.2,5.4 C-1.6,5.6 -3.4,5.2 -4.6,4.2 C-5.8,3.3 -6.9,2 -7.6,0.4 Z" fill="#000"/><path d="M-5.0,1.3 C-3.6,-1.1 -1.4,-2.1 0.6,-2.1 C2.8,-2.1 4.5,-0.9 5.4,0.9 C4.2,2.9 2.4,3.9 0.4,3.9 C-1.8,3.9 -3.7,2.9 -5.0,1.3 Z" fill="#fff"/><circle cx="0.3" cy="0.2" r="2.6" fill="#000"/><circle cx="-0.6" cy="-0.6" r="0.7" fill="#fff" opacity="0.85"/><path d="M-7.2,-0.6 C-5,-4.6 -2,-6 0.8,-6 C3.8,-6 6.2,-4.4 7.4,-1.8 C5.6,-3.8 3.4,-4.7 0.8,-4.7 C-2.2,-4.7 -5,-3.4 -7.2,-0.6 Z" fill="#000"/></g><g transform="translate(1245.00,343.80) scale(1.000)" opacity="0.9"><path d="M-7.6,0.4 C-5.6,-3.4 -2.6,-5.4 0.6,-5.5 C3.6,-5.5 6.2,-3.6 7.6,-0.6 C7.9,0 7.5,0.5 7.1,0.9 C5.4,3.6 3,5.2 0.2,5.4 C-1.6,5.6 -3.4,5.2 -4.6,4.2 C-5.8,3.3 -6.9,2 -7.6,0.4 Z" fill="#9a9a9a"/><path d="M-5.0,1.3 C-3.6,-1.1 -1.4,-2.1 0.6,-2.1 C2.8,-2.1 4.5,-0.9 5.4,0.9 C4.2,2.9 2.4,3.9 0.4,3.9 C-1.8,3.9 -3.7,2.9 -5.0,1.3 Z" fill="#fff"/><circle cx="0.3" cy="0.2" r="2.6" fill="#9a9a9a"/><circle cx="-0.6" cy="-0.6" r="0.7" fill="#fff" opacity="0.85"/><path d="M-7.2,-0.6 C-5,-4.6 -2,-6 0.8,-6 C3.8,-6 6.2,-4.4 7.4,-1.8 C5.6,-3.8 3.4,-4.7 0.8,-4.7 C-2.2,-4.7 -5,-3.4 -7.2,-0.6 Z" fill="#9a9a9a"/></g><path d="M1298.7,342.4 h4.5 v-4.5 h3.2 v4.5 h4.5 v3.2 h-4.5 v4.5 h-3.2 v-4.5 h-4.5 Z" fill="#fb0007" stroke="#9a0a0a" stroke-width="0.5"/><rect x="1359.3" y="342.5" width="11.7" height="3.1" fill="#fb0007" stroke="#9a0a0a" stroke-width="0.5"/><g transform="translate(1417.90,350.60) rotate(-43.39)" opacity="1"><path d="M0,0 L3.6,-1.45 L20.09,-1.45 L20.09,1.45 L3.6,1.45 Z" fill="#e8a93c" stroke="#7a4a10" stroke-width="0.45"/><path d="M3.8,-0.36 L17.09,-0.36" stroke="#f7d88a" stroke-width="0.9"/><path d="M3.8,0.80 L17.09,0.80" stroke="#b87818" stroke-width="0.8"/><path d="M0,0 L3.6,-1.45 L3.6,1.45 Z" fill="#d8b078" stroke="#7a4a10" stroke-width="0.3"/><path d="M0,0 L1.5,-0.61 L1.5,0.61 Z" fill="#8a5a1a"/><rect x="17.09" y="-1.45" width="3.2" height="2.90" rx="0.8" fill="#e8303a" stroke="#a01820" stroke-width="0.35"/></g><rect x="1161.4" y="364.3" width="15.4" height="8.4" fill="#ffffff" stroke="#000" stroke-width="1.1"/><g transform="translate(1423.00,367.90) scale(1.000)" opacity="1"><path d="M-7.6,0.4 C-5.6,-3.4 -2.6,-5.4 0.6,-5.5 C3.6,-5.5 6.2,-3.6 7.6,-0.6 C7.9,0 7.5,0.5 7.1,0.9 C5.4,3.6 3,5.2 0.2,5.4 C-1.6,5.6 -3.4,5.2 -4.6,4.2 C-5.8,3.3 -6.9,2 -7.6,0.4 Z" fill="#000"/><path d="M-5.0,1.3 C-3.6,-1.1 -1.4,-2.1 0.6,-2.1 C2.8,-2.1 4.5,-0.9 5.4,0.9 C4.2,2.9 2.4,3.9 0.4,3.9 C-1.8,3.9 -3.7,2.9 -5.0,1.3 Z" fill="#fff"/><circle cx="0.3" cy="0.2" r="2.6" fill="#000"/><circle cx="-0.6" cy="-0.6" r="0.7" fill="#fff" opacity="0.85"/><path d="M-7.2,-0.6 C-5,-4.6 -2,-6 0.8,-6 C3.8,-6 6.2,-4.4 7.4,-1.8 C5.6,-3.8 3.4,-4.7 0.8,-4.7 C-2.2,-4.7 -5,-3.4 -7.2,-0.6 Z" fill="#000"/></g><path d="M1441.80,367.50 v-2.6 a3.1,3.1 0 0 1 6.2,0 v2.6" fill="none" stroke="#b4b4b4" stroke-width="1.3"/><rect x="1440.00" y="367.10" width="9.8" height="7.4" fill="#b4b4b4"/><rect x="1161.4" y="384.3" width="15.4" height="8.4" fill="#c5b283" stroke="#000" stroke-width="1.1"/><g transform="translate(1423.00,387.90) scale(1.000)" opacity="1"><path d="M-7.6,0.4 C-5.6,-3.4 -2.6,-5.4 0.6,-5.5 C3.6,-5.5 6.2,-3.6 7.6,-0.6 C7.9,0 7.5,0.5 7.1,0.9 C5.4,3.6 3,5.2 0.2,5.4 C-1.6,5.6 -3.4,5.2 -4.6,4.2 C-5.8,3.3 -6.9,2 -7.6,0.4 Z" fill="#24355e"/><path d="M-5.0,1.3 C-3.6,-1.1 -1.4,-2.1 0.6,-2.1 C2.8,-2.1 4.5,-0.9 5.4,0.9 C4.2,2.9 2.4,3.9 0.4,3.9 C-1.8,3.9 -3.7,2.9 -5.0,1.3 Z" fill="#0a50d7"/><circle cx="0.3" cy="0.2" r="2.6" fill="#24355e"/><circle cx="-0.6" cy="-0.6" r="0.7" fill="#0a50d7" opacity="0.85"/><path d="M-7.2,-0.6 C-5,-4.6 -2,-6 0.8,-6 C3.8,-6 6.2,-4.4 7.4,-1.8 C5.6,-3.8 3.4,-4.7 0.8,-4.7 C-2.2,-4.7 -5,-3.4 -7.2,-0.6 Z" fill="#24355e"/></g><path d="M1441.80,387.50 v-2.6 a3.1,3.1 0 0 1 6.2,0 v2.6" fill="none" stroke="#a9b9df" stroke-width="1.3"/><rect x="1440.00" y="387.10" width="9.8" height="7.4" fill="#a9b9df"/><rect x="1161.4" y="404.3" width="15.4" height="8.4" fill="#c0c0c0" stroke="#000" stroke-width="1.1"/><g transform="translate(1423.00,407.90) scale(1.000)" opacity="1"><path d="M-7.6,0.4 C-5.6,-3.4 -2.6,-5.4 0.6,-5.5 C3.6,-5.5 6.2,-3.6 7.6,-0.6 C7.9,0 7.5,0.5 7.1,0.9 C5.4,3.6 3,5.2 0.2,5.4 C-1.6,5.6 -3.4,5.2 -4.6,4.2 C-5.8,3.3 -6.9,2 -7.6,0.4 Z" fill="#000"/><path d="M-5.0,1.3 C-3.6,-1.1 -1.4,-2.1 0.6,-2.1 C2.8,-2.1 4.5,-0.9 5.4,0.9 C4.2,2.9 2.4,3.9 0.4,3.9 C-1.8,3.9 -3.7,2.9 -5.0,1.3 Z" fill="#fff"/><circle cx="0.3" cy="0.2" r="2.6" fill="#000"/><circle cx="-0.6" cy="-0.6" r="0.7" fill="#fff" opacity="0.85"/><path d="M-7.2,-0.6 C-5,-4.6 -2,-6 0.8,-6 C3.8,-6 6.2,-4.4 7.4,-1.8 C5.6,-3.8 3.4,-4.7 0.8,-4.7 C-2.2,-4.7 -5,-3.4 -7.2,-0.6 Z" fill="#000"/></g><path d="M1441.80,407.50 v-2.6 a3.1,3.1 0 0 1 6.2,0 v2.6" fill="none" stroke="#b4b4b4" stroke-width="1.3"/><rect x="1440.00" y="407.10" width="9.8" height="7.4" fill="#b4b4b4"/><rect x="1161.4" y="424.3" width="15.4" height="8.4" fill="#5e9a2b" stroke="#000" stroke-width="1.1"/><g transform="translate(1423.00,427.90) scale(1.000)" opacity="1"><path d="M-7.6,0.4 C-5.6,-3.4 -2.6,-5.4 0.6,-5.5 C3.6,-5.5 6.2,-3.6 7.6,-0.6 C7.9,0 7.5,0.5 7.1,0.9 C5.4,3.6 3,5.2 0.2,5.4 C-1.6,5.6 -3.4,5.2 -4.6,4.2 C-5.8,3.3 -6.9,2 -7.6,0.4 Z" fill="#000"/><path d="M-5.0,1.3 C-3.6,-1.1 -1.4,-2.1 0.6,-2.1 C2.8,-2.1 4.5,-0.9 5.4,0.9 C4.2,2.9 2.4,3.9 0.4,3.9 C-1.8,3.9 -3.7,2.9 -5.0,1.3 Z" fill="#fff"/><circle cx="0.3" cy="0.2" r="2.6" fill="#000"/><circle cx="-0.6" cy="-0.6" r="0.7" fill="#fff" opacity="0.85"/><path d="M-7.2,-0.6 C-5,-4.6 -2,-6 0.8,-6 C3.8,-6 6.2,-4.4 7.4,-1.8 C5.6,-3.8 3.4,-4.7 0.8,-4.7 C-2.2,-4.7 -5,-3.4 -7.2,-0.6 Z" fill="#000"/></g><path d="M1441.80,427.50 v-2.6 a3.1,3.1 0 0 1 6.2,0 v2.6" fill="none" stroke="#b4b4b4" stroke-width="1.3"/><rect x="1440.00" y="427.10" width="9.8" height="7.4" fill="#b4b4b4"/><g transform="translate(1394.70,394.20) rotate(-43.66)" opacity="0.85"><path d="M0,0 L3.6,-1.45 L18.11,-1.45 L18.11,1.45 L3.6,1.45 Z" fill="#d2a667" stroke="#7a4a10" stroke-width="0.45"/><path d="M3.8,-0.36 L15.11,-0.36" stroke="#f7d88a" stroke-width="0.9"/><path d="M3.8,0.80 L15.11,0.80" stroke="#b87818" stroke-width="0.8"/><path d="M0,0 L3.6,-1.45 L3.6,1.45 Z" fill="#d8b078" stroke="#7a4a10" stroke-width="0.3"/><path d="M0,0 L1.5,-0.61 L1.5,0.61 Z" fill="#8a5a1a"/><rect x="15.11" y="-1.45" width="3.2" height="2.90" rx="0.8" fill="#e8303a" stroke="#a01820" stroke-width="0.35"/></g></svg>
<div class="b " style="left:1455.5px;top:108.5px;width:44.5px;height:690.3px;background:linear-gradient(90deg,#efefef 0%,#e6e6e6 30%,#d6d6d6 70%,#c4c4c4 100%);"></div>
<svg class="b" style="left:0px;top:0px;overflow:hidden;" width="1500" height="800" viewBox="0 0 1500 800"><rect x="1462" y="116" width="2" height="2" fill="#a9a9a9"/><rect x="1468" y="116" width="2" height="2" fill="#a9a9a9"/><rect x="1474" y="116" width="2" height="2" fill="#a9a9a9"/><rect x="1480" y="116" width="2" height="2" fill="#a9a9a9"/><rect x="1486" y="116" width="2" height="2" fill="#a9a9a9"/><rect x="1456.3" y="120.2" width="50" height="42.3" rx="5" fill="#b5b5b5"/><rect x="1456.3" y="167" width="50" height="42.3" rx="5" fill="#b5b5b5"/><rect x="1456.3" y="418" width="50" height="42.7" rx="5" fill="#b5b5b5"/><line x1="1458" y1="262.6" x2="1500" y2="262.6" stroke="#4a4a4a" stroke-width="1" stroke-dasharray="1 2"/><line x1="1458" y1="410.5" x2="1500" y2="410.5" stroke="#4a4a4a" stroke-width="1" stroke-dasharray="1 2"/><rect x="1463.40" y="126.90" width="27.4" height="27.4" fill="#fff" stroke="#4a4a4a" stroke-width="0.9"/><rect x="1463.40" y="126.90" width="27.4" height="4.6" fill="#000"/><rect x="1464.50" y="127.80" width="2.8" height="2.8" fill="#fff"/><g transform="translate(1463.40,126.90)"><path d="M7.4,13.4 L13.6,10.4 L13.6,19.6 L7.4,22.4 Z" fill="#9a9a9a" stroke="#555" stroke-width="0.6"/><path d="M9.4,12.6 L15.6,9.6 L15.6,19 L9.4,21.8 Z" fill="#bcbcbc" stroke="#555" stroke-width="0.6"/><path d="M11.6,11.8 L20.4,8.8 L20.4,18.4 L11.6,21.4 Z" fill="#f4f4f4" stroke="#555" stroke-width="0.6"/><path d="M13.4,18.6 L18.6,11.2 M14.6,19 L19,14 M13.4,18.6 L17.6,17.4" stroke="#ee3a3a" stroke-width="0.8"/></g><rect x="1463.40" y="173.90" width="27.4" height="27.4" fill="#fff" stroke="#4a4a4a" stroke-width="0.9"/><rect x="1463.40" y="173.90" width="27.4" height="4.6" fill="#000"/><rect x="1464.50" y="174.80" width="2.8" height="2.8" fill="#fff"/><g transform="translate(1463.40,173.90)"><rect x="6.8" y="10" width="10.8" height="7.4" fill="#f3e7b3" stroke="#6a6a5a" stroke-width="0.8"/><circle cx="16" cy="17" r="4.4" fill="#f3e7b3" fill-opacity="0.85" stroke="#6a6a5a" stroke-width="0.8"/></g><rect x="1463.40" y="220.70" width="27.4" height="27.4" fill="#fff" stroke="#4a4a4a" stroke-width="0.9"/><rect x="1463.40" y="220.70" width="27.4" height="4.6" fill="#000"/><rect x="1464.50" y="221.60" width="2.8" height="2.8" fill="#fff"/><g transform="translate(1463.40,220.70)"><rect x="5.4" y="10.4" width="16.6" height="10.6" rx="2.4" fill="#f4f4f2" stroke="#c0cfe8" stroke-width="1"/></g><rect x="1463.40" y="276.90" width="27.4" height="27.4" fill="#fff" stroke="#4a4a4a" stroke-width="0.9"/><rect x="1463.40" y="276.90" width="27.4" height="4.6" fill="#000"/><rect x="1464.50" y="277.80" width="2.8" height="2.8" fill="#fff"/><g transform="translate(1463.40,276.90)"><rect x="3.2" y="8.2" width="4.2" height="3" rx="0.6" fill="#000"/><rect x="10" y="8.2" width="14.4" height="3" fill="#fff" stroke="#333" stroke-width="0.7"/><rect x="3.2" y="14.2" width="4.2" height="3" rx="0.6" fill="#000"/><rect x="10" y="14.2" width="14.4" height="3" fill="#fff" stroke="#333" stroke-width="0.7"/><rect x="3.2" y="20.2" width="4.2" height="3" rx="0.6" fill="#000"/><rect x="10" y="20.2" width="14.4" height="3" fill="#fff" stroke="#333" stroke-width="0.7"/></g><rect x="1463.40" y="322.70" width="27.4" height="27.4" fill="#fff" stroke="#4a4a4a" stroke-width="0.9"/><rect x="1463.40" y="322.70" width="27.4" height="4.6" fill="#000"/><rect x="1464.50" y="323.60" width="2.8" height="2.8" fill="#fff"/><g transform="translate(1463.40,322.70)"><path d="M6.6,10 Q13.7,7.4 20.8,10 L15.2,16.2 L15.2,22.4 L12.4,21 L12.4,16.2 Z" fill="#a4a4a4" stroke="#555" stroke-width="0.6"/><ellipse cx="13.7" cy="10" rx="7.1" ry="1.5" fill="#7a7a7a" stroke="#555" stroke-width="0.5"/></g><rect x="1463.40" y="369.20" width="27.4" height="27.4" fill="#fff" stroke="#4a4a4a" stroke-width="0.9"/><rect x="1463.40" y="369.20" width="27.4" height="4.6" fill="#000"/><rect x="1464.50" y="370.10" width="2.8" height="2.8" fill="#fff"/><g transform="translate(1463.40,369.20)"><path d="M6,9.4 L6,21.4 L10.2,18.6 L10.2,12.2 Z" fill="#f2f2f2" stroke="#444" stroke-width="0.7"/><rect x="10.2" y="12" width="11" height="7" rx="1.2" fill="#9a9a9a" stroke="#666" stroke-width="0.5"/><path d="M4,15.5 h20" stroke="#f08a8a" stroke-width="0.9" stroke-dasharray="2 1"/></g><rect x="1463.40" y="425.00" width="27.4" height="27.4" fill="#fff" stroke="#4a4a4a" stroke-width="0.9"/><rect x="1463.40" y="425.00" width="27.4" height="4.6" fill="#000"/><rect x="1464.50" y="425.90" width="2.8" height="2.8" fill="#fff"/><g transform="translate(1463.40,425.00)"><path d="M2.4,8.6 h12 M2.4,11.6 h9.6 M2.4,14.6 h14.4 M2.4,17.6 h16" stroke="#777" stroke-width="0.9" stroke-dasharray="1.6 0.6 2.4 0.5"/><path d="M0,22 h27.4" stroke="#333" stroke-width="0.8"/><path d="M2.2,24.6 h3 M9,24.6 h15" stroke="#222" stroke-width="1.1" stroke-dasharray="1.2 0.5"/></g><rect x="1463.40" y="471.80" width="27.4" height="27.4" fill="#fff" stroke="#4a4a4a" stroke-width="0.9"/><rect x="1463.40" y="471.80" width="27.4" height="4.6" fill="#000"/><rect x="1464.50" y="472.70" width="2.8" height="2.8" fill="#fff"/><g transform="translate(1463.40,471.80)"><rect x="7.2" y="9.2" width="12.6" height="13.8" rx="1" fill="#c8841c" stroke="#8a5a10" stroke-width="0.6"/><rect x="8.8" y="10.6" width="9.4" height="11" fill="#f4f4f4" stroke="#999" stroke-width="0.4"/><path d="M10.2,13.6 h6.6 M10.2,15.6 h6.6 M10.2,17.6 h5" stroke="#c4c4c4" stroke-width="0.7"/><rect x="10.8" y="8" width="5.6" height="2.8" rx="0.8" fill="#9a9c90" stroke="#666" stroke-width="0.5"/><path d="M18.2,19 L15.4,21.6 L18.2,21.6 Z" fill="#999"/></g></svg>
<div class="b " style="left:0px;top:798.8px;width:1500px;height:45.2px;background:#dcdcdc;"></div>
<div class="b " style="left:0px;top:798.4px;width:1500px;height:0.8px;background:#cfcfcf;"></div>
<span class="t" style="left:2.20px;top:807.79px;font-size:9.7px;line-height:9.7px;color:#2a2a2a;letter-spacing:0.045px;">47.0937,12.7851</span>
<span class="t" style="left:2.20px;top:828.19px;font-size:9.7px;line-height:9.7px;color:#2a2a2a;letter-spacing:-0.035px;">@47.0937,12.7851</span>
<span class="t" style="left:256.40px;top:807.79px;font-size:9.7px;line-height:9.7px;color:#2a2a2a;letter-spacing:0.298px;">48.7984&lt;15°</span>
<span class="t" style="left:256.40px;top:828.19px;font-size:9.7px;line-height:9.7px;color:#2a2a2a;letter-spacing:0.170px;">@48.7984&lt;15°</span>
<div class="b " style="left:253.4px;top:802.5px;width:1px;height:39px;background:#9a9a9a;"></div>
<div class="b " style="left:254.4px;top:802.5px;width:1px;height:39px;background:#f4f4f4;"></div>
<span class="t" style="left:532.00px;top:817.22px;font-size:9.9px;line-height:9.9px;color:#1e1e1e;letter-spacing:0.170px;">Sélectionne une entité ou une région</span>
<span class="t" style="left:949.00px;top:817.22px;font-size:9.9px;line-height:9.9px;color:#1e1e1e;letter-spacing:0.168px;">Aucune des entités sélectionnées.</span>
<svg class="b" style="left:0px;top:0px;" width="1500" height="844" viewBox="0 0 1500 844"><circle cx="509" cy="822" r="2.9" fill="#cdcdcd"/><circle cx="942.6" cy="822" r="2.9" fill="#cdcdcd"/><circle cx="1272.4" cy="822" r="2.9" fill="#cdcdcd"/><rect x="718.3" y="806.4" width="16.4" height="28.6" rx="7.6" fill="#fff" stroke="#2a2a2a" stroke-width="0.9"/><path d="M718.6,818.8 H734.4 M726.5,806.6 V809 M726.5,814.6 V818.8" stroke="#2a2a2a" stroke-width="0.8" fill="none"/><rect x="725.1" y="808.8" width="2.8" height="6" rx="1.4" fill="#fff" stroke="#2a2a2a" stroke-width="0.8"/></svg>
<svg class="b" style="left:0px;top:0px;" width="1500" height="844" viewBox="0 0 1500 844"><defs><radialGradient id="halo" cx="0.5" cy="0.5" r="0.5"><stop offset="0" stop-color="#ffffff" stop-opacity="0"/><stop offset="0.68" stop-color="#ffffff" stop-opacity="0"/><stop offset="0.80" stop-color="#ffffff" stop-opacity="0.55"/><stop offset="0.845" stop-color="#e6edf4" stop-opacity="0.75"/><stop offset="0.885" stop-color="#b9cada" stop-opacity="0.78"/><stop offset="0.94" stop-color="#a6bace" stop-opacity="0.82"/><stop offset="0.975" stop-color="#a2b7cc" stop-opacity="0.8"/><stop offset="1" stop-color="#a2b7cc" stop-opacity="0"/></radialGradient></defs><circle cx="1303" cy="245" r="39.6" fill="url(#halo)"/><path transform="translate(1303.7,245.2) scale(1.31)" d="M0,0 L0,17 L4,13.2 L6.8,20 L9.4,19 L6.6,12.3 L11.4,11.5 Z" fill="#fff" stroke="#000" stroke-width="1.1" stroke-linejoin="miter"/></svg>
</div>
</body></html>
